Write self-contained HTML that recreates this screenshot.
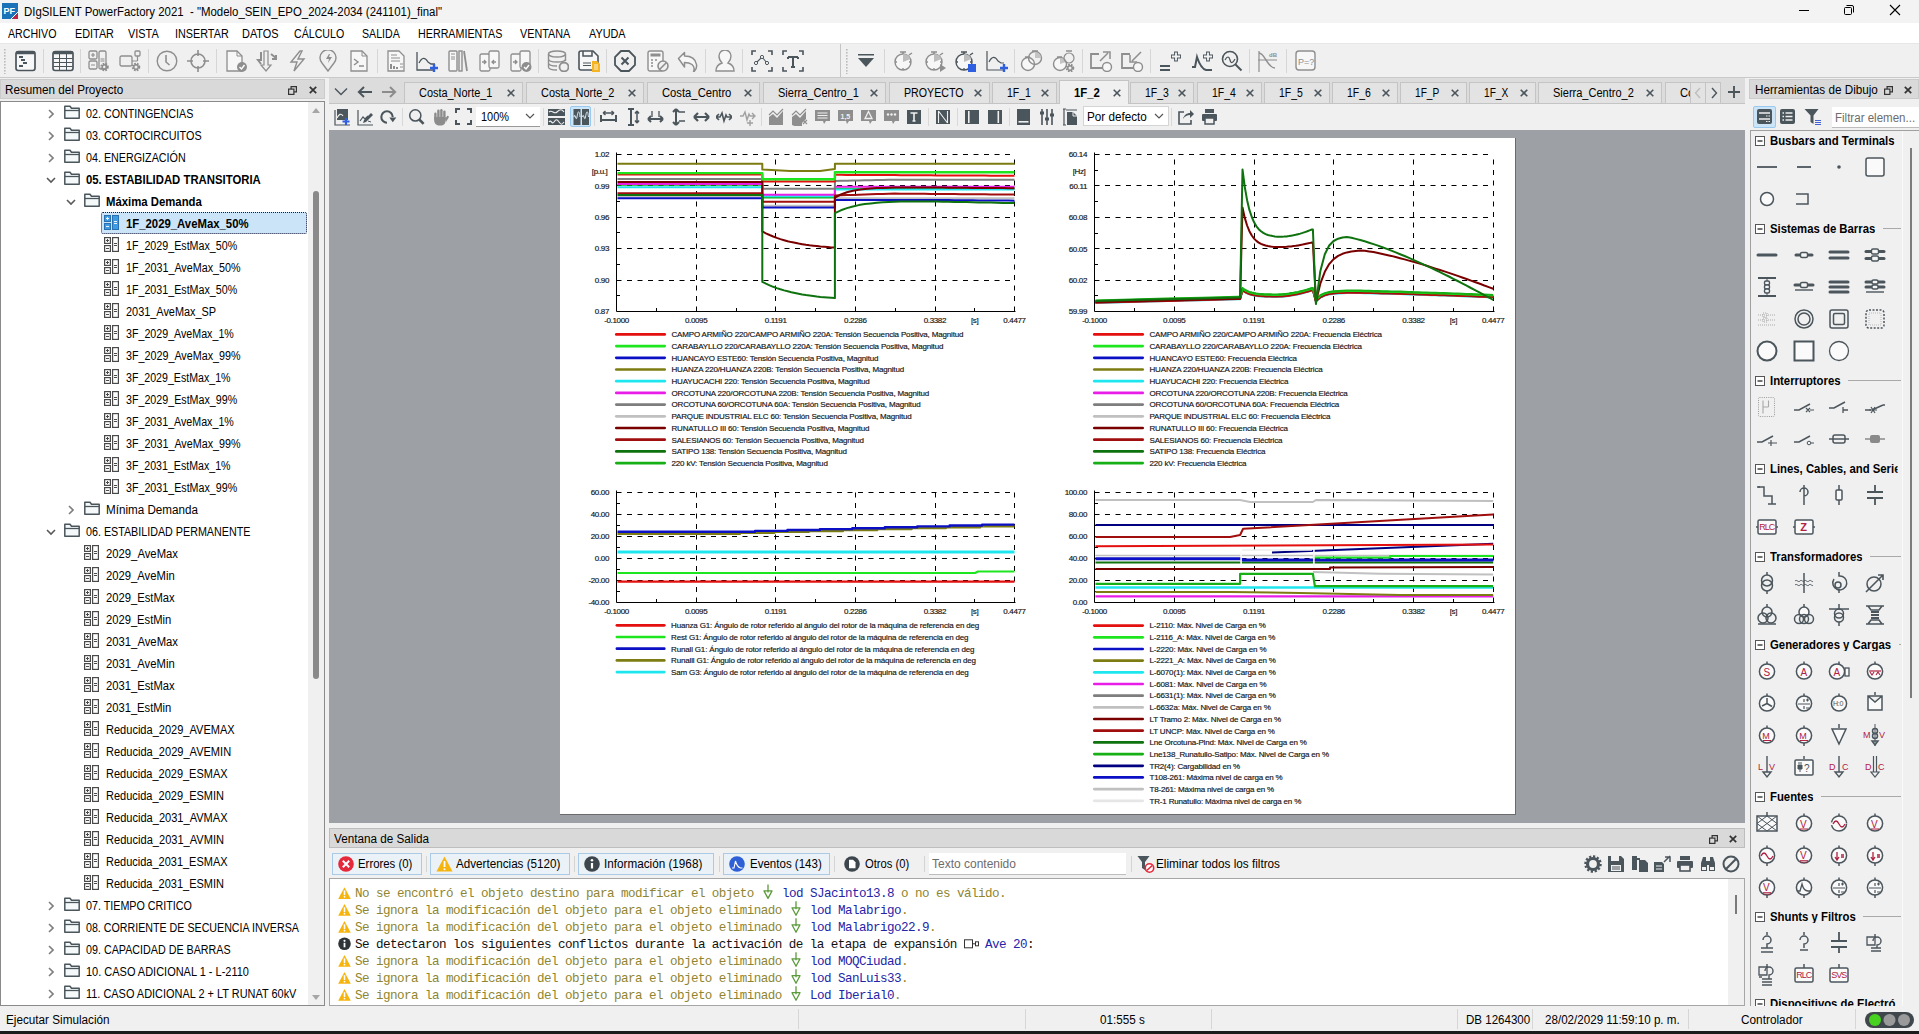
<!DOCTYPE html><html><head><meta charset="utf-8"><style>
*{margin:0;padding:0;box-sizing:border-box}
html,body{width:1919px;height:1034px;overflow:hidden;background:#f0f0f0;font-family:"Liberation Sans",sans-serif;font-size:12px;color:#000}
.a{position:absolute;display:block}
.t{position:absolute;white-space:nowrap;line-height:1}
</style></head><body>
<div class="a" style="left:0px;top:0px;width:1919px;height:23px;background:#f3f3f3;"></div>
<div class="a" style="left:0px;top:23px;width:1919px;height:20px;background:#ffffff;"></div>
<div class="a" style="left:0px;top:43px;width:1919px;height:1px;background:#e6e6e6;"></div>
<div class="a" style="left:0px;top:44px;width:1919px;height:33px;background:#f0f0f0;"></div>
<div class="a" style="left:0px;top:77px;width:1919px;height:1px;background:#c9c9c9;"></div>
<svg class="a" style="left:2px;top:3px" width="16" height="16" viewBox="0 0 16 16"><rect x="0" y="0" width="16" height="16" fill="#1a73b8"/><path d="M10 16 L16 10 L16 16 Z" fill="#c8203c"/><path d="M9 16 L16 9" stroke="#fff" stroke-width="1"/><text x="1.5" y="11" font-family="Liberation Sans" font-weight="bold" font-size="9" fill="#fff">PF</text></svg>
<div class="t" style="left:24px;top:5.54px;font-size:12px;transform:scaleX(0.9508);transform-origin:0 0;white-space:pre">DIgSILENT PowerFactory 2021  - "Modelo_SEIN_EPO_2024-2034 (241101)_final"</div>
<svg class="a" style="left:1799px;top:10px" width="10" height="1" viewBox="0 0 10 1"><rect width="10" height="1" fill="#000"/></svg>
<svg class="a" style="left:1843px;top:4px" width="12" height="12" viewBox="0 0 12 12"><rect x="1.5" y="3.5" width="7" height="7" rx="1" fill="none" stroke="#000"/><path d="M3.5 1.5 H9 a1.5 1.5 0 0 1 1.5 1.5 V8.5" fill="none" stroke="#000"/></svg>
<svg class="a" style="left:1889px;top:4px" width="12" height="12" viewBox="0 0 12 12"><path d="M1 1 L11 11 M11 1 L1 11" stroke="#000" stroke-width="1.1"/></svg>
<div class="t" style="left:8px;top:27.54px;font-size:12px;transform:scaleX(0.8850);transform-origin:0 0;">ARCHIVO</div>
<div class="t" style="left:75px;top:27.54px;font-size:12px;transform:scaleX(0.9033);transform-origin:0 0;">EDITAR</div>
<div class="t" style="left:128px;top:27.54px;font-size:12px;transform:scaleX(0.9083);transform-origin:0 0;">VISTA</div>
<div class="t" style="left:175px;top:27.54px;font-size:12px;transform:scaleX(0.9015);transform-origin:0 0;">INSERTAR</div>
<div class="t" style="left:242px;top:27.54px;font-size:12px;transform:scaleX(0.9094);transform-origin:0 0;">DATOS</div>
<div class="t" style="left:294px;top:27.54px;font-size:12px;transform:scaleX(0.8850);transform-origin:0 0;">CÁLCULO</div>
<div class="t" style="left:362px;top:27.54px;font-size:12px;transform:scaleX(0.8850);transform-origin:0 0;">SALIDA</div>
<div class="t" style="left:418px;top:27.54px;font-size:12px;transform:scaleX(0.8933);transform-origin:0 0;">HERRAMIENTAS</div>
<div class="t" style="left:520px;top:27.54px;font-size:12px;transform:scaleX(0.8991);transform-origin:0 0;">VENTANA</div>
<div class="t" style="left:589px;top:27.54px;font-size:12px;transform:scaleX(0.9045);transform-origin:0 0;">AYUDA</div>
<svg class="a" style="left:4px;top:49px" width="2" height="25" viewBox="0 0 2 25"><rect x="0" y="0" width="1.6" height="1.6" fill="#bcbcbc"/><rect x="0" y="3" width="1.6" height="1.6" fill="#bcbcbc"/><rect x="0" y="6" width="1.6" height="1.6" fill="#bcbcbc"/><rect x="0" y="9" width="1.6" height="1.6" fill="#bcbcbc"/><rect x="0" y="12" width="1.6" height="1.6" fill="#bcbcbc"/><rect x="0" y="15" width="1.6" height="1.6" fill="#bcbcbc"/><rect x="0" y="18" width="1.6" height="1.6" fill="#bcbcbc"/><rect x="0" y="21" width="1.6" height="1.6" fill="#bcbcbc"/><rect x="0" y="24" width="1.6" height="1.6" fill="#bcbcbc"/></svg>
<div class="a" style="left:43px;top:49px;width:1px;height:24px;background:#d6d6d6;"></div>
<div class="a" style="left:80px;top:49px;width:1px;height:24px;background:#d6d6d6;"></div>
<div class="a" style="left:148px;top:49px;width:1px;height:24px;background:#d6d6d6;"></div>
<div class="a" style="left:216px;top:49px;width:1px;height:24px;background:#d6d6d6;"></div>
<div class="a" style="left:377px;top:49px;width:1px;height:24px;background:#d6d6d6;"></div>
<div class="a" style="left:538px;top:49px;width:1px;height:24px;background:#d6d6d6;"></div>
<div class="a" style="left:606px;top:49px;width:1px;height:24px;background:#d6d6d6;"></div>
<div class="a" style="left:705px;top:49px;width:1px;height:24px;background:#d6d6d6;"></div>
<div class="a" style="left:742px;top:49px;width:1px;height:24px;background:#d6d6d6;"></div>
<div class="a" style="left:884px;top:49px;width:1px;height:24px;background:#d6d6d6;"></div>
<div class="a" style="left:1014px;top:49px;width:1px;height:24px;background:#d6d6d6;"></div>
<div class="a" style="left:1082px;top:49px;width:1px;height:24px;background:#d6d6d6;"></div>
<div class="a" style="left:1150px;top:49px;width:1px;height:24px;background:#d6d6d6;"></div>
<div class="a" style="left:1249px;top:49px;width:1px;height:24px;background:#d6d6d6;"></div>
<div class="a" style="left:1286px;top:49px;width:1px;height:24px;background:#d6d6d6;"></div>
<div class="a" style="left:840px;top:44px;width:1px;height:33px;background:#c4c4c4;"></div>
<svg class="a" style="left:846px;top:49px" width="2" height="25" viewBox="0 0 2 25"><rect x="0" y="0" width="1.6" height="1.6" fill="#bcbcbc"/><rect x="0" y="3" width="1.6" height="1.6" fill="#bcbcbc"/><rect x="0" y="6" width="1.6" height="1.6" fill="#bcbcbc"/><rect x="0" y="9" width="1.6" height="1.6" fill="#bcbcbc"/><rect x="0" y="12" width="1.6" height="1.6" fill="#bcbcbc"/><rect x="0" y="15" width="1.6" height="1.6" fill="#bcbcbc"/><rect x="0" y="18" width="1.6" height="1.6" fill="#bcbcbc"/><rect x="0" y="21" width="1.6" height="1.6" fill="#bcbcbc"/><rect x="0" y="24" width="1.6" height="1.6" fill="#bcbcbc"/></svg>
<svg class="a" style="left:15px;top:50px" width="22" height="22" viewBox="0 0 22 22"><rect x="1" y="1.5" width="19" height="19" rx="2.2" fill="#f7f7f7" stroke="#4b555c" stroke-width="1.7"/><rect x="1" y="1" width="19" height="3.2" rx="1.5" fill="#4b555c"/><path d="M4 7h4M6 10h4M8 13h4M4 16h4" stroke="#4b555c" stroke-width="2"/></svg>
<svg class="a" style="left:52px;top:50px" width="22" height="22" viewBox="0 0 22 22"><rect x="1" y="1.5" width="20" height="19" rx="2.2" fill="#f7f7f7" stroke="#4b555c" stroke-width="1.7"/><rect x="1" y="1" width="20" height="3.2" rx="1.5" fill="#4b555c"/><path d="M1.5 8.5h19M1.5 12.5h19M1.5 16.5h19M7.5 4v16M14.5 4v16" stroke="#4b555c" stroke-width="1"/></svg>
<svg class="a" style="left:88px;top:50px" width="22" height="22" viewBox="0 0 22 22"><rect x="1" y="1" width="8" height="8" rx="1.5" fill="none" stroke="#8e8e8e" stroke-width="1.3"/><rect x="1" y="11" width="8" height="8" rx="1.5" fill="none" stroke="#8e8e8e" stroke-width="1.3"/><path d="M3 5h4M5 3v4M3 15h4" stroke="#8e8e8e" stroke-width="1.2"/><rect x="11" y="1" width="7" height="18" rx="1.5" fill="none" stroke="#8e8e8e" stroke-width="1.3"/><path d="M12.5 9h4M12.5 11h4" stroke="#8e8e8e"/><circle cx="16.5" cy="17" r="3.2" fill="none" stroke="#8e8e8e" stroke-width="2.2" stroke-dasharray="1.6 1"/><circle cx="16.5" cy="17" r="2.2" fill="none" stroke="#8e8e8e" stroke-width="1.4"/></svg>
<svg class="a" style="left:119px;top:50px" width="22" height="22" viewBox="0 0 22 22"><rect x="1" y="6" width="12" height="10" rx="1.5" fill="none" stroke="#8e8e8e" stroke-width="1.3"/><rect x="16" y="1" width="5" height="5" rx="1" fill="none" stroke="#8e8e8e" stroke-width="1.3"/><path d="M13 11h5.5M18.5 6v5" stroke="#8e8e8e" stroke-width="1.2"/><circle cx="17" cy="17" r="3.2" fill="none" stroke="#8e8e8e" stroke-width="2.2" stroke-dasharray="1.6 1"/><circle cx="17" cy="17" r="2.2" fill="none" stroke="#8e8e8e" stroke-width="1.4"/></svg>
<svg class="a" style="left:156px;top:50px" width="22" height="22" viewBox="0 0 22 22"><circle cx="11" cy="11" r="9.8" fill="none" stroke="#8e8e8e" stroke-width="1.4"/><path d="M10 5v7l3.5 3" fill="none" stroke="#8e8e8e" stroke-width="1.6"/></svg>
<svg class="a" style="left:187px;top:50px" width="22" height="22" viewBox="0 0 22 22"><circle cx="11" cy="11" r="7" fill="none" stroke="#8e8e8e" stroke-width="1.6"/><path d="M11 0v6M11 16v6M0 11h6M16 11h6" stroke="#8e8e8e" stroke-width="1.6"/></svg>
<svg class="a" style="left:225px;top:50px" width="22" height="22" viewBox="0 0 22 22"><path d="M2 1h10l5 5v15H2z" fill="#f7f7f7" stroke="#8e8e8e" stroke-width="1.3"/><path d="M12 1v5h5" fill="none" stroke="#8e8e8e"/><circle cx="17" cy="17" r="5" fill="#8e8e8e"/><path d="M14.5 17l2 2 3-4" fill="none" stroke="#fff" stroke-width="1.4"/></svg>
<svg class="a" style="left:255px;top:50px" width="22" height="22" viewBox="0 0 22 22"><path d="M9 1h4v14h3l-5 6-5-6h3z" fill="none" stroke="#8e8e8e" stroke-width="1.2"/><path d="M6 2v8H3l3 4" fill="none" stroke="#8e8e8e" stroke-width="2"/><path d="M16 4l5 4M21 5v4h-4" fill="none" stroke="#8e8e8e" stroke-width="2"/></svg>
<svg class="a" style="left:287px;top:50px" width="22" height="22" viewBox="0 0 22 22"><path d="M13 1L4 12h6l-3 9 10-12h-6l4-8z" fill="none" stroke="#8e8e8e" stroke-width="1.4"/></svg>
<svg class="a" style="left:319px;top:50px" width="22" height="22" viewBox="0 0 22 22"><path d="M9 21L3 13A8 8 0 1 1 15 13z" fill="none" stroke="#8e8e8e" stroke-width="1.4"/><path d="M10 4l-3 5h3l-1 4 4-6h-3l1-3z" fill="#8e8e8e"/></svg>
<svg class="a" style="left:350px;top:50px" width="22" height="22" viewBox="0 0 22 22"><path d="M1 1h11l5 5v15H1z" fill="#f7f7f7" stroke="#8e8e8e" stroke-width="1.3"/><path d="M12 1v5h5" fill="none" stroke="#8e8e8e"/><path d="M4 9l4 3-4 3M9 16h5" fill="none" stroke="#8e8e8e" stroke-width="1.4"/></svg>
<svg class="a" style="left:387px;top:50px" width="22" height="22" viewBox="0 0 22 22"><path d="M1 1h11l5 5v15H1z" fill="#f7f7f7" stroke="#8e8e8e" stroke-width="1.3"/><path d="M4 5h6M4 8h9M4 11h9" stroke="#8e8e8e"/><path d="M4 19v-5M7 19v-3M10 19v-2" stroke="#8e8e8e" stroke-width="2"/><path d="M13 14h3M13 17h3" stroke="#8e8e8e"/></svg>
<svg class="a" style="left:415px;top:50px" width="24" height="22" viewBox="0 0 24 22"><path d="M2 2v18h16" fill="none" stroke="#4b555c" stroke-width="1.3"/><path d="M4 13c3-6 6-6 9-1l3 2h4" fill="none" stroke="#4b555c" stroke-width="1.3"/><path d="M19 14v8M15 18h8" stroke="#2f5fe0" stroke-width="2.4"/></svg>
<svg class="a" style="left:448px;top:50px" width="22" height="22" viewBox="0 0 22 22"><rect x="1" y="1" width="8" height="20" rx="1" fill="#f7f7f7" stroke="#8e8e8e" stroke-width="1.4"/><rect x="11" y="1" width="3" height="20" fill="none" stroke="#8e8e8e" stroke-width="1.4"/><path d="M16 1l3 20" stroke="#8e8e8e" stroke-width="1.8"/><path d="M3 4h4M3 7h4M3 9h4" stroke="#8e8e8e"/></svg>
<svg class="a" style="left:479px;top:50px" width="22" height="22" viewBox="0 0 22 22"><rect x="1" y="4" width="10" height="17" rx="1.5" fill="#f7f7f7" stroke="#8e8e8e" stroke-width="1.3"/><rect x="10" y="1" width="10" height="17" rx="1.5" fill="#f7f7f7" stroke="#8e8e8e" stroke-width="1.3"/><path d="M3 12h4M5 10l2 2-2 2M17 12h-4M15 10l-2 2 2 2" fill="none" stroke="#8e8e8e" stroke-width="1.3"/></svg>
<svg class="a" style="left:510px;top:50px" width="22" height="22" viewBox="0 0 22 22"><rect x="1" y="4" width="10" height="17" rx="1.5" fill="#f7f7f7" stroke="#8e8e8e" stroke-width="1.3"/><rect x="10" y="1" width="10" height="17" rx="1.5" fill="#f7f7f7" stroke="#8e8e8e" stroke-width="1.3"/><path d="M3 12h4M5 10l2 2-2 2" fill="none" stroke="#8e8e8e" stroke-width="1.3"/><circle cx="16.5" cy="17" r="5" fill="#8e8e8e"/><path d="M14 17l2 2 3-4" fill="none" stroke="#fff" stroke-width="1.4"/></svg>
<svg class="a" style="left:547px;top:50px" width="22" height="22" viewBox="0 0 22 22"><ellipse cx="10" cy="4" rx="8.5" ry="3" fill="none" stroke="#8e8e8e" stroke-width="1.4"/><path d="M1.5 4v13c0 2 4 3 8.5 3M18.5 4v7M1.5 9c0 2 4 3 8.5 3s8.5-1 8.5-3M1.5 13c0 2 4 3 8.5 3" fill="none" stroke="#8e8e8e" stroke-width="1.4"/><circle cx="17" cy="17" r="4.5" fill="#f0f0f0" stroke="#8e8e8e" stroke-width="1.8"/></svg>
<svg class="a" style="left:578px;top:50px" width="22" height="22" viewBox="0 0 22 22"><path d="M1 3a2 2 0 0 1 2-2h12l5 5v12a2 2 0 0 1-2 2H3a2 2 0 0 1-2-2z" fill="#f7f7f7" stroke="#4b555c" stroke-width="1.6"/><path d="M5 1v5h9V1" fill="none" stroke="#4b555c" stroke-width="1.5"/><path d="M5 13h8M5 15.5h8" stroke="#4b555c" stroke-width="1.2"/><path d="M14 11h5l3 3v8h-8z" fill="#f5b422"/><path d="M16 15h4M16 17h4M16 19h4" stroke="#fff" stroke-width=".8"/></svg>
<svg class="a" style="left:614px;top:50px" width="22" height="22" viewBox="0 0 22 22"><path d="M7 1h8l6 6v8l-6 6H7l-6-6V7z" fill="none" stroke="#4b555c" stroke-width="1.8"/><path d="M7.5 7.5l7 7M14.5 7.5l-7 7" stroke="#4b555c" stroke-width="2"/></svg>
<svg class="a" style="left:647px;top:50px" width="22" height="22" viewBox="0 0 22 22"><rect x="1" y="1" width="15" height="20" rx="2" fill="#f7f7f7" stroke="#8e8e8e" stroke-width="1.4"/><rect x="3.5" y="3.5" width="10" height="3" fill="#8e8e8e"/><path d="M4 10h2M8 10h2M4 13h2M4 16h2" stroke="#8e8e8e" stroke-width="1.6"/><circle cx="16" cy="16" r="5" fill="#f0f0f0" stroke="#8e8e8e" stroke-width="1.6"/><path d="M12.5 19.5l7-7" stroke="#8e8e8e" stroke-width="1.6"/></svg>
<svg class="a" style="left:677px;top:50px" width="22" height="22" viewBox="0 0 22 22"><path d="M1.5 8.5L7.5 2.5V6c6 0 11 2.5 12 8.5 .5 3-1 6-3 7.5 1-2.5 1-5.5-1.5-7.5-2-1.5-4.5-2-7.5-2v4.5z" fill="#f7f7f7" stroke="#8e8e8e" stroke-width="1.5" stroke-linejoin="round"/></svg>
<svg class="a" style="left:714px;top:50px" width="22" height="22" viewBox="0 0 22 22"><path d="M2 21c0-4 3-7 6-8-2-2-3-4-3-7a6 6 0 0 1 12 0c0 3-1 5-3 7 3 1 6 4 6 8z" fill="#f7f7f7" stroke="#8e8e8e" stroke-width="1.4"/></svg>
<svg class="a" style="left:751px;top:50px" width="22" height="22" viewBox="0 0 22 22"><path d="M1 5V1h4M17 1h4v4M21 17v4h-4M5 21H1v-4" fill="none" stroke="#4b555c" stroke-width="1.6"/><path d="M5 13l6-6 5 6" fill="none" stroke="#4b555c" stroke-width="1.1"/><circle cx="5" cy="13" r="1.6" fill="#fff" stroke="#4b555c"/><circle cx="11" cy="7" r="1.6" fill="#fff" stroke="#4b555c"/><circle cx="16" cy="13" r="1.6" fill="#fff" stroke="#4b555c"/></svg>
<svg class="a" style="left:782px;top:50px" width="22" height="22" viewBox="0 0 22 22"><path d="M1 5V1h4M17 1h4v4M21 17v4h-4M5 21H1v-4" fill="none" stroke="#4b555c" stroke-width="1.6"/><path d="M6 7h10M11 7v10M9 17h4M6 7v2M16 7v2" fill="none" stroke="#4b555c" stroke-width="2"/></svg>
<svg class="a" style="left:857px;top:51px" width="18" height="22" viewBox="0 0 18 22"><rect x="1" y="3" width="16" height="1.5" fill="#4b555c"/><path d="M1 7h16l-8 9z" fill="#4b555c"/></svg>
<svg class="a" style="left:894px;top:50px" width="22" height="22" viewBox="0 0 22 22"><circle cx="9" cy="12" r="8" fill="#f7f7f7" stroke="#8e8e8e" stroke-width="1.4"/><path d="M9 12V4A8 8 0 0 1 16.5 9z" fill="#bdbdbd"/><path d="M6 2h6M9 2v2M15 5l3-2" stroke="#8e8e8e" stroke-width="1.5"/><path d="M9 18v2M1 12h2M15 12h2" stroke="#8e8e8e" stroke-width="1.4"/></svg>
<svg class="a" style="left:925px;top:50px" width="22" height="22" viewBox="0 0 22 22"><circle cx="9" cy="12" r="8" fill="#f7f7f7" stroke="#8e8e8e" stroke-width="1.4"/><path d="M9 12V4A8 8 0 0 1 16.5 9z" fill="#bdbdbd"/><path d="M6 2h6M9 2v2M15 5l3-2" stroke="#8e8e8e" stroke-width="1.5"/><path d="M9 18v2M1 12h2M15 12h2" stroke="#8e8e8e" stroke-width="1.4"/><path d="M15 14v8l6-4z" fill="#8e8e8e"/></svg>
<svg class="a" style="left:955px;top:50px" width="22" height="22" viewBox="0 0 22 22"><circle cx="9" cy="12" r="8" fill="#f7f7f7" stroke="#4b555c" stroke-width="1.4"/><path d="M9 12V4A8 8 0 0 1 16.5 9z" fill="#bdbdbd"/><path d="M6 2h6M9 2v2M15 5l3-2" stroke="#4b555c" stroke-width="1.5"/><path d="M9 18v2M1 12h2M15 12h2" stroke="#4b555c" stroke-width="1.4"/><rect x="13" y="14" width="8" height="8" fill="#2f5fe0"/></svg>
<svg class="a" style="left:985px;top:50px" width="24" height="22" viewBox="0 0 24 22"><path d="M2 1v19h16" fill="none" stroke="#4b555c" stroke-width="1.2"/><path d="M4 12c3-6 6-6 9-1l3 2h3" fill="none" stroke="#4b555c" stroke-width="1.2"/><path d="M19 14v8M15 18h8" stroke="#2f5fe0" stroke-width="2.4"/></svg>
<svg class="a" style="left:1020px;top:50px" width="24" height="22" viewBox="0 0 24 22"><circle cx="8" cy="14" r="6.5" fill="#f7f7f7" stroke="#8e8e8e" stroke-width="1.4"/><circle cx="15" cy="8" r="6.5" fill="none" stroke="#8e8e8e" stroke-width="1.4"/><path d="M15 8V2A6 6 0 0 1 21 8z" fill="#c4c4c4"/><path d="M12 1h6M5 7h5" stroke="#8e8e8e" stroke-width="1.4"/></svg>
<svg class="a" style="left:1052px;top:50px" width="24" height="22" viewBox="0 0 24 22"><circle cx="8" cy="14" r="6.5" fill="#f7f7f7" stroke="#8e8e8e" stroke-width="1.4"/><path d="M8 14V8A6 6 0 0 1 14 12z" fill="#c4c4c4"/><path d="M5 7h5M14 1h6" stroke="#8e8e8e" stroke-width="1.4"/><circle cx="17" cy="8" r="5" fill="none" stroke="#8e8e8e" stroke-width="1.2"/><circle cx="18" cy="18" r="3.2" fill="none" stroke="#8e8e8e" stroke-width="2.2" stroke-dasharray="1.6 1"/><circle cx="18" cy="18" r="2.2" fill="none" stroke="#8e8e8e" stroke-width="1.4"/></svg>
<svg class="a" style="left:1090px;top:50px" width="23" height="22" viewBox="0 0 23 22"><path d="M9 4H1v14h12" fill="none" stroke="#8e8e8e" stroke-width="1.8"/><path d="M10 11l8-8M13 2h7v7" fill="none" stroke="#8e8e8e" stroke-width="1.5"/><circle cx="17" cy="17" r="4.5" fill="#f7f7f7" stroke="#8e8e8e" stroke-width="1.4"/></svg>
<svg class="a" style="left:1121px;top:50px" width="23" height="22" viewBox="0 0 23 22"><path d="M9 4H1v14h12" fill="none" stroke="#8e8e8e" stroke-width="1.8"/><path d="M20 2l-9 9M9 5v7h7" fill="none" stroke="#8e8e8e" stroke-width="1.5"/><circle cx="17" cy="17" r="4.5" fill="#f7f7f7" stroke="#8e8e8e" stroke-width="1.4"/></svg>
<svg class="a" style="left:1159px;top:50px" width="22" height="22" viewBox="0 0 22 22"><path d="M1 16h10M1 20h10" stroke="#4b555c" stroke-width="2"/><path d="M12 6.5h10M17 1.5v10" stroke="#4b555c" stroke-width="3.8"/><path d="M12.9 6.5h8.2M17 2.4v8.2" stroke="#f4f4f4" stroke-width="1.8"/></svg>
<svg class="a" style="left:1191px;top:50px" width="22" height="22" viewBox="0 0 22 22"><path d="M1 17h3l2-10c2 6 5 12 9 13h6" fill="none" stroke="#4b555c" stroke-width="2"/><path d="M12 6.5h10M17 1.5v10" stroke="#4b555c" stroke-width="3.8"/><path d="M12.9 6.5h8.2M17 2.4v8.2" stroke="#f4f4f4" stroke-width="1.8"/></svg>
<svg class="a" style="left:1221px;top:50px" width="22" height="22" viewBox="0 0 22 22"><circle cx="9" cy="9" r="7.5" fill="none" stroke="#4b555c" stroke-width="1.6"/><path d="M14.5 14.5l6 6" stroke="#4b555c" stroke-width="2"/><path d="M4 10c2-4 4-4 5 0s3 3 5-1" fill="none" stroke="#4b555c" stroke-width="1.2"/></svg>
<svg class="a" style="left:1257px;top:50px" width="22" height="22" viewBox="0 0 22 22"><path d="M2 1v21M1 10h19" stroke="#8e8e8e" stroke-width="1.2"/><path d="M2 3c6 0 8 15 16 15" fill="none" stroke="#8e8e8e" stroke-width="1.4"/><text x="12" y="7" font-size="6" font-family="Liberation Sans" font-weight="bold" fill="#8e8e8e">dB</text></svg>
<svg class="a" style="left:1295px;top:50px" width="21" height="22" viewBox="0 0 21 22"><rect x="1" y="1" width="19" height="19" rx="3" fill="#f7f7f7" stroke="#8e8e8e" stroke-width="1.4"/><text x="3" y="14.5" font-size="9" font-family="Liberation Sans" fill="#8e8e8e">P=?</text></svg>
<div class="a" style="left:0px;top:79px;width:325px;height:20px;background:#d9d9d9;border:1px solid #cbcbcb"></div>
<div class="t" style="left:5px;top:84.14px;font-size:12px;transform:scaleX(0.9743);transform-origin:0 0;">Resumen del Proyecto</div>
<svg class="a" style="left:288px;top:86px" width="9" height="9" viewBox="0 0 9 9"><rect x="0.6" y="3.1" width="5.3" height="5.3" fill="none" stroke="#333" stroke-width="1.2"/><path d="M3.1 3.1V0.6h5.3v5.3H5.9" fill="none" stroke="#333" stroke-width="1.2"/></svg>
<svg class="a" style="left:309px;top:86px" width="8" height="8" viewBox="0 0 8 8"><path d="M0.8 0.8L7.2 7.2M7.2 0.8L0.8 7.2" stroke="#333" stroke-width="1.7"/></svg>
<div class="a" style="left:0px;top:101px;width:325px;height:905px;background:#fff;border:1px solid #8a8a8a"></div>
<div class="a" style="left:308px;top:102px;width:16px;height:903px;background:#f0f0f0;"></div>
<svg class="a" style="left:311px;top:106px" width="10" height="8" viewBox="0 0 10 8"><path d="M1 7L5 2L9 7z" fill="#a6a6a6"/></svg>
<svg class="a" style="left:311px;top:994px" width="10" height="8" viewBox="0 0 10 8"><path d="M1 1L5 6L9 1z" fill="#a6a6a6"/></svg>
<div class="a" style="left:313px;top:191px;width:6px;height:488px;background:#8a8a8a;border-radius:3px"></div>
<svg class="a" style="left:48px;top:108.5px" width="6" height="10" viewBox="0 0 6 10"><path d="M1 1L5 5L1 9" fill="none" stroke="#7e7e7e" stroke-width="1.6"/></svg>
<svg class="a" style="left:64px;top:105.0px" width="16" height="14" viewBox="0 0 16 14"><path d="M0.8 1.3h5.2l1.5 2h7.7v9.9H0.8z" fill="#f5f9f9" stroke="#4b555c" stroke-width="1.5" stroke-linejoin="round"/><path d="M0.8 5.5h14.4" stroke="#4b555c" stroke-width="1.3"/></svg>
<div class="t" style="left:86px;top:107.74px;font-size:12px;transform:scaleX(0.8942);transform-origin:0 0;">02. CONTINGENCIAS</div>
<svg class="a" style="left:48px;top:130.5px" width="6" height="10" viewBox="0 0 6 10"><path d="M1 1L5 5L1 9" fill="none" stroke="#7e7e7e" stroke-width="1.6"/></svg>
<svg class="a" style="left:64px;top:127.0px" width="16" height="14" viewBox="0 0 16 14"><path d="M0.8 1.3h5.2l1.5 2h7.7v9.9H0.8z" fill="#f5f9f9" stroke="#4b555c" stroke-width="1.5" stroke-linejoin="round"/><path d="M0.8 5.5h14.4" stroke="#4b555c" stroke-width="1.3"/></svg>
<div class="t" style="left:86px;top:129.74px;font-size:12px;transform:scaleX(0.8980);transform-origin:0 0;">03. CORTOCIRCUITOS</div>
<svg class="a" style="left:48px;top:152.5px" width="6" height="10" viewBox="0 0 6 10"><path d="M1 1L5 5L1 9" fill="none" stroke="#7e7e7e" stroke-width="1.6"/></svg>
<svg class="a" style="left:64px;top:149.0px" width="16" height="14" viewBox="0 0 16 14"><path d="M0.8 1.3h5.2l1.5 2h7.7v9.9H0.8z" fill="#f5f9f9" stroke="#4b555c" stroke-width="1.5" stroke-linejoin="round"/><path d="M0.8 5.5h14.4" stroke="#4b555c" stroke-width="1.3"/></svg>
<div class="t" style="left:86px;top:151.74px;font-size:12px;transform:scaleX(0.8949);transform-origin:0 0;">04. ENERGIZACIÓN</div>
<svg class="a" style="left:46px;top:175.5px" width="10" height="8" viewBox="0 0 10 8"><path d="M1 2L5 6L9 2" fill="none" stroke="#5a5a5a" stroke-width="1.6"/></svg>
<svg class="a" style="left:64px;top:171.0px" width="16" height="14" viewBox="0 0 16 14"><path d="M0.8 1.3h5.2l1.5 2h7.7v9.9H0.8z" fill="#f5f9f9" stroke="#4b555c" stroke-width="1.5" stroke-linejoin="round"/><path d="M0.8 5.5h14.4" stroke="#4b555c" stroke-width="1.3"/></svg>
<div class="t" style="left:86px;top:173.74px;font-size:12px;font-weight:bold;transform:scaleX(0.9450);transform-origin:0 0;">05. ESTABILIDAD TRANSITORIA</div>
<svg class="a" style="left:66px;top:197.5px" width="10" height="8" viewBox="0 0 10 8"><path d="M1 2L5 6L9 2" fill="none" stroke="#5a5a5a" stroke-width="1.6"/></svg>
<svg class="a" style="left:84px;top:193.0px" width="16" height="14" viewBox="0 0 16 14"><path d="M0.8 1.3h5.2l1.5 2h7.7v9.9H0.8z" fill="#f5f9f9" stroke="#4b555c" stroke-width="1.5" stroke-linejoin="round"/><path d="M0.8 5.5h14.4" stroke="#4b555c" stroke-width="1.3"/></svg>
<div class="t" style="left:106px;top:195.74px;font-size:12px;font-weight:bold;transform:scaleX(0.9450);transform-origin:0 0;">Máxima Demanda</div>
<div class="a" style="left:101px;top:212px;width:206px;height:22px;background:#cce4f7;border:1px dotted #1a1a40;border-radius:2px"></div>
<svg class="a" style="left:104px;top:215.0px" width="15" height="15" viewBox="0 0 15 15"><rect x="0.5" y="0.5" width="6" height="6" fill="#3d9be3" stroke="#2a6fb0"/><rect x="0.5" y="8.5" width="6" height="6" fill="#3d9be3" stroke="#2a6fb0"/><rect x="8.5" y="0.5" width="6" height="14" fill="#3d9be3" stroke="#2a6fb0"/><path d="M2 3.5h3M3.5 2v3M2 11.5h3M10 6.5h3M10 8.5h3" stroke="#e8f4ff" stroke-width="1"/></svg>
<div class="t" style="left:126px;top:217.74px;font-size:12px;font-weight:bold;transform:scaleX(0.9450);transform-origin:0 0;">1F_2029_AveMax_50%</div>
<svg class="a" style="left:104px;top:237.0px" width="15" height="15" viewBox="0 0 15 15"><rect x="0.6" y="0.6" width="5.8" height="5.8" fill="none" stroke="#4a4a4a" stroke-width="1.2"/><rect x="0.6" y="8.6" width="5.8" height="5.8" fill="none" stroke="#4a4a4a" stroke-width="1.2"/><rect x="8.6" y="0.6" width="5.8" height="13.8" fill="none" stroke="#4a4a4a" stroke-width="1.2"/><path d="M2 3.5h3M3.5 2v3M2 11.5h3M10 6.5h3M10 8.5h3" stroke="#4a4a4a" stroke-width="1"/></svg>
<div class="t" style="left:126px;top:239.74px;font-size:12px;transform:scaleX(0.8911);transform-origin:0 0;">1F_2029_EstMax_50%</div>
<svg class="a" style="left:104px;top:259.0px" width="15" height="15" viewBox="0 0 15 15"><rect x="0.6" y="0.6" width="5.8" height="5.8" fill="none" stroke="#4a4a4a" stroke-width="1.2"/><rect x="0.6" y="8.6" width="5.8" height="5.8" fill="none" stroke="#4a4a4a" stroke-width="1.2"/><rect x="8.6" y="0.6" width="5.8" height="13.8" fill="none" stroke="#4a4a4a" stroke-width="1.2"/><path d="M2 3.5h3M3.5 2v3M2 11.5h3M10 6.5h3M10 8.5h3" stroke="#4a4a4a" stroke-width="1"/></svg>
<div class="t" style="left:126px;top:261.74px;font-size:12px;transform:scaleX(0.8954);transform-origin:0 0;">1F_2031_AveMax_50%</div>
<svg class="a" style="left:104px;top:281.0px" width="15" height="15" viewBox="0 0 15 15"><rect x="0.6" y="0.6" width="5.8" height="5.8" fill="none" stroke="#4a4a4a" stroke-width="1.2"/><rect x="0.6" y="8.6" width="5.8" height="5.8" fill="none" stroke="#4a4a4a" stroke-width="1.2"/><rect x="8.6" y="0.6" width="5.8" height="13.8" fill="none" stroke="#4a4a4a" stroke-width="1.2"/><path d="M2 3.5h3M3.5 2v3M2 11.5h3M10 6.5h3M10 8.5h3" stroke="#4a4a4a" stroke-width="1"/></svg>
<div class="t" style="left:126px;top:283.74px;font-size:12px;transform:scaleX(0.8911);transform-origin:0 0;">1F_2031_EstMax_50%</div>
<svg class="a" style="left:104px;top:303.0px" width="15" height="15" viewBox="0 0 15 15"><rect x="0.6" y="0.6" width="5.8" height="5.8" fill="none" stroke="#4a4a4a" stroke-width="1.2"/><rect x="0.6" y="8.6" width="5.8" height="5.8" fill="none" stroke="#4a4a4a" stroke-width="1.2"/><rect x="8.6" y="0.6" width="5.8" height="13.8" fill="none" stroke="#4a4a4a" stroke-width="1.2"/><path d="M2 3.5h3M3.5 2v3M2 11.5h3M10 6.5h3M10 8.5h3" stroke="#4a4a4a" stroke-width="1"/></svg>
<div class="t" style="left:126px;top:305.74px;font-size:12px;transform:scaleX(0.9089);transform-origin:0 0;">2031_AveMax_SP</div>
<svg class="a" style="left:104px;top:325.0px" width="15" height="15" viewBox="0 0 15 15"><rect x="0.6" y="0.6" width="5.8" height="5.8" fill="none" stroke="#4a4a4a" stroke-width="1.2"/><rect x="0.6" y="8.6" width="5.8" height="5.8" fill="none" stroke="#4a4a4a" stroke-width="1.2"/><rect x="8.6" y="0.6" width="5.8" height="13.8" fill="none" stroke="#4a4a4a" stroke-width="1.2"/><path d="M2 3.5h3M3.5 2v3M2 11.5h3M10 6.5h3M10 8.5h3" stroke="#4a4a4a" stroke-width="1"/></svg>
<div class="t" style="left:126px;top:327.74px;font-size:12px;transform:scaleX(0.8897);transform-origin:0 0;">3F_2029_AveMax_1%</div>
<svg class="a" style="left:104px;top:347.0px" width="15" height="15" viewBox="0 0 15 15"><rect x="0.6" y="0.6" width="5.8" height="5.8" fill="none" stroke="#4a4a4a" stroke-width="1.2"/><rect x="0.6" y="8.6" width="5.8" height="5.8" fill="none" stroke="#4a4a4a" stroke-width="1.2"/><rect x="8.6" y="0.6" width="5.8" height="13.8" fill="none" stroke="#4a4a4a" stroke-width="1.2"/><path d="M2 3.5h3M3.5 2v3M2 11.5h3M10 6.5h3M10 8.5h3" stroke="#4a4a4a" stroke-width="1"/></svg>
<div class="t" style="left:126px;top:349.74px;font-size:12px;transform:scaleX(0.8954);transform-origin:0 0;">3F_2029_AveMax_99%</div>
<svg class="a" style="left:104px;top:369.0px" width="15" height="15" viewBox="0 0 15 15"><rect x="0.6" y="0.6" width="5.8" height="5.8" fill="none" stroke="#4a4a4a" stroke-width="1.2"/><rect x="0.6" y="8.6" width="5.8" height="5.8" fill="none" stroke="#4a4a4a" stroke-width="1.2"/><rect x="8.6" y="0.6" width="5.8" height="13.8" fill="none" stroke="#4a4a4a" stroke-width="1.2"/><path d="M2 3.5h3M3.5 2v3M2 11.5h3M10 6.5h3M10 8.5h3" stroke="#4a4a4a" stroke-width="1"/></svg>
<div class="t" style="left:126px;top:371.74px;font-size:12px;transform:scaleX(0.8849);transform-origin:0 0;">3F_2029_EstMax_1%</div>
<svg class="a" style="left:104px;top:391.0px" width="15" height="15" viewBox="0 0 15 15"><rect x="0.6" y="0.6" width="5.8" height="5.8" fill="none" stroke="#4a4a4a" stroke-width="1.2"/><rect x="0.6" y="8.6" width="5.8" height="5.8" fill="none" stroke="#4a4a4a" stroke-width="1.2"/><rect x="8.6" y="0.6" width="5.8" height="13.8" fill="none" stroke="#4a4a4a" stroke-width="1.2"/><path d="M2 3.5h3M3.5 2v3M2 11.5h3M10 6.5h3M10 8.5h3" stroke="#4a4a4a" stroke-width="1"/></svg>
<div class="t" style="left:126px;top:393.74px;font-size:12px;transform:scaleX(0.8911);transform-origin:0 0;">3F_2029_EstMax_99%</div>
<svg class="a" style="left:104px;top:413.0px" width="15" height="15" viewBox="0 0 15 15"><rect x="0.6" y="0.6" width="5.8" height="5.8" fill="none" stroke="#4a4a4a" stroke-width="1.2"/><rect x="0.6" y="8.6" width="5.8" height="5.8" fill="none" stroke="#4a4a4a" stroke-width="1.2"/><rect x="8.6" y="0.6" width="5.8" height="13.8" fill="none" stroke="#4a4a4a" stroke-width="1.2"/><path d="M2 3.5h3M3.5 2v3M2 11.5h3M10 6.5h3M10 8.5h3" stroke="#4a4a4a" stroke-width="1"/></svg>
<div class="t" style="left:126px;top:415.74px;font-size:12px;transform:scaleX(0.8897);transform-origin:0 0;">3F_2031_AveMax_1%</div>
<svg class="a" style="left:104px;top:435.0px" width="15" height="15" viewBox="0 0 15 15"><rect x="0.6" y="0.6" width="5.8" height="5.8" fill="none" stroke="#4a4a4a" stroke-width="1.2"/><rect x="0.6" y="8.6" width="5.8" height="5.8" fill="none" stroke="#4a4a4a" stroke-width="1.2"/><rect x="8.6" y="0.6" width="5.8" height="13.8" fill="none" stroke="#4a4a4a" stroke-width="1.2"/><path d="M2 3.5h3M3.5 2v3M2 11.5h3M10 6.5h3M10 8.5h3" stroke="#4a4a4a" stroke-width="1"/></svg>
<div class="t" style="left:126px;top:437.74px;font-size:12px;transform:scaleX(0.8954);transform-origin:0 0;">3F_2031_AveMax_99%</div>
<svg class="a" style="left:104px;top:457.0px" width="15" height="15" viewBox="0 0 15 15"><rect x="0.6" y="0.6" width="5.8" height="5.8" fill="none" stroke="#4a4a4a" stroke-width="1.2"/><rect x="0.6" y="8.6" width="5.8" height="5.8" fill="none" stroke="#4a4a4a" stroke-width="1.2"/><rect x="8.6" y="0.6" width="5.8" height="13.8" fill="none" stroke="#4a4a4a" stroke-width="1.2"/><path d="M2 3.5h3M3.5 2v3M2 11.5h3M10 6.5h3M10 8.5h3" stroke="#4a4a4a" stroke-width="1"/></svg>
<div class="t" style="left:126px;top:459.74px;font-size:12px;transform:scaleX(0.8849);transform-origin:0 0;">3F_2031_EstMax_1%</div>
<svg class="a" style="left:104px;top:479.0px" width="15" height="15" viewBox="0 0 15 15"><rect x="0.6" y="0.6" width="5.8" height="5.8" fill="none" stroke="#4a4a4a" stroke-width="1.2"/><rect x="0.6" y="8.6" width="5.8" height="5.8" fill="none" stroke="#4a4a4a" stroke-width="1.2"/><rect x="8.6" y="0.6" width="5.8" height="13.8" fill="none" stroke="#4a4a4a" stroke-width="1.2"/><path d="M2 3.5h3M3.5 2v3M2 11.5h3M10 6.5h3M10 8.5h3" stroke="#4a4a4a" stroke-width="1"/></svg>
<div class="t" style="left:126px;top:481.74px;font-size:12px;transform:scaleX(0.8911);transform-origin:0 0;">3F_2031_EstMax_99%</div>
<svg class="a" style="left:68px;top:504.5px" width="6" height="10" viewBox="0 0 6 10"><path d="M1 1L5 5L1 9" fill="none" stroke="#7e7e7e" stroke-width="1.6"/></svg>
<svg class="a" style="left:84px;top:501.0px" width="16" height="14" viewBox="0 0 16 14"><path d="M0.8 1.3h5.2l1.5 2h7.7v9.9H0.8z" fill="#f5f9f9" stroke="#4b555c" stroke-width="1.5" stroke-linejoin="round"/><path d="M0.8 5.5h14.4" stroke="#4b555c" stroke-width="1.3"/></svg>
<div class="t" style="left:106px;top:503.74px;font-size:12px;transform:scaleX(0.9710);transform-origin:0 0;">Mínima Demanda</div>
<svg class="a" style="left:46px;top:527.5px" width="10" height="8" viewBox="0 0 10 8"><path d="M1 2L5 6L9 2" fill="none" stroke="#5a5a5a" stroke-width="1.6"/></svg>
<svg class="a" style="left:64px;top:523.0px" width="16" height="14" viewBox="0 0 16 14"><path d="M0.8 1.3h5.2l1.5 2h7.7v9.9H0.8z" fill="#f5f9f9" stroke="#4b555c" stroke-width="1.5" stroke-linejoin="round"/><path d="M0.8 5.5h14.4" stroke="#4b555c" stroke-width="1.3"/></svg>
<div class="t" style="left:86px;top:525.74px;font-size:12px;transform:scaleX(0.8941);transform-origin:0 0;">06. ESTABILIDAD PERMANENTE</div>
<svg class="a" style="left:84px;top:545.0px" width="15" height="15" viewBox="0 0 15 15"><rect x="0.6" y="0.6" width="5.8" height="5.8" fill="none" stroke="#4a4a4a" stroke-width="1.2"/><rect x="0.6" y="8.6" width="5.8" height="5.8" fill="none" stroke="#4a4a4a" stroke-width="1.2"/><rect x="8.6" y="0.6" width="5.8" height="13.8" fill="none" stroke="#4a4a4a" stroke-width="1.2"/><path d="M2 3.5h3M3.5 2v3M2 11.5h3M10 6.5h3M10 8.5h3" stroke="#4a4a4a" stroke-width="1"/></svg>
<div class="t" style="left:106px;top:547.74px;font-size:12px;transform:scaleX(0.9409);transform-origin:0 0;">2029_AveMax</div>
<svg class="a" style="left:84px;top:567.0px" width="15" height="15" viewBox="0 0 15 15"><rect x="0.6" y="0.6" width="5.8" height="5.8" fill="none" stroke="#4a4a4a" stroke-width="1.2"/><rect x="0.6" y="8.6" width="5.8" height="5.8" fill="none" stroke="#4a4a4a" stroke-width="1.2"/><rect x="8.6" y="0.6" width="5.8" height="13.8" fill="none" stroke="#4a4a4a" stroke-width="1.2"/><path d="M2 3.5h3M3.5 2v3M2 11.5h3M10 6.5h3M10 8.5h3" stroke="#4a4a4a" stroke-width="1"/></svg>
<div class="t" style="left:106px;top:569.74px;font-size:12px;transform:scaleX(0.9382);transform-origin:0 0;">2029_AveMin</div>
<svg class="a" style="left:84px;top:589.0px" width="15" height="15" viewBox="0 0 15 15"><rect x="0.6" y="0.6" width="5.8" height="5.8" fill="none" stroke="#4a4a4a" stroke-width="1.2"/><rect x="0.6" y="8.6" width="5.8" height="5.8" fill="none" stroke="#4a4a4a" stroke-width="1.2"/><rect x="8.6" y="0.6" width="5.8" height="13.8" fill="none" stroke="#4a4a4a" stroke-width="1.2"/><path d="M2 3.5h3M3.5 2v3M2 11.5h3M10 6.5h3M10 8.5h3" stroke="#4a4a4a" stroke-width="1"/></svg>
<div class="t" style="left:106px;top:591.74px;font-size:12px;transform:scaleX(0.9354);transform-origin:0 0;">2029_EstMax</div>
<svg class="a" style="left:84px;top:611.0px" width="15" height="15" viewBox="0 0 15 15"><rect x="0.6" y="0.6" width="5.8" height="5.8" fill="none" stroke="#4a4a4a" stroke-width="1.2"/><rect x="0.6" y="8.6" width="5.8" height="5.8" fill="none" stroke="#4a4a4a" stroke-width="1.2"/><rect x="8.6" y="0.6" width="5.8" height="13.8" fill="none" stroke="#4a4a4a" stroke-width="1.2"/><path d="M2 3.5h3M3.5 2v3M2 11.5h3M10 6.5h3M10 8.5h3" stroke="#4a4a4a" stroke-width="1"/></svg>
<div class="t" style="left:106px;top:613.74px;font-size:12px;transform:scaleX(0.9323);transform-origin:0 0;">2029_EstMin</div>
<svg class="a" style="left:84px;top:633.0px" width="15" height="15" viewBox="0 0 15 15"><rect x="0.6" y="0.6" width="5.8" height="5.8" fill="none" stroke="#4a4a4a" stroke-width="1.2"/><rect x="0.6" y="8.6" width="5.8" height="5.8" fill="none" stroke="#4a4a4a" stroke-width="1.2"/><rect x="8.6" y="0.6" width="5.8" height="13.8" fill="none" stroke="#4a4a4a" stroke-width="1.2"/><path d="M2 3.5h3M3.5 2v3M2 11.5h3M10 6.5h3M10 8.5h3" stroke="#4a4a4a" stroke-width="1"/></svg>
<div class="t" style="left:106px;top:635.74px;font-size:12px;transform:scaleX(0.9409);transform-origin:0 0;">2031_AveMax</div>
<svg class="a" style="left:84px;top:655.0px" width="15" height="15" viewBox="0 0 15 15"><rect x="0.6" y="0.6" width="5.8" height="5.8" fill="none" stroke="#4a4a4a" stroke-width="1.2"/><rect x="0.6" y="8.6" width="5.8" height="5.8" fill="none" stroke="#4a4a4a" stroke-width="1.2"/><rect x="8.6" y="0.6" width="5.8" height="13.8" fill="none" stroke="#4a4a4a" stroke-width="1.2"/><path d="M2 3.5h3M3.5 2v3M2 11.5h3M10 6.5h3M10 8.5h3" stroke="#4a4a4a" stroke-width="1"/></svg>
<div class="t" style="left:106px;top:657.74px;font-size:12px;transform:scaleX(0.9382);transform-origin:0 0;">2031_AveMin</div>
<svg class="a" style="left:84px;top:677.0px" width="15" height="15" viewBox="0 0 15 15"><rect x="0.6" y="0.6" width="5.8" height="5.8" fill="none" stroke="#4a4a4a" stroke-width="1.2"/><rect x="0.6" y="8.6" width="5.8" height="5.8" fill="none" stroke="#4a4a4a" stroke-width="1.2"/><rect x="8.6" y="0.6" width="5.8" height="13.8" fill="none" stroke="#4a4a4a" stroke-width="1.2"/><path d="M2 3.5h3M3.5 2v3M2 11.5h3M10 6.5h3M10 8.5h3" stroke="#4a4a4a" stroke-width="1"/></svg>
<div class="t" style="left:106px;top:679.74px;font-size:12px;transform:scaleX(0.9354);transform-origin:0 0;">2031_EstMax</div>
<svg class="a" style="left:84px;top:699.0px" width="15" height="15" viewBox="0 0 15 15"><rect x="0.6" y="0.6" width="5.8" height="5.8" fill="none" stroke="#4a4a4a" stroke-width="1.2"/><rect x="0.6" y="8.6" width="5.8" height="5.8" fill="none" stroke="#4a4a4a" stroke-width="1.2"/><rect x="8.6" y="0.6" width="5.8" height="13.8" fill="none" stroke="#4a4a4a" stroke-width="1.2"/><path d="M2 3.5h3M3.5 2v3M2 11.5h3M10 6.5h3M10 8.5h3" stroke="#4a4a4a" stroke-width="1"/></svg>
<div class="t" style="left:106px;top:701.74px;font-size:12px;transform:scaleX(0.9323);transform-origin:0 0;">2031_EstMin</div>
<svg class="a" style="left:84px;top:721.0px" width="15" height="15" viewBox="0 0 15 15"><rect x="0.6" y="0.6" width="5.8" height="5.8" fill="none" stroke="#4a4a4a" stroke-width="1.2"/><rect x="0.6" y="8.6" width="5.8" height="5.8" fill="none" stroke="#4a4a4a" stroke-width="1.2"/><rect x="8.6" y="0.6" width="5.8" height="13.8" fill="none" stroke="#4a4a4a" stroke-width="1.2"/><path d="M2 3.5h3M3.5 2v3M2 11.5h3M10 6.5h3M10 8.5h3" stroke="#4a4a4a" stroke-width="1"/></svg>
<div class="t" style="left:106px;top:723.74px;font-size:12px;transform:scaleX(0.9199);transform-origin:0 0;">Reducida_2029_AVEMAX</div>
<svg class="a" style="left:84px;top:743.0px" width="15" height="15" viewBox="0 0 15 15"><rect x="0.6" y="0.6" width="5.8" height="5.8" fill="none" stroke="#4a4a4a" stroke-width="1.2"/><rect x="0.6" y="8.6" width="5.8" height="5.8" fill="none" stroke="#4a4a4a" stroke-width="1.2"/><rect x="8.6" y="0.6" width="5.8" height="13.8" fill="none" stroke="#4a4a4a" stroke-width="1.2"/><path d="M2 3.5h3M3.5 2v3M2 11.5h3M10 6.5h3M10 8.5h3" stroke="#4a4a4a" stroke-width="1"/></svg>
<div class="t" style="left:106px;top:745.74px;font-size:12px;transform:scaleX(0.9210);transform-origin:0 0;">Reducida_2029_AVEMIN</div>
<svg class="a" style="left:84px;top:765.0px" width="15" height="15" viewBox="0 0 15 15"><rect x="0.6" y="0.6" width="5.8" height="5.8" fill="none" stroke="#4a4a4a" stroke-width="1.2"/><rect x="0.6" y="8.6" width="5.8" height="5.8" fill="none" stroke="#4a4a4a" stroke-width="1.2"/><rect x="8.6" y="0.6" width="5.8" height="13.8" fill="none" stroke="#4a4a4a" stroke-width="1.2"/><path d="M2 3.5h3M3.5 2v3M2 11.5h3M10 6.5h3M10 8.5h3" stroke="#4a4a4a" stroke-width="1"/></svg>
<div class="t" style="left:106px;top:767.74px;font-size:12px;transform:scaleX(0.9159);transform-origin:0 0;">Reducida_2029_ESMAX</div>
<svg class="a" style="left:84px;top:787.0px" width="15" height="15" viewBox="0 0 15 15"><rect x="0.6" y="0.6" width="5.8" height="5.8" fill="none" stroke="#4a4a4a" stroke-width="1.2"/><rect x="0.6" y="8.6" width="5.8" height="5.8" fill="none" stroke="#4a4a4a" stroke-width="1.2"/><rect x="8.6" y="0.6" width="5.8" height="13.8" fill="none" stroke="#4a4a4a" stroke-width="1.2"/><path d="M2 3.5h3M3.5 2v3M2 11.5h3M10 6.5h3M10 8.5h3" stroke="#4a4a4a" stroke-width="1"/></svg>
<div class="t" style="left:106px;top:789.74px;font-size:12px;transform:scaleX(0.9168);transform-origin:0 0;">Reducida_2029_ESMIN</div>
<svg class="a" style="left:84px;top:809.0px" width="15" height="15" viewBox="0 0 15 15"><rect x="0.6" y="0.6" width="5.8" height="5.8" fill="none" stroke="#4a4a4a" stroke-width="1.2"/><rect x="0.6" y="8.6" width="5.8" height="5.8" fill="none" stroke="#4a4a4a" stroke-width="1.2"/><rect x="8.6" y="0.6" width="5.8" height="13.8" fill="none" stroke="#4a4a4a" stroke-width="1.2"/><path d="M2 3.5h3M3.5 2v3M2 11.5h3M10 6.5h3M10 8.5h3" stroke="#4a4a4a" stroke-width="1"/></svg>
<div class="t" style="left:106px;top:811.74px;font-size:12px;transform:scaleX(0.9221);transform-origin:0 0;">Reducida_2031_AVMAX</div>
<svg class="a" style="left:84px;top:831.0px" width="15" height="15" viewBox="0 0 15 15"><rect x="0.6" y="0.6" width="5.8" height="5.8" fill="none" stroke="#4a4a4a" stroke-width="1.2"/><rect x="0.6" y="8.6" width="5.8" height="5.8" fill="none" stroke="#4a4a4a" stroke-width="1.2"/><rect x="8.6" y="0.6" width="5.8" height="13.8" fill="none" stroke="#4a4a4a" stroke-width="1.2"/><path d="M2 3.5h3M3.5 2v3M2 11.5h3M10 6.5h3M10 8.5h3" stroke="#4a4a4a" stroke-width="1"/></svg>
<div class="t" style="left:106px;top:833.74px;font-size:12px;transform:scaleX(0.9232);transform-origin:0 0;">Reducida_2031_AVMIN</div>
<svg class="a" style="left:84px;top:853.0px" width="15" height="15" viewBox="0 0 15 15"><rect x="0.6" y="0.6" width="5.8" height="5.8" fill="none" stroke="#4a4a4a" stroke-width="1.2"/><rect x="0.6" y="8.6" width="5.8" height="5.8" fill="none" stroke="#4a4a4a" stroke-width="1.2"/><rect x="8.6" y="0.6" width="5.8" height="13.8" fill="none" stroke="#4a4a4a" stroke-width="1.2"/><path d="M2 3.5h3M3.5 2v3M2 11.5h3M10 6.5h3M10 8.5h3" stroke="#4a4a4a" stroke-width="1"/></svg>
<div class="t" style="left:106px;top:855.74px;font-size:12px;transform:scaleX(0.9159);transform-origin:0 0;">Reducida_2031_ESMAX</div>
<svg class="a" style="left:84px;top:875.0px" width="15" height="15" viewBox="0 0 15 15"><rect x="0.6" y="0.6" width="5.8" height="5.8" fill="none" stroke="#4a4a4a" stroke-width="1.2"/><rect x="0.6" y="8.6" width="5.8" height="5.8" fill="none" stroke="#4a4a4a" stroke-width="1.2"/><rect x="8.6" y="0.6" width="5.8" height="13.8" fill="none" stroke="#4a4a4a" stroke-width="1.2"/><path d="M2 3.5h3M3.5 2v3M2 11.5h3M10 6.5h3M10 8.5h3" stroke="#4a4a4a" stroke-width="1"/></svg>
<div class="t" style="left:106px;top:877.74px;font-size:12px;transform:scaleX(0.9168);transform-origin:0 0;">Reducida_2031_ESMIN</div>
<svg class="a" style="left:48px;top:900.5px" width="6" height="10" viewBox="0 0 6 10"><path d="M1 1L5 5L1 9" fill="none" stroke="#7e7e7e" stroke-width="1.6"/></svg>
<svg class="a" style="left:64px;top:897.0px" width="16" height="14" viewBox="0 0 16 14"><path d="M0.8 1.3h5.2l1.5 2h7.7v9.9H0.8z" fill="#f5f9f9" stroke="#4b555c" stroke-width="1.5" stroke-linejoin="round"/><path d="M0.8 5.5h14.4" stroke="#4b555c" stroke-width="1.3"/></svg>
<div class="t" style="left:86px;top:899.74px;font-size:12px;transform:scaleX(0.8941);transform-origin:0 0;">07. TIEMPO CRITICO</div>
<svg class="a" style="left:48px;top:922.5px" width="6" height="10" viewBox="0 0 6 10"><path d="M1 1L5 5L1 9" fill="none" stroke="#7e7e7e" stroke-width="1.6"/></svg>
<svg class="a" style="left:64px;top:919.0px" width="16" height="14" viewBox="0 0 16 14"><path d="M0.8 1.3h5.2l1.5 2h7.7v9.9H0.8z" fill="#f5f9f9" stroke="#4b555c" stroke-width="1.5" stroke-linejoin="round"/><path d="M0.8 5.5h14.4" stroke="#4b555c" stroke-width="1.3"/></svg>
<div class="t" style="left:86px;top:921.74px;font-size:12px;transform:scaleX(0.8893);transform-origin:0 0;">08. CORRIENTE DE SECUENCIA INVERSA</div>
<svg class="a" style="left:48px;top:944.5px" width="6" height="10" viewBox="0 0 6 10"><path d="M1 1L5 5L1 9" fill="none" stroke="#7e7e7e" stroke-width="1.6"/></svg>
<svg class="a" style="left:64px;top:941.0px" width="16" height="14" viewBox="0 0 16 14"><path d="M0.8 1.3h5.2l1.5 2h7.7v9.9H0.8z" fill="#f5f9f9" stroke="#4b555c" stroke-width="1.5" stroke-linejoin="round"/><path d="M0.8 5.5h14.4" stroke="#4b555c" stroke-width="1.3"/></svg>
<div class="t" style="left:86px;top:943.74px;font-size:12px;transform:scaleX(0.8940);transform-origin:0 0;">09. CAPACIDAD DE BARRAS</div>
<svg class="a" style="left:48px;top:966.5px" width="6" height="10" viewBox="0 0 6 10"><path d="M1 1L5 5L1 9" fill="none" stroke="#7e7e7e" stroke-width="1.6"/></svg>
<svg class="a" style="left:64px;top:963.0px" width="16" height="14" viewBox="0 0 16 14"><path d="M0.8 1.3h5.2l1.5 2h7.7v9.9H0.8z" fill="#f5f9f9" stroke="#4b555c" stroke-width="1.5" stroke-linejoin="round"/><path d="M0.8 5.5h14.4" stroke="#4b555c" stroke-width="1.3"/></svg>
<div class="t" style="left:86px;top:965.74px;font-size:12px;transform:scaleX(0.9149);transform-origin:0 0;">10. CASO ADICIONAL 1 - L-2110</div>
<svg class="a" style="left:48px;top:988.5px" width="6" height="10" viewBox="0 0 6 10"><path d="M1 1L5 5L1 9" fill="none" stroke="#7e7e7e" stroke-width="1.6"/></svg>
<svg class="a" style="left:64px;top:985.0px" width="16" height="14" viewBox="0 0 16 14"><path d="M0.8 1.3h5.2l1.5 2h7.7v9.9H0.8z" fill="#f5f9f9" stroke="#4b555c" stroke-width="1.5" stroke-linejoin="round"/><path d="M0.8 5.5h14.4" stroke="#4b555c" stroke-width="1.3"/></svg>
<div class="t" style="left:86px;top:987.74px;font-size:12px;transform:scaleX(0.9113);transform-origin:0 0;">11. CASO ADICIONAL 2 + LT RUNAT 60kV</div>
<div class="a" style="left:325px;top:78px;width:4px;height:928px;background:#f0f0f0;"></div>
<div class="a" style="left:329px;top:78px;width:1416px;height:26px;background:#dcdcdc;"></div>
<div class="a" style="left:329px;top:103px;width:1416px;height:1px;background:#c4c4c4;"></div>
<svg class="a" style="left:334px;top:87px" width="14" height="9" viewBox="0 0 14 9"><path d="M1 1.5L7 7.5L13 1.5" fill="none" stroke="#4b555c" stroke-width="1.4"/></svg>
<svg class="a" style="left:357px;top:86px" width="16" height="12" viewBox="0 0 16 12"><path d="M15 6H2M7 1L1.8 6L7 11" fill="none" stroke="#4b555c" stroke-width="1.9"/></svg>
<svg class="a" style="left:381px;top:86px" width="16" height="12" viewBox="0 0 16 12"><path d="M1 6H14M9 1L14.2 6L9 11" fill="none" stroke="#8c8c8c" stroke-width="1.9"/></svg>
<div class="a" style="left:404px;top:82px;width:119px;height:22px;background:#e3e3e3;border:1px solid #c4c4c4"></div>
<div class="t" style="left:418.5px;top:86.84px;font-size:12px;transform:scaleX(0.9092);transform-origin:0 0;">Costa_Norte_1</div>
<svg class="a" style="left:507px;top:89px" width="8" height="8" viewBox="0 0 8 8"><path d="M0.7 0.7L7.3 7.3M7.3 0.7L0.7 7.3" stroke="#4b555c" stroke-width="1.6"/></svg>
<div class="a" style="left:526px;top:82px;width:118px;height:22px;background:#e3e3e3;border:1px solid #c4c4c4"></div>
<div class="t" style="left:540.5px;top:86.84px;font-size:12px;transform:scaleX(0.9092);transform-origin:0 0;">Costa_Norte_2</div>
<svg class="a" style="left:628px;top:89px" width="8" height="8" viewBox="0 0 8 8"><path d="M0.7 0.7L7.3 7.3M7.3 0.7L0.7 7.3" stroke="#4b555c" stroke-width="1.6"/></svg>
<div class="a" style="left:647px;top:82px;width:113px;height:22px;background:#e3e3e3;border:1px solid #c4c4c4"></div>
<div class="t" style="left:661.5px;top:86.84px;font-size:12px;transform:scaleX(0.9370);transform-origin:0 0;">Costa_Centro</div>
<svg class="a" style="left:744px;top:89px" width="8" height="8" viewBox="0 0 8 8"><path d="M0.7 0.7L7.3 7.3M7.3 0.7L0.7 7.3" stroke="#4b555c" stroke-width="1.6"/></svg>
<div class="a" style="left:763px;top:82px;width:123px;height:22px;background:#e3e3e3;border:1px solid #c4c4c4"></div>
<div class="t" style="left:777.5px;top:86.84px;font-size:12px;transform:scaleX(0.9176);transform-origin:0 0;">Sierra_Centro_1</div>
<svg class="a" style="left:870px;top:89px" width="8" height="8" viewBox="0 0 8 8"><path d="M0.7 0.7L7.3 7.3M7.3 0.7L0.7 7.3" stroke="#4b555c" stroke-width="1.6"/></svg>
<div class="a" style="left:889px;top:82px;width:101px;height:22px;background:#e3e3e3;border:1px solid #c4c4c4"></div>
<div class="t" style="left:903.5px;top:86.84px;font-size:12px;transform:scaleX(0.8879);transform-origin:0 0;">PROYECTO</div>
<svg class="a" style="left:974px;top:89px" width="8" height="8" viewBox="0 0 8 8"><path d="M0.7 0.7L7.3 7.3M7.3 0.7L0.7 7.3" stroke="#4b555c" stroke-width="1.6"/></svg>
<div class="a" style="left:992px;top:82px;width:65px;height:22px;background:#e3e3e3;border:1px solid #c4c4c4"></div>
<div class="t" style="left:1006.5px;top:86.84px;font-size:12px;transform:scaleX(0.8716);transform-origin:0 0;">1F_1</div>
<svg class="a" style="left:1041px;top:89px" width="8" height="8" viewBox="0 0 8 8"><path d="M0.7 0.7L7.3 7.3M7.3 0.7L0.7 7.3" stroke="#4b555c" stroke-width="1.6"/></svg>
<div class="a" style="left:1059px;top:80px;width:70px;height:24px;background:#f0f0f0;border:1px solid #c4c4c4;border-bottom:none"></div>
<div class="t" style="left:1073.5px;top:86.84px;font-size:12px;font-weight:bold;transform:scaleX(0.9450);transform-origin:0 0;">1F_2</div>
<svg class="a" style="left:1113px;top:89px" width="8" height="8" viewBox="0 0 8 8"><path d="M0.7 0.7L7.3 7.3M7.3 0.7L0.7 7.3" stroke="#4b555c" stroke-width="1.6"/></svg>
<div class="a" style="left:1130px;top:82px;width:64px;height:22px;background:#e3e3e3;border:1px solid #c4c4c4"></div>
<div class="t" style="left:1144.5px;top:86.84px;font-size:12px;transform:scaleX(0.8716);transform-origin:0 0;">1F_3</div>
<svg class="a" style="left:1178px;top:89px" width="8" height="8" viewBox="0 0 8 8"><path d="M0.7 0.7L7.3 7.3M7.3 0.7L0.7 7.3" stroke="#4b555c" stroke-width="1.6"/></svg>
<div class="a" style="left:1197px;top:82px;width:65px;height:22px;background:#e3e3e3;border:1px solid #c4c4c4"></div>
<div class="t" style="left:1211.5px;top:86.84px;font-size:12px;transform:scaleX(0.8716);transform-origin:0 0;">1F_4</div>
<svg class="a" style="left:1246px;top:89px" width="8" height="8" viewBox="0 0 8 8"><path d="M0.7 0.7L7.3 7.3M7.3 0.7L0.7 7.3" stroke="#4b555c" stroke-width="1.6"/></svg>
<div class="a" style="left:1264px;top:82px;width:66px;height:22px;background:#e3e3e3;border:1px solid #c4c4c4"></div>
<div class="t" style="left:1278.5px;top:86.84px;font-size:12px;transform:scaleX(0.8716);transform-origin:0 0;">1F_5</div>
<svg class="a" style="left:1314px;top:89px" width="8" height="8" viewBox="0 0 8 8"><path d="M0.7 0.7L7.3 7.3M7.3 0.7L0.7 7.3" stroke="#4b555c" stroke-width="1.6"/></svg>
<div class="a" style="left:1332px;top:82px;width:66px;height:22px;background:#e3e3e3;border:1px solid #c4c4c4"></div>
<div class="t" style="left:1346.5px;top:86.84px;font-size:12px;transform:scaleX(0.8716);transform-origin:0 0;">1F_6</div>
<svg class="a" style="left:1382px;top:89px" width="8" height="8" viewBox="0 0 8 8"><path d="M0.7 0.7L7.3 7.3M7.3 0.7L0.7 7.3" stroke="#4b555c" stroke-width="1.6"/></svg>
<div class="a" style="left:1400px;top:82px;width:67px;height:22px;background:#e3e3e3;border:1px solid #c4c4c4"></div>
<div class="t" style="left:1414.5px;top:86.84px;font-size:12px;transform:scaleX(0.8454);transform-origin:0 0;">1F_P</div>
<svg class="a" style="left:1451px;top:89px" width="8" height="8" viewBox="0 0 8 8"><path d="M0.7 0.7L7.3 7.3M7.3 0.7L0.7 7.3" stroke="#4b555c" stroke-width="1.6"/></svg>
<div class="a" style="left:1469px;top:82px;width:67px;height:22px;background:#e3e3e3;border:1px solid #c4c4c4"></div>
<div class="t" style="left:1483.5px;top:86.84px;font-size:12px;transform:scaleX(0.8454);transform-origin:0 0;">1F_X</div>
<svg class="a" style="left:1520px;top:89px" width="8" height="8" viewBox="0 0 8 8"><path d="M0.7 0.7L7.3 7.3M7.3 0.7L0.7 7.3" stroke="#4b555c" stroke-width="1.6"/></svg>
<div class="a" style="left:1538px;top:82px;width:124px;height:22px;background:#e3e3e3;border:1px solid #c4c4c4"></div>
<div class="t" style="left:1552.5px;top:86.84px;font-size:12px;transform:scaleX(0.9176);transform-origin:0 0;">Sierra_Centro_2</div>
<svg class="a" style="left:1646px;top:89px" width="8" height="8" viewBox="0 0 8 8"><path d="M0.7 0.7L7.3 7.3M7.3 0.7L0.7 7.3" stroke="#4b555c" stroke-width="1.6"/></svg>
<div class="a" style="left:1665px;top:82px;width:55px;height:22px;background:#e3e3e3;border:1px solid #c4c4c4"></div>
<div class="t" style="left:1679.5px;top:86.84px;font-size:12px;transform:scaleX(0.9350);transform-origin:0 0;">Co</div>
<div class="a" style="left:1690px;top:82px;width:16px;height:22px;background:#e3e3e3;border:1px solid #c4c4c4"></div>
<div class="a" style="left:1705px;top:82px;width:16px;height:22px;background:#e3e3e3;border:1px solid #c4c4c4"></div>
<svg class="a" style="left:1694px;top:87px" width="8" height="12" viewBox="0 0 8 12"><path d="M6 1L1.5 6L6 11" fill="none" stroke="#bdbdbd" stroke-width="1.4"/></svg>
<svg class="a" style="left:1710px;top:87px" width="8" height="12" viewBox="0 0 8 12"><path d="M2 1L6.5 6L2 11" fill="none" stroke="#4b555c" stroke-width="1.4"/></svg>
<svg class="a" style="left:1727px;top:85px" width="14" height="14" viewBox="0 0 14 14"><path d="M7 1V13M1 7H13" stroke="#4b555c" stroke-width="1.9"/></svg>
<div class="a" style="left:329px;top:104px;width:1416px;height:26px;background:#f0f0f0;"></div>
<div class="a" style="left:402px;top:108px;width:1px;height:18px;background:#d8d8d8;"></div>
<div class="a" style="left:543px;top:108px;width:1px;height:18px;background:#d8d8d8;"></div>
<div class="a" style="left:594px;top:108px;width:1px;height:18px;background:#d8d8d8;"></div>
<div class="a" style="left:761px;top:108px;width:1px;height:18px;background:#d8d8d8;"></div>
<div class="a" style="left:928px;top:108px;width:1px;height:18px;background:#d8d8d8;"></div>
<div class="a" style="left:957px;top:108px;width:1px;height:18px;background:#d8d8d8;"></div>
<div class="a" style="left:1009px;top:108px;width:1px;height:18px;background:#d8d8d8;"></div>
<div class="a" style="left:1171px;top:108px;width:1px;height:18px;background:#d8d8d8;"></div>
<svg class="a" style="left:334px;top:108px" width="17" height="18" viewBox="0 0 17 18"><path d="M1 2v15h15" fill="none" stroke="#4b555c" stroke-width="1.2"/><rect x="3" y="1" width="11" height="11" fill="#4b555c"/><path d="M3 10c2-4 4-5 6-2" fill="none" stroke="#f0f0f0" stroke-width="1.2"/><path d="M12 10v7M8.5 13.5h7" stroke="#2f5fe0" stroke-width="2.2"/></svg>
<svg class="a" style="left:357px;top:108px" width="17" height="18" viewBox="0 0 17 18"><path d="M1 2v15h15" fill="none" stroke="#4b555c" stroke-width="1.2"/><path d="M3 13l3-4 2 2 3-3" fill="none" stroke="#4b555c" stroke-width="1.2"/><path d="M7 12l7-7 2 2-7 7-3 1z" fill="#4b555c"/><path d="M11 13l3 1" stroke="#4b555c"/></svg>
<svg class="a" style="left:380px;top:108px" width="17" height="18" viewBox="0 0 17 18"><path d="M7 14.7A5.7 5.7 0 1 1 12.7 9" fill="none" stroke="#4b555c" stroke-width="2.1"/><path d="M9.3 9.6h7l-3.5 4.6z" fill="#4b555c"/></svg>
<svg class="a" style="left:408px;top:108px" width="17" height="18" viewBox="0 0 17 18"><circle cx="7.3" cy="7.4" r="5.6" fill="none" stroke="#4b555c" stroke-width="1.5"/><path d="M11.3 11.5l4.3 4.3" stroke="#4b555c" stroke-width="2.6"/></svg>
<svg class="a" style="left:432px;top:108px" width="17" height="18" viewBox="0 0 17 18"><g fill="#8c8c8c"><rect x="2.2" y="4.5" width="2.4" height="8" rx="1.2"/><rect x="5.2" y="1.5" width="2.4" height="10" rx="1.2"/><rect x="8.2" y="1" width="2.4" height="10" rx="1.2"/><rect x="11.2" y="2.5" width="2.4" height="9" rx="1.2"/><path d="M2.2 9h11.4v3.5c0 3-2 5-5 5h-1.5c-3 0-4.9-2.5-4.9-5z"/><path d="M13 11l1.8-2.6a1.1 1.1 0 0 1 1.9 1.1L14 14z"/></g></svg>
<svg class="a" style="left:455px;top:108px" width="17" height="18" viewBox="0 0 17 18"><path d="M1 5V1h4M12 1h4v4M16 12v4h-4M5 16H1v-4" fill="none" stroke="#4b555c" stroke-width="2"/></svg>
<div class="a" style="left:476px;top:107px;width:64px;height:20px;background:#fff;border-bottom:1px solid #9a9a9a"></div>
<div class="t" style="left:481px;top:111.34px;font-size:12px;transform:scaleX(0.9131);transform-origin:0 0;">100%</div>
<svg class="a" style="left:525px;top:113px" width="10" height="7" viewBox="0 0 10 7"><path d="M1 1L5 5L9 1" fill="none" stroke="#555" stroke-width="1.2"/></svg>
<svg class="a" style="left:548px;top:108px" width="17" height="18" viewBox="0 0 17 18"><rect x="0" y="1" width="17" height="7" fill="#4b555c"/><rect x="0" y="10" width="17" height="7" fill="#4b555c"/><path d="M1 4c3-3 5 3 8 0s5-3 7 0" fill="none" stroke="#f0f0f0" stroke-width="1.1"/><path d="M1 14c2-3 3 3 5 0s3-3 5 0 3 3 5 0" fill="none" stroke="#f0f0f0" stroke-width="1.1"/></svg>
<div class="a" style="left:570px;top:106px;width:21px;height:21px;background:#cce4f7;border:1px solid #99c9ef;border-radius:2px"></div>
<svg class="a" style="left:573px;top:108px" width="17" height="18" viewBox="0 0 17 18"><rect x="0.5" y="1" width="7" height="16" fill="#4b555c"/><rect x="9" y="1" width="7" height="16" fill="#4b555c"/><path d="M1 9c1-6 2 6 3 0s2-8 3 0M9.5 9c1-6 2 6 3 0s2-8 3 0" fill="none" stroke="#d8e8f5" stroke-width="1"/></svg>
<svg class="a" style="left:600px;top:108px" width="17" height="18" viewBox="0 0 17 18"><path d="M1 7v7M16 7v7M1 12h15" fill="none" stroke="#4b555c" stroke-width="2"/><path d="M3 5h11M3 5l2.5-2M3 5l2.5 2M14 5l-2.5-2M14 5l-2.5 2" fill="none" stroke="#4b555c" stroke-width="1.5"/></svg>
<svg class="a" style="left:627px;top:108px" width="13" height="18" viewBox="0 0 13 18"><path d="M1 1h6M1 17h6M4 1v16" fill="none" stroke="#4b555c" stroke-width="2"/><path d="M10 3v12M10 3l-2 2.5M10 3l2 2.5M10 15l-2-2.5M10 15l2-2.5" fill="none" stroke="#4b555c" stroke-width="1.5"/></svg>
<svg class="a" style="left:647px;top:108px" width="17" height="18" viewBox="0 0 17 18"><path d="M1 11h15M1 11l3-3M1 11l3 3M16 11l-3-3M16 11l-3 3" fill="none" stroke="#4b555c" stroke-width="2"/><path d="M5 3v6M12 3v6" stroke="#4b555c" stroke-width="1.3"/></svg>
<svg class="a" style="left:672px;top:108px" width="14" height="18" viewBox="0 0 14 18"><path d="M4 1v16M4 1l-3 3M4 1l3 3M4 17l-3-3M4 17l3-3" fill="none" stroke="#4b555c" stroke-width="2"/><path d="M7 4h6M7 13h6" stroke="#4b555c" stroke-width="1.3"/></svg>
<svg class="a" style="left:693px;top:108px" width="17" height="18" viewBox="0 0 17 18"><path d="M1 9h15M1 9l4-4M1 9l4 4M16 9l-4-4M16 9l-4 4" fill="none" stroke="#4b555c" stroke-width="2.2"/></svg>
<svg class="a" style="left:716px;top:108px" width="16" height="18" viewBox="0 0 16 18"><path d="M1 9h3l2-4 2 8 2-6 1 2h4M13 6l3 3-3 3M3 6l-3 3 3 3" fill="none" stroke="#4b555c" stroke-width="1.6"/></svg>
<svg class="a" style="left:739px;top:108px" width="17" height="18" viewBox="0 0 17 18"><path d="M1 8h3l2-4 2 8 2-6 1 2h4M13 5l3 3-3 3" fill="none" stroke="#a0a0a0" stroke-width="1.4"/><path d="M11 12v6M8 15h6" stroke="#a0a0a0" stroke-width="1.4"/></svg>
<svg class="a" style="left:768px;top:108px" width="16" height="18" viewBox="0 0 16 18"><path d="M1 17V9l4-3 4 4 6-7v14z" fill="#8e8e8e"/><path d="M1 7l4-4 4 4 6-6" fill="none" stroke="#8e8e8e" stroke-width="1.2"/></svg>
<svg class="a" style="left:791px;top:108px" width="17" height="18" viewBox="0 0 17 18"><path d="M1 17V9l4-3 4 4 6-7v8l-4 4v6z" fill="#8e8e8e"/><path d="M1 7l4-4 4 4 6-6" fill="none" stroke="#8e8e8e" stroke-width="1.2"/><path d="M12 12l4 4M16 12l-4 4" stroke="#8e8e8e" stroke-width="1.1"/></svg>
<svg class="a" style="left:814px;top:108px" width="17" height="18" viewBox="0 0 17 18"><path d="M1 2h15v11h-4l-2 3-1-3H1z" fill="#8e8e8e"/><path d="M3.5 5h10M3.5 7.5h10M3.5 10h10" stroke="#f0f0f0" stroke-width="1.2"/></svg>
<svg class="a" style="left:837px;top:108px" width="17" height="18" viewBox="0 0 17 18"><path d="M1 2h15v11h-4l-2 3-1-3H1z" fill="#8e8e8e"/><text x="3.5" y="10.5" font-size="7" font-weight="bold" font-family="Liberation Sans" fill="#f0f0f0">1,5</text></svg>
<svg class="a" style="left:860px;top:108px" width="17" height="18" viewBox="0 0 17 18"><path d="M1 2h15v11h-4l-2 3-1-3H1z" fill="#8e8e8e"/><path d="M8.5 3.5l3.5 7h-7z" fill="none" stroke="#f0f0f0" stroke-width="1.3"/></svg>
<svg class="a" style="left:883px;top:108px" width="17" height="18" viewBox="0 0 17 18"><path d="M1 2h15v11h-4l-2 3-1-3H1z" fill="#8e8e8e"/><circle cx="5" cy="6.5" r="1.2" fill="#f0f0f0"/><circle cx="8.5" cy="6.5" r="1.2" fill="#f0f0f0"/><circle cx="12" cy="6.5" r="1.2" fill="#f0f0f0"/></svg>
<svg class="a" style="left:907px;top:108px" width="14" height="18" viewBox="0 0 14 18"><rect x="0" y="2" width="14" height="14" fill="#4b555c"/><path d="M3.5 5h7M7 5v8M5.5 13h3" stroke="#f0f0f0" stroke-width="1.6"/></svg>
<svg class="a" style="left:936px;top:108px" width="14" height="18" viewBox="0 0 14 18"><rect x="0" y="2" width="14" height="14" fill="#4b555c"/><path d="M2.5 3v12M11.5 3v12M2.5 3l9 12" stroke="#f0f0f0" stroke-width="1.1"/></svg>
<svg class="a" style="left:965px;top:108px" width="14" height="18" viewBox="0 0 14 18"><rect x="0" y="2" width="14" height="14" fill="#4b555c"/><rect x="3" y="3" width="1.6" height="12" fill="#f0f0f0"/></svg>
<svg class="a" style="left:988px;top:108px" width="14" height="18" viewBox="0 0 14 18"><rect x="0" y="2" width="14" height="14" fill="#4b555c"/><rect x="9.5" y="3" width="1.6" height="12" fill="#f0f0f0"/></svg>
<svg class="a" style="left:1017px;top:108px" width="13" height="18" viewBox="0 0 13 18"><rect x="0" y="1" width="13" height="16" fill="#4b555c"/><rect x="1.5" y="13" width="10" height="1.6" fill="#f0f0f0"/></svg>
<svg class="a" style="left:1040px;top:108px" width="14" height="18" viewBox="0 0 14 18"><path d="M2 1v16M7 1v16M12 1v16" stroke="#4b555c" stroke-width="1.6"/><path d="M0 5h4M5 11h4M10 7h4" stroke="#4b555c" stroke-width="3"/></svg>
<svg class="a" style="left:1063px;top:108px" width="15" height="18" viewBox="0 0 15 18"><path d="M1 1v16M0 1h3M0 17h3M3 2h11" stroke="#4b555c" stroke-width="1.2"/><path d="M4 4h6l4 4v9H4z" fill="#4b555c"/><path d="M10 4v4h4" fill="none" stroke="#f0f0f0"/></svg>
<div class="a" style="left:1083px;top:106px;width:86px;height:20px;background:#fff;border:1px solid #d4d4d4"></div>
<div class="t" style="left:1087px;top:111.34px;font-size:12px;transform:scaleX(0.9752);transform-origin:0 0;">Por defecto</div>
<svg class="a" style="left:1154px;top:113px" width="10" height="7" viewBox="0 0 10 7"><path d="M1 1L5 5L9 1" fill="none" stroke="#555" stroke-width="1.2"/></svg>
<svg class="a" style="left:1178px;top:108px" width="16" height="18" viewBox="0 0 16 18"><path d="M6 4H1v12h12v-4" fill="none" stroke="#4b555c" stroke-width="1.6"/><path d="M5 11c1-4 4-6 7-6V2l4 4-4 4V7c-3 0-5 1-7 4z" fill="#4b555c"/></svg>
<svg class="a" style="left:1201px;top:108px" width="17" height="18" viewBox="0 0 17 18"><rect x="4" y="1" width="9" height="4" fill="#4b555c"/><rect x="1" y="6" width="15" height="7" rx="1" fill="#4b555c"/><rect x="4" y="10" width="9" height="6" fill="#f0f0f0" stroke="#4b555c" stroke-width="1.5"/></svg>
<div class="a" style="left:329px;top:130px;width:1416px;height:693px;background:#9da1a5;"></div>
<div class="a" style="left:560px;top:138px;width:956px;height:677px;background:#fff;border-right:1px solid #6a6a6a;border-bottom:1px solid #6a6a6a"></div>
<svg class="a" style="left:0;top:0" width="1919" height="1034" font-family="Liberation Sans"><path d="M616.5 154.5H1014.5" stroke="#000" stroke-width="1" stroke-dasharray="5 5.5"/><path d="M616.5 185.5H1014.5" stroke="#000" stroke-width="1" stroke-dasharray="5 5.5"/><path d="M616.5 217.5H1014.5" stroke="#000" stroke-width="1" stroke-dasharray="5 5.5"/><path d="M616.5 248.5H1014.5" stroke="#000" stroke-width="1" stroke-dasharray="5 5.5"/><path d="M616.5 280.5H1014.5" stroke="#000" stroke-width="1" stroke-dasharray="5 5.5"/><path d="M696.5 311.5V154.5" stroke="#000" stroke-width="1" stroke-dasharray="5 5.5"/><path d="M775.5 311.5V154.5" stroke="#000" stroke-width="1" stroke-dasharray="5 5.5"/><path d="M855.5 311.5V154.5" stroke="#000" stroke-width="1" stroke-dasharray="5 5.5"/><path d="M935.5 311.5V154.5" stroke="#000" stroke-width="1" stroke-dasharray="5 5.5"/><path d="M1014.5 311.5V154.5" stroke="#000" stroke-width="1" stroke-dasharray="5 5.5"/><path d="M616.5 152.5V311.5H1015.5" fill="none" stroke="#000" stroke-width="1"/><path d="M616.5 170.5h3.5" stroke="#000" stroke-width="1"/><path d="M616.5 201.5h3.5" stroke="#000" stroke-width="1"/><path d="M616.5 232.5h3.5" stroke="#000" stroke-width="1"/><path d="M616.5 264.5h3.5" stroke="#000" stroke-width="1"/><path d="M616.5 295.5h3.5" stroke="#000" stroke-width="1"/><path d="M656.5 311.5v-3.5" stroke="#000" stroke-width="1"/><path d="M736.5 311.5v-3.5" stroke="#000" stroke-width="1"/><path d="M815.5 311.5v-3.5" stroke="#000" stroke-width="1"/><path d="M895.5 311.5v-3.5" stroke="#000" stroke-width="1"/><path d="M974.5 311.5v-3.5" stroke="#000" stroke-width="1"/><text x="609.0" y="157.3" font-size="8" letter-spacing="-0.35" text-anchor="end" fill="#0a0a0a" stroke="#333" stroke-width="0.18">1.02</text><text x="609.0" y="188.68" font-size="8" letter-spacing="-0.35" text-anchor="end" fill="#0a0a0a" stroke="#333" stroke-width="0.18">0.99</text><text x="609.0" y="220.06" font-size="8" letter-spacing="-0.35" text-anchor="end" fill="#0a0a0a" stroke="#333" stroke-width="0.18">0.96</text><text x="609.0" y="251.44" font-size="8" letter-spacing="-0.35" text-anchor="end" fill="#0a0a0a" stroke="#333" stroke-width="0.18">0.93</text><text x="609.0" y="282.82" font-size="8" letter-spacing="-0.35" text-anchor="end" fill="#0a0a0a" stroke="#333" stroke-width="0.18">0.90</text><text x="609.0" y="314.2" font-size="8" letter-spacing="-0.35" text-anchor="end" fill="#0a0a0a" stroke="#333" stroke-width="0.18">0.87</text><text x="607.5" y="173.8" font-size="8" letter-spacing="-0.35" text-anchor="end" fill="#0a0a0a" stroke="#333" stroke-width="0.18">[p.u.]</text><text x="616.5" y="322.7" font-size="8" letter-spacing="-0.35" text-anchor="middle" fill="#0a0a0a" stroke="#333" stroke-width="0.18">-0.1000</text><text x="696.1" y="322.7" font-size="8" letter-spacing="-0.35" text-anchor="middle" fill="#0a0a0a" stroke="#333" stroke-width="0.18">0.0095</text><text x="775.7" y="322.7" font-size="8" letter-spacing="-0.35" text-anchor="middle" fill="#0a0a0a" stroke="#333" stroke-width="0.18">0.1191</text><text x="855.3" y="322.7" font-size="8" letter-spacing="-0.35" text-anchor="middle" fill="#0a0a0a" stroke="#333" stroke-width="0.18">0.2286</text><text x="934.9" y="322.7" font-size="8" letter-spacing="-0.35" text-anchor="middle" fill="#0a0a0a" stroke="#333" stroke-width="0.18">0.3382</text><text x="1014.5" y="322.7" font-size="8" letter-spacing="-0.35" text-anchor="middle" fill="#0a0a0a" stroke="#333" stroke-width="0.18">0.4477</text><text x="974.7" y="322.7" font-size="8" letter-spacing="-0.35" text-anchor="middle" fill="#0a0a0a" stroke="#333" stroke-width="0.18">[s]</text><polyline points="617.5,196.5 762.3,196.5 762.3,205.8 834.9,205.8 834.9,198.3 1014.5,198.3" fill="none" stroke="#c0c0c0" stroke-width="2.0" stroke-linejoin="round"/><polyline points="617.5,184.8 762.3,184.8 762.3,197.5 834.9,197.5 834.9,188.8 1014.5,188.8" fill="none" stroke="#16b016" stroke-width="2.0" stroke-linejoin="round"/><polyline points="617.5,187.2 762.3,187.2 762.3,196.2 834.9,196.2 834.9,189.6 1014.5,189.6" fill="none" stroke="#1ee6ee" stroke-width="2.0" stroke-linejoin="round"/><polyline points="617.5,184.0 762.3,184.0 762.3,194.8 834.9,194.8 834.9,186.7 1014.5,186.7" fill="none" stroke="#e81ee8" stroke-width="2.0" stroke-linejoin="round"/><polyline points="617.5,178.9 762.3,178.9 762.3,188.8 834.9,188.8 834.9,180.9 840.9,180.8 846.9,180.7 852.9,180.5 858.8,180.4 864.8,180.3 870.8,180.2 876.8,180.1 882.8,179.9 888.8,179.8 894.8,179.7 900.8,179.7 906.7,179.7 912.7,179.7 918.7,179.7 924.7,179.7 930.7,179.7 936.7,179.7 942.7,179.7 948.6,179.7 954.6,179.7 960.6,179.7 966.6,179.7 972.6,179.7 978.6,179.7 984.6,179.7 990.6,179.7 996.5,179.7 1002.5,179.7 1008.5,179.7 1014.5,179.7" fill="none" stroke="#7e7e7e" stroke-width="2.0" stroke-linejoin="round"/><polyline points="617.5,174.6 762.3,174.6 762.3,181.4 834.9,181.4 834.9,174.8 840.9,174.8 846.9,174.9 852.9,174.9 858.8,174.9 864.8,175.0 870.8,175.0 876.8,175.0 882.8,175.1 888.8,175.1 894.8,175.1 900.8,175.2 906.7,175.2 912.7,175.2 918.7,175.3 924.7,175.3 930.7,175.3 936.7,175.4 942.7,175.4 948.6,175.4 954.6,175.5 960.6,175.5 966.6,175.5 972.6,175.6 978.6,175.6 984.6,175.6 990.6,175.7 996.5,175.7 1002.5,175.7 1008.5,175.8 1014.5,175.8" fill="none" stroke="#e3100f" stroke-width="2.0" stroke-linejoin="round"/><polyline points="617.5,198.3 762.3,198.3 762.3,207.6 834.9,207.6 834.9,200.0 840.9,200.0 846.9,200.0 852.9,200.0 858.8,200.0 864.8,200.0 870.8,200.0 876.8,200.0 882.8,200.0 888.8,200.0 894.8,200.0 900.8,200.0 906.7,200.0 912.7,200.0 918.7,200.0 924.7,199.9 930.7,200.0 936.7,200.0 942.7,200.1 948.6,200.1 954.6,200.2 960.6,200.2 966.6,200.3 972.6,200.3 978.6,200.4 984.6,200.4 990.6,200.5 996.5,200.5 1002.5,200.6 1008.5,200.6 1014.5,200.7" fill="none" stroke="#0c10c4" stroke-width="2.0" stroke-linejoin="round"/><polyline points="617.5,193.3 762.3,193.3 762.3,201.8 834.9,201.8 834.9,195.4 840.9,195.2 846.9,195.0 852.9,194.9 858.8,194.7 864.8,194.5 870.8,194.3 876.8,194.1 882.8,194.0 888.8,193.8 894.8,193.6 900.8,193.7 906.7,193.7 912.7,193.8 918.7,193.8 924.7,193.8 930.7,193.9 936.7,193.9 942.7,194.0 948.6,194.0 954.6,194.1 960.6,194.2 966.6,194.2 972.6,194.2 978.6,194.3 984.6,194.3 990.6,194.4 996.5,194.4 1002.5,194.5 1008.5,194.5 1014.5,194.6" fill="none" stroke="#a00e0e" stroke-width="2.0" stroke-linejoin="round"/><polyline points="617.5,181.9 762.3,181.9 762.3,231.4 765.9,233.3 769.6,235.0 773.2,236.5 776.8,237.9 780.4,239.1 784.1,240.2 787.7,241.2 791.3,242.1 795.0,242.8 798.6,243.6 802.2,244.2 805.9,244.8 809.5,245.3 813.1,245.7 816.8,246.1 820.4,246.5 824.0,246.8 827.6,247.1 831.3,247.4 834.9,247.6 834.9,197.5 840.9,194.5 846.9,192.3 852.9,190.8 858.8,189.7 864.8,189.0 870.8,188.5 876.8,188.1 882.8,187.9 888.8,187.7 894.8,187.6 900.8,187.5 906.7,187.5 912.7,187.5 918.7,187.5 924.7,187.5 930.7,187.6 936.7,187.6 942.7,187.6 948.6,187.7 954.6,187.7 960.6,187.8 966.6,187.8 972.6,187.9 978.6,187.9 984.6,188.0 990.6,188.0 996.5,188.1 1002.5,188.1 1008.5,188.2 1014.5,188.2" fill="none" stroke="#7a0000" stroke-width="2.0" stroke-linejoin="round"/><polyline points="617.5,173.1 762.3,173.1 762.3,179.2 834.9,179.2 834.9,172.2 1014.5,172.2" fill="none" stroke="#1ee61e" stroke-width="2.4" stroke-linejoin="round"/><polyline points="617.5,163.8 762.3,163.8 762.3,169.6 790.0,171.0 820.0,171.0 834.9,169.0 834.9,163.8 1014.5,163.8" fill="none" stroke="#7c7c12" stroke-width="2.0" stroke-linejoin="round"/><polyline points="617.5,195.0 762.3,195.0 762.3,281.9 765.9,283.7 769.6,285.3 773.2,286.8 776.8,288.1 780.4,289.3 784.1,290.4 787.7,291.3 791.3,292.2 795.0,293.0 798.6,293.7 802.2,294.4 805.9,295.0 809.5,295.5 813.1,296.0 816.8,296.5 820.4,296.9 824.0,297.2 827.6,297.5 831.3,297.8 834.9,298.1 834.9,213.1 840.9,210.3 846.9,208.1 852.9,206.5 858.8,205.1 864.8,204.1 870.8,203.4 876.8,202.8 882.8,202.3 888.8,202.0 894.8,201.8 900.8,201.6 906.7,201.6 912.7,201.5 918.7,201.5 924.7,201.5 930.7,201.6 936.7,201.6 942.7,201.7 948.6,201.8 954.6,201.9 960.6,202.0 966.6,202.1 972.6,202.2 978.6,202.4 984.6,202.5 990.6,202.6 996.5,202.7 1002.5,202.9 1008.5,203.0 1014.5,203.1" fill="none" stroke="#0e720e" stroke-width="2.0" stroke-linejoin="round"/><path d="M616.3 334.4h48.4" stroke="#e3100f" stroke-width="2.7" stroke-linecap="round"/><text x="671.5" y="337.2" font-size="8" letter-spacing="-0.17" text-anchor="start" fill="#0a0a0a" stroke="#333" stroke-width="0.18">CAMPO ARMIÑO 220/CAMPO ARMIÑO 220A: Tensión Secuencia Positiva, Magnitud</text><path d="M616.3 346.1h48.4" stroke="#1ee61e" stroke-width="2.7" stroke-linecap="round"/><text x="671.5" y="348.9" font-size="8" letter-spacing="-0.17" text-anchor="start" fill="#0a0a0a" stroke="#333" stroke-width="0.18">CARABAYLLO 220/CARABAYLLO 220A: Tensión Secuencia Positiva, Magnitud</text><path d="M616.3 357.8h48.4" stroke="#0c10c4" stroke-width="2.7" stroke-linecap="round"/><text x="671.5" y="360.59999999999997" font-size="8" letter-spacing="-0.17" text-anchor="start" fill="#0a0a0a" stroke="#333" stroke-width="0.18">HUANCAYO ESTE60: Tensión Secuencia Positiva, Magnitud</text><path d="M616.3 369.5h48.4" stroke="#7c7c12" stroke-width="2.7" stroke-linecap="round"/><text x="671.5" y="372.3" font-size="8" letter-spacing="-0.17" text-anchor="start" fill="#0a0a0a" stroke="#333" stroke-width="0.18">HUANZA 220/HUANZA 220B: Tensión Secuencia Positiva, Magnitud</text><path d="M616.3 381.2h48.4" stroke="#1ee6ee" stroke-width="2.7" stroke-linecap="round"/><text x="671.5" y="384.0" font-size="8" letter-spacing="-0.17" text-anchor="start" fill="#0a0a0a" stroke="#333" stroke-width="0.18">HUAYUCACHI 220: Tensión Secuencia Positiva, Magnitud</text><path d="M616.3 392.9h48.4" stroke="#e81ee8" stroke-width="2.7" stroke-linecap="round"/><text x="671.5" y="395.7" font-size="8" letter-spacing="-0.17" text-anchor="start" fill="#0a0a0a" stroke="#333" stroke-width="0.18">ORCOTUNA 220/ORCOTUNA 220B: Tensión Secuencia Positiva, Magnitud</text><path d="M616.3 404.6h48.4" stroke="#7e7e7e" stroke-width="2.7" stroke-linecap="round"/><text x="671.5" y="407.4" font-size="8" letter-spacing="-0.17" text-anchor="start" fill="#0a0a0a" stroke="#333" stroke-width="0.18">ORCOTUNA 60/ORCOTUNA 60A: Tensión Secuencia Positiva, Magnitud</text><path d="M616.3 416.3h48.4" stroke="#c0c0c0" stroke-width="2.7" stroke-linecap="round"/><text x="671.5" y="419.09999999999997" font-size="8" letter-spacing="-0.17" text-anchor="start" fill="#0a0a0a" stroke="#333" stroke-width="0.18">PARQUE INDUSTRIAL ELC 60: Tensión Secuencia Positiva, Magnitud</text><path d="M616.3 428.0h48.4" stroke="#7a0000" stroke-width="2.7" stroke-linecap="round"/><text x="671.5" y="430.8" font-size="8" letter-spacing="-0.17" text-anchor="start" fill="#0a0a0a" stroke="#333" stroke-width="0.18">RUNATULLO III 60: Tensión Secuencia Positiva, Magnitud</text><path d="M616.3 439.7h48.4" stroke="#a00e0e" stroke-width="2.7" stroke-linecap="round"/><text x="671.5" y="442.5" font-size="8" letter-spacing="-0.17" text-anchor="start" fill="#0a0a0a" stroke="#333" stroke-width="0.18">SALESIANOS 60: Tensión Secuencia Positiva, Magnitud</text><path d="M616.3 451.4h48.4" stroke="#0e720e" stroke-width="2.7" stroke-linecap="round"/><text x="671.5" y="454.2" font-size="8" letter-spacing="-0.17" text-anchor="start" fill="#0a0a0a" stroke="#333" stroke-width="0.18">SATIPO 138: Tensión Secuencia Positiva, Magnitud</text><path d="M616.3 463.1h48.4" stroke="#16b016" stroke-width="2.7" stroke-linecap="round"/><text x="671.5" y="465.9" font-size="8" letter-spacing="-0.17" text-anchor="start" fill="#0a0a0a" stroke="#333" stroke-width="0.18">220 kV: Tensión Secuencia Positiva, Magnitud</text><path d="M1094.5 154.5H1493.5" stroke="#000" stroke-width="1" stroke-dasharray="5 5.5"/><path d="M1094.5 185.5H1493.5" stroke="#000" stroke-width="1" stroke-dasharray="5 5.5"/><path d="M1094.5 217.5H1493.5" stroke="#000" stroke-width="1" stroke-dasharray="5 5.5"/><path d="M1094.5 248.5H1493.5" stroke="#000" stroke-width="1" stroke-dasharray="5 5.5"/><path d="M1094.5 280.5H1493.5" stroke="#000" stroke-width="1" stroke-dasharray="5 5.5"/><path d="M1174.5 311.5V154.5" stroke="#000" stroke-width="1" stroke-dasharray="5 5.5"/><path d="M1254.5 311.5V154.5" stroke="#000" stroke-width="1" stroke-dasharray="5 5.5"/><path d="M1333.5 311.5V154.5" stroke="#000" stroke-width="1" stroke-dasharray="5 5.5"/><path d="M1413.5 311.5V154.5" stroke="#000" stroke-width="1" stroke-dasharray="5 5.5"/><path d="M1493.5 311.5V154.5" stroke="#000" stroke-width="1" stroke-dasharray="5 5.5"/><path d="M1094.5 152.5V311.5H1494.5" fill="none" stroke="#000" stroke-width="1"/><path d="M1094.5 170.5h3.5" stroke="#000" stroke-width="1"/><path d="M1094.5 201.5h3.5" stroke="#000" stroke-width="1"/><path d="M1094.5 233.5h3.5" stroke="#000" stroke-width="1"/><path d="M1094.5 264.5h3.5" stroke="#000" stroke-width="1"/><path d="M1094.5 295.5h3.5" stroke="#000" stroke-width="1"/><path d="M1134.5 311.5v-3.5" stroke="#000" stroke-width="1"/><path d="M1214.5 311.5v-3.5" stroke="#000" stroke-width="1"/><path d="M1294.5 311.5v-3.5" stroke="#000" stroke-width="1"/><path d="M1373.5 311.5v-3.5" stroke="#000" stroke-width="1"/><path d="M1453.5 311.5v-3.5" stroke="#000" stroke-width="1"/><text x="1087.0" y="157.3" font-size="8" letter-spacing="-0.35" text-anchor="end" fill="#0a0a0a" stroke="#333" stroke-width="0.18">60.14</text><text x="1087.0" y="188.70000000000002" font-size="8" letter-spacing="-0.35" text-anchor="end" fill="#0a0a0a" stroke="#333" stroke-width="0.18">60.11</text><text x="1087.0" y="220.10000000000002" font-size="8" letter-spacing="-0.35" text-anchor="end" fill="#0a0a0a" stroke="#333" stroke-width="0.18">60.08</text><text x="1087.0" y="251.5" font-size="8" letter-spacing="-0.35" text-anchor="end" fill="#0a0a0a" stroke="#333" stroke-width="0.18">60.05</text><text x="1087.0" y="282.9" font-size="8" letter-spacing="-0.35" text-anchor="end" fill="#0a0a0a" stroke="#333" stroke-width="0.18">60.02</text><text x="1087.0" y="314.3" font-size="8" letter-spacing="-0.35" text-anchor="end" fill="#0a0a0a" stroke="#333" stroke-width="0.18">59.99</text><text x="1085.5" y="173.8" font-size="8" letter-spacing="-0.35" text-anchor="end" fill="#0a0a0a" stroke="#333" stroke-width="0.18">[Hz]</text><text x="1094.5" y="322.8" font-size="8" letter-spacing="-0.35" text-anchor="middle" fill="#0a0a0a" stroke="#333" stroke-width="0.18">-0.1000</text><text x="1174.24" y="322.8" font-size="8" letter-spacing="-0.35" text-anchor="middle" fill="#0a0a0a" stroke="#333" stroke-width="0.18">0.0095</text><text x="1253.98" y="322.8" font-size="8" letter-spacing="-0.35" text-anchor="middle" fill="#0a0a0a" stroke="#333" stroke-width="0.18">0.1191</text><text x="1333.72" y="322.8" font-size="8" letter-spacing="-0.35" text-anchor="middle" fill="#0a0a0a" stroke="#333" stroke-width="0.18">0.2286</text><text x="1413.46" y="322.8" font-size="8" letter-spacing="-0.35" text-anchor="middle" fill="#0a0a0a" stroke="#333" stroke-width="0.18">0.3382</text><text x="1493.2" y="322.8" font-size="8" letter-spacing="-0.35" text-anchor="middle" fill="#0a0a0a" stroke="#333" stroke-width="0.18">0.4477</text><text x="1453.33" y="322.8" font-size="8" letter-spacing="-0.35" text-anchor="middle" fill="#0a0a0a" stroke="#333" stroke-width="0.18">[s]</text><polyline points="1095.5,302.5 1131.2,301.6 1166.8,300.6 1202.4,299.7 1238.1,298.8 1240.1,298.8 1242.5,290.0 1242.5,290.0 1244.8,291.7 1247.1,292.9 1249.4,293.9 1251.8,294.5 1254.1,295.0 1256.4,295.4 1258.7,295.7 1261.0,295.9 1263.3,296.1 1265.6,296.2 1267.9,296.3 1270.3,296.3 1272.6,296.4 1274.9,296.4 1277.2,296.4 1279.5,296.3 1281.8,296.2 1284.1,296.0 1286.5,295.8 1288.8,295.5 1291.1,295.1 1293.4,294.8 1295.7,294.3 1298.0,293.9 1300.3,293.3 1302.6,292.8 1305.0,292.1 1307.3,291.5 1309.6,290.8 1311.9,290.0 1312.9,290.0 1315.9,301.0 1315.9,301.0 1320.3,297.2 1324.8,295.1 1329.2,293.9 1333.6,293.2 1338.1,292.9 1342.5,292.7 1346.9,292.5 1351.4,292.5 1355.8,292.6 1360.2,292.6 1364.7,292.7 1369.1,292.8 1373.5,292.9 1378.0,293.0 1382.4,293.2 1386.8,293.3 1391.3,293.4 1395.7,293.5 1400.1,293.6 1404.6,293.8 1409.0,293.9 1413.4,294.1 1417.8,294.2 1422.3,294.4 1426.7,294.5 1431.1,294.7 1435.6,294.8 1440.0,295.0 1444.4,295.1 1448.9,295.3 1453.3,295.4 1457.7,295.6 1462.2,295.8 1466.6,295.9 1471.0,296.1 1475.5,296.3 1479.9,296.5 1484.3,296.6 1488.8,296.8 1493.2,297.0" fill="none" stroke="#0c10c4" stroke-width="2.0" stroke-linejoin="round"/><polyline points="1095.5,302.0 1131.2,301.1 1166.8,300.1 1202.4,299.2 1238.1,298.3 1240.1,298.3 1242.5,289.5 1242.5,289.5 1244.8,291.2 1247.1,292.4 1249.4,293.4 1251.8,294.0 1254.1,294.5 1256.4,294.9 1258.7,295.2 1261.0,295.4 1263.3,295.6 1265.6,295.7 1267.9,295.8 1270.3,295.8 1272.6,295.9 1274.9,295.9 1277.2,295.9 1279.5,295.8 1281.8,295.7 1284.1,295.5 1286.5,295.3 1288.8,295.0 1291.1,294.6 1293.4,294.3 1295.7,293.8 1298.0,293.4 1300.3,292.8 1302.6,292.3 1305.0,291.6 1307.3,291.0 1309.6,290.3 1311.9,289.5 1312.9,289.5 1315.9,300.5 1315.9,300.5 1320.3,296.7 1324.8,294.6 1329.2,293.4 1333.6,292.7 1338.1,292.4 1342.5,292.2 1346.9,292.0 1351.4,292.0 1355.8,292.1 1360.2,292.1 1364.7,292.2 1369.1,292.3 1373.5,292.4 1378.0,292.5 1382.4,292.7 1386.8,292.8 1391.3,292.9 1395.7,293.0 1400.1,293.1 1404.6,293.3 1409.0,293.4 1413.4,293.6 1417.8,293.7 1422.3,293.9 1426.7,294.0 1431.1,294.2 1435.6,294.3 1440.0,294.5 1444.4,294.6 1448.9,294.8 1453.3,294.9 1457.7,295.1 1462.2,295.3 1466.6,295.4 1471.0,295.6 1475.5,295.8 1479.9,296.0 1484.3,296.1 1488.8,296.3 1493.2,296.5" fill="none" stroke="#e81ee8" stroke-width="2.0" stroke-linejoin="round"/><polyline points="1095.5,301.5 1131.2,300.6 1166.8,299.6 1202.4,298.7 1238.1,297.8 1240.1,297.8 1242.5,289.0 1242.5,289.0 1244.8,290.7 1247.1,291.9 1249.4,292.9 1251.8,293.5 1254.1,294.0 1256.4,294.4 1258.7,294.7 1261.0,294.9 1263.3,295.1 1265.6,295.2 1267.9,295.3 1270.3,295.3 1272.6,295.4 1274.9,295.4 1277.2,295.4 1279.5,295.3 1281.8,295.2 1284.1,295.0 1286.5,294.8 1288.8,294.5 1291.1,294.1 1293.4,293.8 1295.7,293.3 1298.0,292.9 1300.3,292.3 1302.6,291.8 1305.0,291.1 1307.3,290.5 1309.6,289.8 1311.9,289.0 1312.9,289.0 1315.9,300.0 1315.9,300.0 1320.3,296.2 1324.8,294.1 1329.2,292.9 1333.6,292.2 1338.1,291.9 1342.5,291.7 1346.9,291.5 1351.4,291.5 1355.8,291.6 1360.2,291.6 1364.7,291.7 1369.1,291.8 1373.5,291.9 1378.0,292.0 1382.4,292.2 1386.8,292.3 1391.3,292.4 1395.7,292.5 1400.1,292.6 1404.6,292.8 1409.0,292.9 1413.4,293.1 1417.8,293.2 1422.3,293.4 1426.7,293.5 1431.1,293.7 1435.6,293.8 1440.0,294.0 1444.4,294.1 1448.9,294.3 1453.3,294.4 1457.7,294.6 1462.2,294.8 1466.6,294.9 1471.0,295.1 1475.5,295.3 1479.9,295.5 1484.3,295.6 1488.8,295.8 1493.2,296.0" fill="none" stroke="#7e7e7e" stroke-width="2.0" stroke-linejoin="round"/><polyline points="1095.5,302.0 1131.2,301.1 1166.8,300.1 1202.4,299.2 1238.1,298.3 1240.1,298.3 1242.5,289.5 1242.5,289.5 1244.8,291.2 1247.1,292.4 1249.4,293.4 1251.8,294.0 1254.1,294.5 1256.4,294.9 1258.7,295.2 1261.0,295.4 1263.3,295.6 1265.6,295.7 1267.9,295.8 1270.3,295.8 1272.6,295.9 1274.9,295.9 1277.2,295.9 1279.5,295.8 1281.8,295.7 1284.1,295.5 1286.5,295.3 1288.8,295.0 1291.1,294.6 1293.4,294.3 1295.7,293.8 1298.0,293.4 1300.3,292.8 1302.6,292.3 1305.0,291.6 1307.3,291.0 1309.6,290.3 1311.9,289.5 1312.9,289.5 1315.9,300.5 1315.9,300.5 1320.3,296.7 1324.8,294.6 1329.2,293.4 1333.6,292.7 1338.1,292.4 1342.5,292.2 1346.9,292.0 1351.4,292.0 1355.8,292.1 1360.2,292.1 1364.7,292.2 1369.1,292.3 1373.5,292.4 1378.0,292.5 1382.4,292.7 1386.8,292.8 1391.3,292.9 1395.7,293.0 1400.1,293.1 1404.6,293.3 1409.0,293.4 1413.4,293.6 1417.8,293.7 1422.3,293.9 1426.7,294.0 1431.1,294.2 1435.6,294.3 1440.0,294.5 1444.4,294.6 1448.9,294.8 1453.3,294.9 1457.7,295.1 1462.2,295.3 1466.6,295.4 1471.0,295.6 1475.5,295.8 1479.9,296.0 1484.3,296.1 1488.8,296.3 1493.2,296.5" fill="none" stroke="#7c7c12" stroke-width="2.0" stroke-linejoin="round"/><polyline points="1095.5,303.0 1131.2,302.1 1166.8,301.1 1202.4,300.2 1238.1,299.3 1240.1,299.3 1242.5,290.5 1242.5,290.5 1244.8,292.2 1247.1,293.4 1249.4,294.4 1251.8,295.0 1254.1,295.5 1256.4,295.9 1258.7,296.2 1261.0,296.4 1263.3,296.6 1265.6,296.7 1267.9,296.8 1270.3,296.8 1272.6,296.9 1274.9,296.9 1277.2,296.9 1279.5,296.8 1281.8,296.7 1284.1,296.5 1286.5,296.3 1288.8,296.0 1291.1,295.6 1293.4,295.3 1295.7,294.8 1298.0,294.4 1300.3,293.8 1302.6,293.3 1305.0,292.6 1307.3,292.0 1309.6,291.3 1311.9,290.5 1312.9,290.5 1315.9,301.5 1315.9,301.5 1320.3,297.7 1324.8,295.6 1329.2,294.4 1333.6,293.7 1338.1,293.4 1342.5,293.2 1346.9,293.0 1351.4,293.0 1355.8,293.1 1360.2,293.1 1364.7,293.2 1369.1,293.3 1373.5,293.4 1378.0,293.5 1382.4,293.7 1386.8,293.8 1391.3,293.9 1395.7,294.0 1400.1,294.1 1404.6,294.3 1409.0,294.4 1413.4,294.6 1417.8,294.7 1422.3,294.9 1426.7,295.0 1431.1,295.2 1435.6,295.3 1440.0,295.5 1444.4,295.6 1448.9,295.8 1453.3,295.9 1457.7,296.1 1462.2,296.3 1466.6,296.4 1471.0,296.6 1475.5,296.8 1479.9,297.0 1484.3,297.1 1488.8,297.3 1493.2,297.5" fill="none" stroke="#1ee6ee" stroke-width="2.0" stroke-linejoin="round"/><polyline points="1095.5,302.7 1131.2,301.8 1166.8,300.9 1202.4,299.9 1238.1,299.0 1240.1,299.0 1242.5,290.2 1242.5,290.2 1244.8,291.9 1247.1,293.1 1249.4,294.1 1251.8,294.7 1254.1,295.2 1256.4,295.6 1258.7,295.9 1261.0,296.1 1263.3,296.3 1265.6,296.4 1267.9,296.5 1270.3,296.5 1272.6,296.6 1274.9,296.6 1277.2,296.6 1279.5,296.5 1281.8,296.4 1284.1,296.2 1286.5,296.0 1288.8,295.7 1291.1,295.3 1293.4,295.0 1295.7,294.5 1298.0,294.1 1300.3,293.5 1302.6,293.0 1305.0,292.3 1307.3,291.7 1309.6,291.0 1311.9,290.2 1312.9,290.2 1315.9,301.2 1315.9,301.2 1320.3,297.4 1324.8,295.3 1329.2,294.1 1333.6,293.4 1338.1,293.1 1342.5,292.9 1346.9,292.7 1351.4,292.7 1355.8,292.8 1360.2,292.8 1364.7,292.9 1369.1,293.0 1373.5,293.1 1378.0,293.2 1382.4,293.4 1386.8,293.5 1391.3,293.6 1395.7,293.7 1400.1,293.8 1404.6,294.0 1409.0,294.1 1413.4,294.3 1417.8,294.4 1422.3,294.6 1426.7,294.7 1431.1,294.9 1435.6,295.0 1440.0,295.2 1444.4,295.3 1448.9,295.5 1453.3,295.6 1457.7,295.8 1462.2,296.0 1466.6,296.1 1471.0,296.3 1475.5,296.5 1479.9,296.7 1484.3,296.8 1488.8,297.0 1493.2,297.2" fill="none" stroke="#e3100f" stroke-width="2.0" stroke-linejoin="round"/><polyline points="1095.5,302.3 1131.2,301.4 1166.8,300.5 1202.4,299.5 1238.1,298.6 1240.1,298.6 1242.5,289.8 1242.5,289.8 1244.8,291.5 1247.1,292.7 1249.4,293.7 1251.8,294.3 1254.1,294.8 1256.4,295.2 1258.7,295.5 1261.0,295.7 1263.3,295.9 1265.6,296.0 1267.9,296.1 1270.3,296.1 1272.6,296.2 1274.9,296.2 1277.2,296.2 1279.5,296.1 1281.8,296.0 1284.1,295.8 1286.5,295.6 1288.8,295.3 1291.1,294.9 1293.4,294.6 1295.7,294.1 1298.0,293.7 1300.3,293.1 1302.6,292.6 1305.0,291.9 1307.3,291.3 1309.6,290.6 1311.9,289.8 1312.9,289.8 1315.9,300.8 1315.9,300.8 1320.3,297.0 1324.8,294.9 1329.2,293.7 1333.6,293.0 1338.1,292.7 1342.5,292.5 1346.9,292.3 1351.4,292.3 1355.8,292.4 1360.2,292.4 1364.7,292.5 1369.1,292.6 1373.5,292.7 1378.0,292.8 1382.4,293.0 1386.8,293.1 1391.3,293.2 1395.7,293.3 1400.1,293.4 1404.6,293.6 1409.0,293.7 1413.4,293.9 1417.8,294.0 1422.3,294.2 1426.7,294.3 1431.1,294.5 1435.6,294.6 1440.0,294.8 1444.4,294.9 1448.9,295.1 1453.3,295.2 1457.7,295.4 1462.2,295.6 1466.6,295.7 1471.0,295.9 1475.5,296.1 1479.9,296.3 1484.3,296.4 1488.8,296.6 1493.2,296.8" fill="none" stroke="#a00e0e" stroke-width="2.0" stroke-linejoin="round"/><polyline points="1095.5,301.0 1131.2,300.1 1166.8,299.1 1202.4,298.2 1238.1,297.3 1240.1,297.3 1242.5,288.5 1242.5,288.5 1244.8,290.2 1247.1,291.4 1249.4,292.4 1251.8,293.0 1254.1,293.5 1256.4,293.9 1258.7,294.2 1261.0,294.4 1263.3,294.6 1265.6,294.7 1267.9,294.8 1270.3,294.8 1272.6,294.9 1274.9,294.9 1277.2,294.9 1279.5,294.8 1281.8,294.7 1284.1,294.5 1286.5,294.3 1288.8,294.0 1291.1,293.6 1293.4,293.3 1295.7,292.8 1298.0,292.4 1300.3,291.8 1302.6,291.3 1305.0,290.6 1307.3,290.0 1309.6,289.3 1311.9,288.5 1312.9,288.5 1315.9,299.5 1315.9,299.5 1320.3,295.7 1324.8,293.6 1329.2,292.4 1333.6,291.7 1338.1,291.4 1342.5,291.2 1346.9,291.0 1351.4,291.0 1355.8,291.1 1360.2,291.1 1364.7,291.2 1369.1,291.3 1373.5,291.4 1378.0,291.5 1382.4,291.7 1386.8,291.8 1391.3,291.9 1395.7,292.0 1400.1,292.1 1404.6,292.3 1409.0,292.4 1413.4,292.6 1417.8,292.7 1422.3,292.9 1426.7,293.0 1431.1,293.2 1435.6,293.3 1440.0,293.5 1444.4,293.6 1448.9,293.8 1453.3,293.9 1457.7,294.1 1462.2,294.3 1466.6,294.4 1471.0,294.6 1475.5,294.8 1479.9,295.0 1484.3,295.1 1488.8,295.3 1493.2,295.5" fill="none" stroke="#1ee61e" stroke-width="2.0" stroke-linejoin="round"/><polyline points="1095.5,300.5 1131.2,299.6 1166.8,298.6 1202.4,297.7 1238.1,296.8 1240.1,296.8 1242.5,288.0 1242.5,288.0 1244.8,289.7 1247.1,290.9 1249.4,291.9 1251.8,292.5 1254.1,293.0 1256.4,293.4 1258.7,293.7 1261.0,293.9 1263.3,294.1 1265.6,294.2 1267.9,294.3 1270.3,294.3 1272.6,294.4 1274.9,294.4 1277.2,294.4 1279.5,294.3 1281.8,294.2 1284.1,294.0 1286.5,293.8 1288.8,293.5 1291.1,293.1 1293.4,292.8 1295.7,292.3 1298.0,291.9 1300.3,291.3 1302.6,290.8 1305.0,290.1 1307.3,289.5 1309.6,288.8 1311.9,288.0 1312.9,288.0 1315.9,299.0 1315.9,299.0 1320.3,295.2 1324.8,293.1 1329.2,291.9 1333.6,291.2 1338.1,290.9 1342.5,290.7 1346.9,290.5 1351.4,290.5 1355.8,290.6 1360.2,290.6 1364.7,290.7 1369.1,290.8 1373.5,290.9 1378.0,291.0 1382.4,291.2 1386.8,291.3 1391.3,291.4 1395.7,291.5 1400.1,291.6 1404.6,291.8 1409.0,291.9 1413.4,292.1 1417.8,292.2 1422.3,292.4 1426.7,292.5 1431.1,292.7 1435.6,292.8 1440.0,293.0 1444.4,293.1 1448.9,293.3 1453.3,293.4 1457.7,293.6 1462.2,293.8 1466.6,293.9 1471.0,294.1 1475.5,294.3 1479.9,294.5 1484.3,294.6 1488.8,294.8 1493.2,295.0" fill="none" stroke="#16b016" stroke-width="2.0" stroke-linejoin="round"/><polyline points="1095.5,302.0 1131.2,301.2 1166.8,300.4 1202.4,299.6 1238.1,298.8 1240.1,298.8 1242.5,207.5 1242.5,207.5 1244.8,217.9 1247.1,225.5 1249.4,231.2 1251.8,235.5 1254.1,238.6 1256.4,240.9 1258.7,242.6 1261.0,243.9 1263.3,244.8 1265.6,245.5 1267.9,246.0 1270.3,246.4 1272.6,246.7 1274.9,246.9 1277.2,247.0 1279.5,247.1 1281.8,247.0 1284.1,246.9 1286.5,246.8 1288.8,246.6 1291.1,246.4 1293.4,246.1 1295.7,245.8 1298.0,245.4 1300.3,245.0 1302.6,244.6 1305.0,244.1 1307.3,243.6 1309.6,243.1 1311.9,242.5 1312.9,242.5 1315.9,302.0 1315.9,302.0 1320.3,283.7 1324.8,271.8 1329.2,264.1 1333.6,259.1 1338.1,255.9 1342.5,253.8 1346.9,252.4 1351.4,251.6 1355.8,251.0 1360.2,250.6 1364.7,250.7 1369.1,251.4 1373.5,252.1 1378.0,253.0 1382.4,253.9 1386.8,254.9 1391.3,255.9 1395.7,257.0 1400.1,258.2 1404.6,259.4 1409.0,260.6 1413.4,261.8 1417.8,263.1 1422.3,264.4 1426.7,265.8 1431.1,267.2 1435.6,268.6 1440.0,270.0 1444.4,271.4 1448.9,272.9 1453.3,274.4 1457.7,275.9 1462.2,277.5 1466.6,279.0 1471.0,280.6 1475.5,282.2 1479.9,283.8 1484.3,285.5 1488.8,287.1 1493.2,288.8" fill="none" stroke="#7a0000" stroke-width="2.0" stroke-linejoin="round"/><polyline points="1095.5,301.0 1131.2,300.1 1166.8,299.2 1202.4,298.4 1238.1,297.5 1240.1,297.5 1242.5,169.5 1242.5,169.5 1244.8,187.1 1247.1,200.2 1249.4,209.9 1251.8,217.0 1254.1,222.3 1256.4,226.3 1258.7,229.2 1261.0,231.3 1263.3,232.9 1265.6,234.1 1267.9,235.0 1270.3,235.6 1272.6,236.1 1274.9,236.5 1277.2,236.7 1279.5,236.8 1281.8,236.7 1284.1,236.6 1286.5,236.4 1288.8,236.1 1291.1,235.7 1293.4,235.3 1295.7,234.8 1298.0,234.2 1300.3,233.6 1302.6,232.9 1305.0,232.1 1307.3,231.3 1309.6,230.4 1311.9,229.5 1312.9,229.5 1315.9,304.0 1315.9,304.0 1320.3,271.2 1324.8,254.3 1329.2,245.5 1333.6,241.0 1338.1,238.7 1342.5,237.5 1346.9,237.1 1351.4,237.8 1355.8,238.9 1360.2,240.0 1364.7,241.3 1369.1,242.7 1373.5,244.1 1378.0,245.6 1382.4,247.2 1386.8,248.9 1391.3,250.6 1395.7,252.4 1400.1,254.2 1404.6,256.0 1409.0,257.9 1413.4,259.8 1417.8,261.8 1422.3,263.8 1426.7,265.8 1431.1,267.9 1435.6,270.0 1440.0,272.2 1444.4,274.3 1448.9,276.5 1453.3,278.8 1457.7,281.0 1462.2,283.3 1466.6,285.6 1471.0,288.0 1475.5,290.3 1479.9,292.7 1484.3,295.1 1488.8,297.5 1493.2,300.0" fill="none" stroke="#0e720e" stroke-width="2.0" stroke-linejoin="round"/><path d="M1094.3 334.4h48.4" stroke="#e3100f" stroke-width="2.7" stroke-linecap="round"/><text x="1149.5" y="337.2" font-size="8" letter-spacing="-0.17" text-anchor="start" fill="#0a0a0a" stroke="#333" stroke-width="0.18">CAMPO ARMIÑO 220/CAMPO ARMIÑO 220A: Frecuencia Eléctrica</text><path d="M1094.3 346.1h48.4" stroke="#1ee61e" stroke-width="2.7" stroke-linecap="round"/><text x="1149.5" y="348.9" font-size="8" letter-spacing="-0.17" text-anchor="start" fill="#0a0a0a" stroke="#333" stroke-width="0.18">CARABAYLLO 220/CARABAYLLO 220A: Frecuencia Eléctrica</text><path d="M1094.3 357.8h48.4" stroke="#0c10c4" stroke-width="2.7" stroke-linecap="round"/><text x="1149.5" y="360.59999999999997" font-size="8" letter-spacing="-0.17" text-anchor="start" fill="#0a0a0a" stroke="#333" stroke-width="0.18">HUANCAYO ESTE60: Frecuencia Eléctrica</text><path d="M1094.3 369.5h48.4" stroke="#7c7c12" stroke-width="2.7" stroke-linecap="round"/><text x="1149.5" y="372.3" font-size="8" letter-spacing="-0.17" text-anchor="start" fill="#0a0a0a" stroke="#333" stroke-width="0.18">HUANZA 220/HUANZA 220B: Frecuencia Eléctrica</text><path d="M1094.3 381.2h48.4" stroke="#1ee6ee" stroke-width="2.7" stroke-linecap="round"/><text x="1149.5" y="384.0" font-size="8" letter-spacing="-0.17" text-anchor="start" fill="#0a0a0a" stroke="#333" stroke-width="0.18">HUAYUCACHI 220: Frecuencia Eléctrica</text><path d="M1094.3 392.9h48.4" stroke="#e81ee8" stroke-width="2.7" stroke-linecap="round"/><text x="1149.5" y="395.7" font-size="8" letter-spacing="-0.17" text-anchor="start" fill="#0a0a0a" stroke="#333" stroke-width="0.18">ORCOTUNA 220/ORCOTUNA 220B: Frecuencia Eléctrica</text><path d="M1094.3 404.6h48.4" stroke="#7e7e7e" stroke-width="2.7" stroke-linecap="round"/><text x="1149.5" y="407.4" font-size="8" letter-spacing="-0.17" text-anchor="start" fill="#0a0a0a" stroke="#333" stroke-width="0.18">ORCOTUNA 60/ORCOTUNA 60A: Frecuencia Eléctrica</text><path d="M1094.3 416.3h48.4" stroke="#c0c0c0" stroke-width="2.7" stroke-linecap="round"/><text x="1149.5" y="419.09999999999997" font-size="8" letter-spacing="-0.17" text-anchor="start" fill="#0a0a0a" stroke="#333" stroke-width="0.18">PARQUE INDUSTRIAL ELC 60: Frecuencia Eléctrica</text><path d="M1094.3 428.0h48.4" stroke="#7a0000" stroke-width="2.7" stroke-linecap="round"/><text x="1149.5" y="430.8" font-size="8" letter-spacing="-0.17" text-anchor="start" fill="#0a0a0a" stroke="#333" stroke-width="0.18">RUNATULLO III 60: Frecuencia Eléctrica</text><path d="M1094.3 439.7h48.4" stroke="#a00e0e" stroke-width="2.7" stroke-linecap="round"/><text x="1149.5" y="442.5" font-size="8" letter-spacing="-0.17" text-anchor="start" fill="#0a0a0a" stroke="#333" stroke-width="0.18">SALESIANOS 60: Frecuencia Eléctrica</text><path d="M1094.3 451.4h48.4" stroke="#0e720e" stroke-width="2.7" stroke-linecap="round"/><text x="1149.5" y="454.2" font-size="8" letter-spacing="-0.17" text-anchor="start" fill="#0a0a0a" stroke="#333" stroke-width="0.18">SATIPO 138: Frecuencia Eléctrica</text><path d="M1094.3 463.1h48.4" stroke="#16b016" stroke-width="2.7" stroke-linecap="round"/><text x="1149.5" y="465.9" font-size="8" letter-spacing="-0.17" text-anchor="start" fill="#0a0a0a" stroke="#333" stroke-width="0.18">220 kV: Frecuencia Eléctrica</text><path d="M616.5 492.5H1014.5" stroke="#000" stroke-width="1" stroke-dasharray="5 5.5"/><path d="M616.5 514.5H1014.5" stroke="#000" stroke-width="1" stroke-dasharray="5 5.5"/><path d="M616.5 536.5H1014.5" stroke="#000" stroke-width="1" stroke-dasharray="5 5.5"/><path d="M616.5 558.5H1014.5" stroke="#000" stroke-width="1" stroke-dasharray="5 5.5"/><path d="M616.5 580.5H1014.5" stroke="#000" stroke-width="1" stroke-dasharray="5 5.5"/><path d="M696.5 602.5V492.5" stroke="#000" stroke-width="1" stroke-dasharray="5 5.5"/><path d="M775.5 602.5V492.5" stroke="#000" stroke-width="1" stroke-dasharray="5 5.5"/><path d="M855.5 602.5V492.5" stroke="#000" stroke-width="1" stroke-dasharray="5 5.5"/><path d="M935.5 602.5V492.5" stroke="#000" stroke-width="1" stroke-dasharray="5 5.5"/><path d="M1014.5 602.5V492.5" stroke="#000" stroke-width="1" stroke-dasharray="5 5.5"/><path d="M616.5 490.5V602.5H1015.5" fill="none" stroke="#000" stroke-width="1"/><path d="M616.5 503.5h3.5" stroke="#000" stroke-width="1"/><path d="M616.5 525.5h3.5" stroke="#000" stroke-width="1"/><path d="M616.5 547.5h3.5" stroke="#000" stroke-width="1"/><path d="M616.5 569.5h3.5" stroke="#000" stroke-width="1"/><path d="M616.5 591.5h3.5" stroke="#000" stroke-width="1"/><path d="M656.5 602.5v-3.5" stroke="#000" stroke-width="1"/><path d="M736.5 602.5v-3.5" stroke="#000" stroke-width="1"/><path d="M815.5 602.5v-3.5" stroke="#000" stroke-width="1"/><path d="M895.5 602.5v-3.5" stroke="#000" stroke-width="1"/><path d="M974.5 602.5v-3.5" stroke="#000" stroke-width="1"/><text x="609.0" y="495.1" font-size="8" letter-spacing="-0.35" text-anchor="end" fill="#0a0a0a" stroke="#333" stroke-width="0.18">60.00</text><text x="609.0" y="517.08" font-size="8" letter-spacing="-0.35" text-anchor="end" fill="#0a0a0a" stroke="#333" stroke-width="0.18">40.00</text><text x="609.0" y="539.0600000000001" font-size="8" letter-spacing="-0.35" text-anchor="end" fill="#0a0a0a" stroke="#333" stroke-width="0.18">20.00</text><text x="609.0" y="561.04" font-size="8" letter-spacing="-0.35" text-anchor="end" fill="#0a0a0a" stroke="#333" stroke-width="0.18">0.00</text><text x="609.0" y="583.02" font-size="8" letter-spacing="-0.35" text-anchor="end" fill="#0a0a0a" stroke="#333" stroke-width="0.18">-20.00</text><text x="609.0" y="605.0" font-size="8" letter-spacing="-0.35" text-anchor="end" fill="#0a0a0a" stroke="#333" stroke-width="0.18">-40.00</text><text x="616.5" y="613.5" font-size="8" letter-spacing="-0.35" text-anchor="middle" fill="#0a0a0a" stroke="#333" stroke-width="0.18">-0.1000</text><text x="696.1" y="613.5" font-size="8" letter-spacing="-0.35" text-anchor="middle" fill="#0a0a0a" stroke="#333" stroke-width="0.18">0.0095</text><text x="775.7" y="613.5" font-size="8" letter-spacing="-0.35" text-anchor="middle" fill="#0a0a0a" stroke="#333" stroke-width="0.18">0.1191</text><text x="855.3" y="613.5" font-size="8" letter-spacing="-0.35" text-anchor="middle" fill="#0a0a0a" stroke="#333" stroke-width="0.18">0.2286</text><text x="934.9" y="613.5" font-size="8" letter-spacing="-0.35" text-anchor="middle" fill="#0a0a0a" stroke="#333" stroke-width="0.18">0.3382</text><text x="1014.5" y="613.5" font-size="8" letter-spacing="-0.35" text-anchor="middle" fill="#0a0a0a" stroke="#333" stroke-width="0.18">0.4477</text><text x="974.7" y="613.5" font-size="8" letter-spacing="-0.35" text-anchor="middle" fill="#0a0a0a" stroke="#333" stroke-width="0.18">[s]</text><polyline points="617.5,581.6 1014.5,581.6" fill="none" stroke="#e3100f" stroke-width="2.4" stroke-linejoin="round"/><polyline points="617.5,573.0 975.0,573.0 978.0,571.5 1014.5,571.5" fill="none" stroke="#1ee61e" stroke-width="2.2" stroke-linejoin="round"/><polyline points="617.5,552.0 1014.5,552.0" fill="none" stroke="#1ee6ee" stroke-width="3.0" stroke-linejoin="round"/><polyline points="617.5,533.8 740.0,533.8 740.0,532.8 768.3,532.8 774.3,532.8 774.3,531.9 802.6,531.9 808.6,531.9 808.6,531.0 836.9,531.0 842.9,531.0 842.9,530.0 871.2,530.0 877.2,530.0 877.2,529.0 905.6,529.0 911.6,529.0 911.6,528.1 939.9,528.1 945.9,528.1 945.9,527.2 974.2,527.2 980.2,527.2 980.2,526.2 1008.5,526.2 1014.5,526.2" fill="none" stroke="#7c7c12" stroke-width="2.4" stroke-linejoin="round"/><polyline points="617.5,531.8 755.0,531.8 755.0,530.9 781.4,530.9 787.4,530.9 787.4,530.0 813.9,530.0 819.9,530.0 819.9,529.1 846.3,529.1 852.3,529.1 852.3,528.2 878.8,528.2 884.8,528.2 884.8,527.3 911.2,527.3 917.2,527.3 917.2,526.4 943.6,526.4 949.6,526.4 949.6,525.5 976.1,525.5 982.1,525.5 982.1,524.6 1008.5,524.6 1014.5,524.6" fill="none" stroke="#0c10c4" stroke-width="2.4" stroke-linejoin="round"/><path d="M616.9 625.3h47.4" stroke="#e3100f" stroke-width="2.7" stroke-linecap="round"/><text x="671.1" y="628.0999999999999" font-size="8" letter-spacing="-0.17" text-anchor="start" fill="#0a0a0a" stroke="#333" stroke-width="0.18">Huanza G1: Ángulo de rotor referido al ángulo del rotor de la máquina de referencia en deg</text><path d="M616.9 637.0h47.4" stroke="#1ee61e" stroke-width="2.7" stroke-linecap="round"/><text x="671.1" y="639.8" font-size="8" letter-spacing="-0.17" text-anchor="start" fill="#0a0a0a" stroke="#333" stroke-width="0.18">Rest G1: Ángulo de rotor referido al ángulo del rotor de la máquina de referencia en deg</text><path d="M616.9 648.7h47.4" stroke="#0c10c4" stroke-width="2.7" stroke-linecap="round"/><text x="671.1" y="651.4999999999999" font-size="8" letter-spacing="-0.17" text-anchor="start" fill="#0a0a0a" stroke="#333" stroke-width="0.18">Runall G1: Ángulo de rotor referido al ángulo del rotor de la máquina de referencia en deg</text><path d="M616.9 660.4h47.4" stroke="#7c7c12" stroke-width="2.7" stroke-linecap="round"/><text x="671.1" y="663.1999999999999" font-size="8" letter-spacing="-0.17" text-anchor="start" fill="#0a0a0a" stroke="#333" stroke-width="0.18">Runalll G1: Ángulo de rotor referido al ángulo del rotor de la máquina de referencia en deg</text><path d="M616.9 672.1h47.4" stroke="#1ee6ee" stroke-width="2.7" stroke-linecap="round"/><text x="671.1" y="674.8999999999999" font-size="8" letter-spacing="-0.17" text-anchor="start" fill="#0a0a0a" stroke="#333" stroke-width="0.18">Sam G3: Ángulo de rotor referido al ángulo del rotor de la máquina de referencia en deg</text><path d="M1094.5 492.5H1493.5" stroke="#000" stroke-width="1" stroke-dasharray="5 5.5"/><path d="M1094.5 514.5H1493.5" stroke="#000" stroke-width="1" stroke-dasharray="5 5.5"/><path d="M1094.5 536.5H1493.5" stroke="#000" stroke-width="1" stroke-dasharray="5 5.5"/><path d="M1094.5 558.5H1493.5" stroke="#000" stroke-width="1" stroke-dasharray="5 5.5"/><path d="M1094.5 580.5H1493.5" stroke="#000" stroke-width="1" stroke-dasharray="5 5.5"/><path d="M1174.5 602.5V492.5" stroke="#000" stroke-width="1" stroke-dasharray="5 5.5"/><path d="M1254.5 602.5V492.5" stroke="#000" stroke-width="1" stroke-dasharray="5 5.5"/><path d="M1333.5 602.5V492.5" stroke="#000" stroke-width="1" stroke-dasharray="5 5.5"/><path d="M1413.5 602.5V492.5" stroke="#000" stroke-width="1" stroke-dasharray="5 5.5"/><path d="M1493.5 602.5V492.5" stroke="#000" stroke-width="1" stroke-dasharray="5 5.5"/><path d="M1094.5 490.5V602.5H1494.5" fill="none" stroke="#000" stroke-width="1"/><path d="M1094.5 503.5h3.5" stroke="#000" stroke-width="1"/><path d="M1094.5 525.5h3.5" stroke="#000" stroke-width="1"/><path d="M1094.5 547.5h3.5" stroke="#000" stroke-width="1"/><path d="M1094.5 569.5h3.5" stroke="#000" stroke-width="1"/><path d="M1094.5 591.5h3.5" stroke="#000" stroke-width="1"/><path d="M1134.5 602.5v-3.5" stroke="#000" stroke-width="1"/><path d="M1214.5 602.5v-3.5" stroke="#000" stroke-width="1"/><path d="M1294.5 602.5v-3.5" stroke="#000" stroke-width="1"/><path d="M1373.5 602.5v-3.5" stroke="#000" stroke-width="1"/><path d="M1453.5 602.5v-3.5" stroke="#000" stroke-width="1"/><text x="1087.0" y="495.0" font-size="8" letter-spacing="-0.35" text-anchor="end" fill="#0a0a0a" stroke="#333" stroke-width="0.18">100.00</text><text x="1087.0" y="517.0" font-size="8" letter-spacing="-0.35" text-anchor="end" fill="#0a0a0a" stroke="#333" stroke-width="0.18">80.00</text><text x="1087.0" y="539.0" font-size="8" letter-spacing="-0.35" text-anchor="end" fill="#0a0a0a" stroke="#333" stroke-width="0.18">60.00</text><text x="1087.0" y="561.0" font-size="8" letter-spacing="-0.35" text-anchor="end" fill="#0a0a0a" stroke="#333" stroke-width="0.18">40.00</text><text x="1087.0" y="583.0" font-size="8" letter-spacing="-0.35" text-anchor="end" fill="#0a0a0a" stroke="#333" stroke-width="0.18">20.00</text><text x="1087.0" y="605.0" font-size="8" letter-spacing="-0.35" text-anchor="end" fill="#0a0a0a" stroke="#333" stroke-width="0.18">0.00</text><text x="1094.5" y="613.5" font-size="8" letter-spacing="-0.35" text-anchor="middle" fill="#0a0a0a" stroke="#333" stroke-width="0.18">-0.1000</text><text x="1174.24" y="613.5" font-size="8" letter-spacing="-0.35" text-anchor="middle" fill="#0a0a0a" stroke="#333" stroke-width="0.18">0.0095</text><text x="1253.98" y="613.5" font-size="8" letter-spacing="-0.35" text-anchor="middle" fill="#0a0a0a" stroke="#333" stroke-width="0.18">0.1191</text><text x="1333.72" y="613.5" font-size="8" letter-spacing="-0.35" text-anchor="middle" fill="#0a0a0a" stroke="#333" stroke-width="0.18">0.2286</text><text x="1413.46" y="613.5" font-size="8" letter-spacing="-0.35" text-anchor="middle" fill="#0a0a0a" stroke="#333" stroke-width="0.18">0.3382</text><text x="1493.2" y="613.5" font-size="8" letter-spacing="-0.35" text-anchor="middle" fill="#0a0a0a" stroke="#333" stroke-width="0.18">0.4477</text><text x="1453.33" y="613.5" font-size="8" letter-spacing="-0.35" text-anchor="middle" fill="#0a0a0a" stroke="#333" stroke-width="0.18">[s]</text><polyline points="1095.5,596.3 1493.2,596.3" fill="none" stroke="#e81ee8" stroke-width="2.2" stroke-linejoin="round"/><polyline points="1095.5,592.0 1230.0,592.0 1300.0,593.0 1400.0,595.0 1493.2,595.0" fill="none" stroke="#7c7c12" stroke-width="2.0" stroke-linejoin="round"/><polyline points="1095.5,587.5 1493.2,587.5" fill="none" stroke="#1ee6ee" stroke-width="2.4" stroke-linejoin="round"/><polyline points="1095.5,583.8 1240.1,583.8 1240.1,573.8 1312.9,573.8 1314.9,586.2 1493.2,586.2" fill="none" stroke="#16b016" stroke-width="2.2" stroke-linejoin="round"/><polyline points="1095.5,569.0 1330.0,569.0 1330.0,567.5 1493.2,567.0" fill="none" stroke="#7a0000" stroke-width="2.0" stroke-linejoin="round"/><polyline points="1312.9,572.0 1380.0,573.8 1493.2,574.5" fill="none" stroke="#c0c0c0" stroke-width="2.0" stroke-linejoin="round"/><polyline points="1095.5,562.5 1493.2,562.5" fill="none" stroke="#0e720e" stroke-width="2.2" stroke-linejoin="round"/><polyline points="1095.5,558.7 1240.1,558.7 1243.1,560.0 1312.9,560.0 1493.2,560.0" fill="none" stroke="#0c10c4" stroke-width="3.0" stroke-linejoin="round"/><polyline points="1095.5,555.5 1493.2,555.5" fill="none" stroke="#c0c0c0" stroke-width="1.6" stroke-linejoin="round"/><polyline points="1312.9,557.5 1390.0,557.5 1390.0,556.0 1493.2,556.0" fill="none" stroke="#1ee61e" stroke-width="2.2" stroke-linejoin="round"/><polyline points="1272.0,552.5 1493.2,543.8" fill="none" stroke="#000080" stroke-width="2.0" stroke-linejoin="round"/><polyline points="1095.5,546.3 1493.2,544.5" fill="none" stroke="#e3100f" stroke-width="2.0" stroke-linejoin="round"/><polyline points="1095.5,525.0 1493.2,525.0" fill="none" stroke="#000080" stroke-width="2.0" stroke-linejoin="round"/><polyline points="1095.5,537.0 1230.1,537.0 1240.1,535.0 1243.1,528.8 1493.2,514.5" fill="none" stroke="#a00e0e" stroke-width="2.0" stroke-linejoin="round"/><polyline points="1095.5,500.0 1240.1,500.0 1250.1,502.0 1312.9,502.0 1315.9,500.0 1493.2,501.0" fill="none" stroke="#c0c0c0" stroke-width="2.0" stroke-linejoin="round"/><polyline points="1241.1,551.0 1241.1,567.0" fill="none" stroke="#fafafa" stroke-width="1.6" stroke-linejoin="round"/><polyline points="1313.9,549.0 1313.9,568.0" fill="none" stroke="#f6f6f6" stroke-width="1.6" stroke-linejoin="round"/><polyline points="1242.1,550.0 1312.0,550.0" fill="none" stroke="#ececec" stroke-width="1.5" stroke-linejoin="round"/><path d="M1094.3 625.6h48.4" stroke="#e3100f" stroke-width="2.7" stroke-linecap="round"/><text x="1149.5" y="628.4" font-size="8" letter-spacing="-0.17" text-anchor="start" fill="#0a0a0a" stroke="#333" stroke-width="0.18">L-2110: Máx. Nivel de Carga en %</text><path d="M1094.3 637.3h48.4" stroke="#1ee61e" stroke-width="2.7" stroke-linecap="round"/><text x="1149.5" y="640.0799999999999" font-size="8" letter-spacing="-0.17" text-anchor="start" fill="#0a0a0a" stroke="#333" stroke-width="0.18">L-2116_A: Máx. Nivel de Carga en %</text><path d="M1094.3 649.0h48.4" stroke="#0c10c4" stroke-width="2.7" stroke-linecap="round"/><text x="1149.5" y="651.76" font-size="8" letter-spacing="-0.17" text-anchor="start" fill="#0a0a0a" stroke="#333" stroke-width="0.18">L-2220: Máx. Nivel de Carga en %</text><path d="M1094.3 660.6h48.4" stroke="#7c7c12" stroke-width="2.7" stroke-linecap="round"/><text x="1149.5" y="663.4399999999999" font-size="8" letter-spacing="-0.17" text-anchor="start" fill="#0a0a0a" stroke="#333" stroke-width="0.18">L-2221_A: Máx. Nivel de Carga en %</text><path d="M1094.3 672.3h48.4" stroke="#1ee6ee" stroke-width="2.7" stroke-linecap="round"/><text x="1149.5" y="675.12" font-size="8" letter-spacing="-0.17" text-anchor="start" fill="#0a0a0a" stroke="#333" stroke-width="0.18">L-6070(1): Máx. Nivel de Carga en %</text><path d="M1094.3 684.0h48.4" stroke="#e81ee8" stroke-width="2.7" stroke-linecap="round"/><text x="1149.5" y="686.8" font-size="8" letter-spacing="-0.17" text-anchor="start" fill="#0a0a0a" stroke="#333" stroke-width="0.18">L-6081: Máx. Nivel de Carga en %</text><path d="M1094.3 695.7h48.4" stroke="#7e7e7e" stroke-width="2.7" stroke-linecap="round"/><text x="1149.5" y="698.48" font-size="8" letter-spacing="-0.17" text-anchor="start" fill="#0a0a0a" stroke="#333" stroke-width="0.18">L-6631(1): Máx. Nivel de Carga en %</text><path d="M1094.3 707.4h48.4" stroke="#c0c0c0" stroke-width="2.7" stroke-linecap="round"/><text x="1149.5" y="710.16" font-size="8" letter-spacing="-0.17" text-anchor="start" fill="#0a0a0a" stroke="#333" stroke-width="0.18">L-6632a: Máx. Nivel de Carga en %</text><path d="M1094.3 719.0h48.4" stroke="#7a0000" stroke-width="2.7" stroke-linecap="round"/><text x="1149.5" y="721.8399999999999" font-size="8" letter-spacing="-0.17" text-anchor="start" fill="#0a0a0a" stroke="#333" stroke-width="0.18">LT Tramo 2: Máx. Nivel de Carga en %</text><path d="M1094.3 730.7h48.4" stroke="#a00e0e" stroke-width="2.7" stroke-linecap="round"/><text x="1149.5" y="733.52" font-size="8" letter-spacing="-0.17" text-anchor="start" fill="#0a0a0a" stroke="#333" stroke-width="0.18">LT UNCP: Máx. Nivel de Carga en %</text><path d="M1094.3 742.4h48.4" stroke="#0e720e" stroke-width="2.7" stroke-linecap="round"/><text x="1149.5" y="745.1999999999999" font-size="8" letter-spacing="-0.17" text-anchor="start" fill="#0a0a0a" stroke="#333" stroke-width="0.18">Lne Orcotuna-Plnd: Máx. Nivel de Carga en %</text><path d="M1094.3 754.1h48.4" stroke="#16b016" stroke-width="2.7" stroke-linecap="round"/><text x="1149.5" y="756.88" font-size="8" letter-spacing="-0.17" text-anchor="start" fill="#0a0a0a" stroke="#333" stroke-width="0.18">Lne138_Runatullo-Satipo: Máx. Nivel de Carga en %</text><path d="M1094.3 765.8h48.4" stroke="#000080" stroke-width="2.7" stroke-linecap="round"/><text x="1149.5" y="768.56" font-size="8" letter-spacing="-0.17" text-anchor="start" fill="#0a0a0a" stroke="#333" stroke-width="0.18">TR2(4): Cargabilidad en %</text><path d="M1094.3 777.4h48.4" stroke="#0c10c4" stroke-width="2.7" stroke-linecap="round"/><text x="1149.5" y="780.24" font-size="8" letter-spacing="-0.17" text-anchor="start" fill="#0a0a0a" stroke="#333" stroke-width="0.18">T108-261: Máxima nivel de carga en %</text><path d="M1094.3 789.1h48.4" stroke="#c0c0c0" stroke-width="2.7" stroke-linecap="round"/><text x="1149.5" y="791.92" font-size="8" letter-spacing="-0.17" text-anchor="start" fill="#0a0a0a" stroke="#333" stroke-width="0.18">T8-261: Máxima nivel de carga en %</text><path d="M1094.3 800.8h48.4" stroke="#e6e6e6" stroke-width="2.7" stroke-linecap="round"/><text x="1149.5" y="803.5999999999999" font-size="8" letter-spacing="-0.17" text-anchor="start" fill="#0a0a0a" stroke="#333" stroke-width="0.18">TR-1 Runatullo: Máxima nivel de carga en %</text></svg>
<div class="a" style="left:329px;top:823px;width:1416px;height:5px;background:#f0f0f0;"></div>
<div class="a" style="left:329px;top:828px;width:1416px;height:20px;background:#d9d9d9;border:1px solid #bdbdbd"></div>
<div class="t" style="left:334px;top:833.04px;font-size:12px;transform:scaleX(0.9756);transform-origin:0 0;">Ventana de Salida</div>
<svg class="a" style="left:1709px;top:835px" width="9" height="9" viewBox="0 0 9 9"><rect x="0.6" y="3.1" width="5.3" height="5.3" fill="none" stroke="#333" stroke-width="1.2"/><path d="M3.1 3.1V0.6h5.3v5.3H5.9" fill="none" stroke="#333" stroke-width="1.2"/></svg>
<svg class="a" style="left:1729px;top:835px" width="8" height="8" viewBox="0 0 8 8"><path d="M0.8 0.8L7.2 7.2M7.2 0.8L0.8 7.2" stroke="#333" stroke-width="1.7"/></svg>
<div class="a" style="left:332px;top:853px;width:90px;height:22px;background:#eaf1f7;border:1px solid #a9cbe8"></div>
<div class="a" style="left:430px;top:853px;width:140px;height:22px;background:#eaf1f7;border:1px solid #a9cbe8"></div>
<div class="a" style="left:578px;top:853px;width:136px;height:22px;background:#eaf1f7;border:1px solid #a9cbe8"></div>
<div class="a" style="left:723px;top:853px;width:107px;height:22px;background:#eaf1f7;border:1px solid #a9cbe8"></div>
<div class="a" style="left:426px;top:856px;width:1px;height:16px;background:#d4d4d4;"></div>
<div class="a" style="left:574px;top:856px;width:1px;height:16px;background:#d4d4d4;"></div>
<div class="a" style="left:719px;top:856px;width:1px;height:16px;background:#d4d4d4;"></div>
<div class="a" style="left:834px;top:856px;width:1px;height:16px;background:#d4d4d4;"></div>
<div class="a" style="left:924px;top:856px;width:1px;height:16px;background:#d4d4d4;"></div>
<div class="a" style="left:1131px;top:856px;width:1px;height:16px;background:#d4d4d4;"></div>
<svg class="a" style="left:338px;top:856px" width="16" height="16" viewBox="0 0 16 16"><circle cx="8" cy="8" r="7.8" fill="#e5283a"/><path d="M4.8 4.8l6.4 6.4M11.2 4.8l-6.4 6.4" stroke="#fff" stroke-width="2"/></svg>
<div class="t" style="left:358px;top:858.44px;font-size:12px;transform:scaleX(0.9484);transform-origin:0 0;">Errores (0)</div>
<svg class="a" style="left:436px;top:856px" width="17" height="16" viewBox="0 0 17 16"><path d="M8.5 0.5L16.5 15.5H0.5z" fill="#f6b40e"/><path d="M8.5 5v6" stroke="#fff" stroke-width="1.8"/><circle cx="8.5" cy="13.2" r="1" fill="#fff"/></svg>
<div class="t" style="left:456px;top:858.44px;font-size:12px;transform:scaleX(0.9724);transform-origin:0 0;">Advertencias (5120)</div>
<svg class="a" style="left:584px;top:856px" width="16" height="16" viewBox="0 0 16 16"><circle cx="8" cy="8" r="7.8" fill="#3d464c"/><path d="M8 7v5.5" stroke="#fff" stroke-width="2.2"/><circle cx="8" cy="4.3" r="1.3" fill="#fff"/></svg>
<div class="t" style="left:604px;top:858.44px;font-size:12px;transform:scaleX(0.9759);transform-origin:0 0;">Información (1968)</div>
<svg class="a" style="left:729px;top:856px" width="16" height="16" viewBox="0 0 16 16"><circle cx="8" cy="8" r="7.8" fill="#2f5fd6"/><path d="M3 12h2l1.5-7c1 4 2 6 5 7h2" fill="none" stroke="#fff" stroke-width="1.1"/></svg>
<div class="t" style="left:749.5px;top:858.44px;font-size:12px;transform:scaleX(0.9604);transform-origin:0 0;">Eventos (143)</div>
<svg class="a" style="left:844px;top:856px" width="16" height="16" viewBox="0 0 16 16"><circle cx="8" cy="8" r="7.8" fill="#3d464c"/><path d="M5 3.8h4l2.5 2.5v6H5z" fill="#fff"/></svg>
<div class="t" style="left:864.5px;top:858.44px;font-size:12px;transform:scaleX(0.9343);transform-origin:0 0;">Otros (0)</div>
<div class="a" style="left:929px;top:853px;width:197px;height:22px;background:#fff;border-bottom:1px solid #bdbdbd"></div>
<div class="t" style="left:932px;top:858.44px;font-size:12px;color:#6d6d6d;transform:scaleX(0.9987);transform-origin:0 0;">Texto contenido</div>
<svg class="a" style="left:1137px;top:855px" width="18" height="18" viewBox="0 0 18 18"><path d="M0.5 1h12L8 7v8l-3-2V7z" fill="#4b555c"/><circle cx="12.5" cy="13" r="4.2" fill="#fff" stroke="#e5283a" stroke-width="1.6"/><path d="M9.8 15.5l5.4-5" stroke="#e5283a" stroke-width="1.6"/></svg>
<div class="t" style="left:1156px;top:858.44px;font-size:12px;transform:scaleX(0.9785);transform-origin:0 0;">Eliminar todos los filtros</div>
<svg class="a" style="left:1584px;top:855px" width="18" height="18" viewBox="0 0 18 18"><circle cx="9" cy="9" r="5.5" fill="none" stroke="#4b555c" stroke-width="3.2"/><circle cx="9" cy="9" r="7.5" fill="none" stroke="#4b555c" stroke-width="2.5" stroke-dasharray="2.2 1.7"/><circle cx="9" cy="9" r="2" fill="#f0f0f0"/></svg>
<svg class="a" style="left:1607px;top:855px" width="18" height="18" viewBox="0 0 18 18"><path d="M1 1h13l3 3v13H1z" fill="#4b555c"/><rect x="4" y="1" width="8" height="5" fill="#f0f0f0"/><rect x="4" y="10" width="10" height="6" fill="#f0f0f0"/><path d="M5 12h8M5 14h8" stroke="#4b555c"/></svg>
<svg class="a" style="left:1630px;top:855px" width="18" height="18" viewBox="0 0 18 18"><path d="M2 1h5v14H2z M9 5h6l3 3v9H9z" fill="#4b555c"/><path d="M7 4h3" stroke="#4b555c" stroke-width="2"/></svg>
<svg class="a" style="left:1653px;top:855px" width="18" height="18" viewBox="0 0 18 18"><path d="M1 7h8l2 2v8H1z" fill="#4b555c"/><path d="M3 11h6M3 14h6" stroke="#f0f0f0"/><path d="M11 7l6-6M12 2h5v5" fill="none" stroke="#4b555c" stroke-width="1.5"/></svg>
<svg class="a" style="left:1676px;top:855px" width="18" height="18" viewBox="0 0 18 18"><rect x="4" y="1" width="10" height="4" fill="#4b555c"/><rect x="1" y="6" width="16" height="7" rx="1" fill="#4b555c"/><rect x="4" y="10" width="10" height="6" fill="#f0f0f0" stroke="#4b555c" stroke-width="1.6"/></svg>
<svg class="a" style="left:1699px;top:855px" width="18" height="18" viewBox="0 0 18 18"><path d="M2 8l2-6h3v4h4V2h3l2 6v8h-6v-6H8v6H2z" fill="#4b555c"/><rect x="3" y="12" width="4" height="3" fill="#f0f0f0"/><rect x="11" y="12" width="4" height="3" fill="#f0f0f0"/></svg>
<svg class="a" style="left:1722px;top:855px" width="18" height="18" viewBox="0 0 18 18"><circle cx="9" cy="9" r="7.5" fill="none" stroke="#4b555c" stroke-width="2"/><path d="M3.8 14.2L14.2 3.8" stroke="#4b555c" stroke-width="2"/></svg>
<div class="a" style="left:329px;top:878px;width:1416px;height:128px;background:#fff;border:1px solid #a6a6a6"></div>
<div class="a" style="left:1728px;top:879px;width:16px;height:126px;background:#f0f0f0;"></div>
<div class="a" style="left:1735px;top:895px;width:2px;height:19px;background:#7a7a7a;"></div>
<div class="a" style="left:1745px;top:78px;width:4px;height:928px;background:#f0f0f0;"></div>
<svg class="a" style="left:0;top:0" width="1919" height="1034" font-family="Liberation Mono" font-size="12.6" letter-spacing="-0.56"><g transform="translate(338,886.4)"><path d="M6.5 0.8L12.8 12.5H0.2z" fill="#f6b40e"/><path d="M6.5 4v4.8" stroke="#fff" stroke-width="1.6"/><circle cx="6.5" cy="10.4" r="0.9" fill="#fff"/></g><text x="355" y="897.4" fill="#8f8530" xml:space="preserve">No se encontró el objeto destino para modificar el objeto</text><g transform="translate(761.0,884.4)"><path d="M7 0v8" stroke="#5a9a3a" stroke-width="1.3"/><path d="M3 6.5h8L7 14z" fill="none" stroke="#5a9a3a" stroke-width="1.3" stroke-linejoin="round"/></g><text x="782.0" y="897.4" fill="#2525a8" xml:space="preserve">lod SJacinto13.8</text><text x="894.0" y="897.4" fill="#8f8530" xml:space="preserve"> o no es válido.</text><g transform="translate(338,903.3)"><path d="M6.5 0.8L12.8 12.5H0.2z" fill="#f6b40e"/><path d="M6.5 4v4.8" stroke="#fff" stroke-width="1.6"/><circle cx="6.5" cy="10.4" r="0.9" fill="#fff"/></g><text x="355" y="914.3" fill="#8f8530" xml:space="preserve">Se ignora la modificación del objeto para el objeto eliminado</text><g transform="translate(789.0,901.3)"><path d="M7 0v8" stroke="#5a9a3a" stroke-width="1.3"/><path d="M3 6.5h8L7 14z" fill="none" stroke="#5a9a3a" stroke-width="1.3" stroke-linejoin="round"/></g><text x="810.0" y="914.3" fill="#2525a8" xml:space="preserve">lod Malabrigo</text><text x="901.0" y="914.3" fill="#8f8530" xml:space="preserve">.</text><g transform="translate(338,920.3)"><path d="M6.5 0.8L12.8 12.5H0.2z" fill="#f6b40e"/><path d="M6.5 4v4.8" stroke="#fff" stroke-width="1.6"/><circle cx="6.5" cy="10.4" r="0.9" fill="#fff"/></g><text x="355" y="931.3" fill="#8f8530" xml:space="preserve">Se ignora la modificación del objeto para el objeto eliminado</text><g transform="translate(789.0,918.3)"><path d="M7 0v8" stroke="#5a9a3a" stroke-width="1.3"/><path d="M3 6.5h8L7 14z" fill="none" stroke="#5a9a3a" stroke-width="1.3" stroke-linejoin="round"/></g><text x="810.0" y="931.3" fill="#2525a8" xml:space="preserve">lod Malabrigo22.9</text><text x="929.0" y="931.3" fill="#8f8530" xml:space="preserve">.</text><g transform="translate(338,954.3)"><path d="M6.5 0.8L12.8 12.5H0.2z" fill="#f6b40e"/><path d="M6.5 4v4.8" stroke="#fff" stroke-width="1.6"/><circle cx="6.5" cy="10.4" r="0.9" fill="#fff"/></g><text x="355" y="965.3" fill="#8f8530" xml:space="preserve">Se ignora la modificación del objeto para el objeto eliminado</text><g transform="translate(789.0,952.3)"><path d="M7 0v8" stroke="#5a9a3a" stroke-width="1.3"/><path d="M3 6.5h8L7 14z" fill="none" stroke="#5a9a3a" stroke-width="1.3" stroke-linejoin="round"/></g><text x="810.0" y="965.3" fill="#2525a8" xml:space="preserve">lod MOQCiudad</text><text x="901.0" y="965.3" fill="#8f8530" xml:space="preserve">.</text><g transform="translate(338,971.2)"><path d="M6.5 0.8L12.8 12.5H0.2z" fill="#f6b40e"/><path d="M6.5 4v4.8" stroke="#fff" stroke-width="1.6"/><circle cx="6.5" cy="10.4" r="0.9" fill="#fff"/></g><text x="355" y="982.2" fill="#8f8530" xml:space="preserve">Se ignora la modificación del objeto para el objeto eliminado</text><g transform="translate(789.0,969.2)"><path d="M7 0v8" stroke="#5a9a3a" stroke-width="1.3"/><path d="M3 6.5h8L7 14z" fill="none" stroke="#5a9a3a" stroke-width="1.3" stroke-linejoin="round"/></g><text x="810.0" y="982.2" fill="#2525a8" xml:space="preserve">lod SanLuis33</text><text x="901.0" y="982.2" fill="#8f8530" xml:space="preserve">.</text><g transform="translate(338,988.2)"><path d="M6.5 0.8L12.8 12.5H0.2z" fill="#f6b40e"/><path d="M6.5 4v4.8" stroke="#fff" stroke-width="1.6"/><circle cx="6.5" cy="10.4" r="0.9" fill="#fff"/></g><text x="355" y="999.2" fill="#8f8530" xml:space="preserve">Se ignora la modificación del objeto para el objeto eliminado</text><g transform="translate(789.0,986.2)"><path d="M7 0v8" stroke="#5a9a3a" stroke-width="1.3"/><path d="M3 6.5h8L7 14z" fill="none" stroke="#5a9a3a" stroke-width="1.3" stroke-linejoin="round"/></g><text x="810.0" y="999.2" fill="#2525a8" xml:space="preserve">Lod Iberial0</text><text x="894.0" y="999.2" fill="#8f8530" xml:space="preserve">.</text><g transform="translate(338,937.3)"><circle cx="6.5" cy="6.5" r="6.3" fill="#2e3438"/><path d="M6.5 5.5v4.5" stroke="#fff" stroke-width="1.8"/><circle cx="6.5" cy="3.5" r="1.1" fill="#fff"/></g><text x="355" y="948.3" fill="#111" xml:space="preserve">Se detectaron los siguientes conflictos durante la activación de la etapa de expansión</text><g transform="translate(964.0,939.3)"><rect x="0.5" y="0.5" width="8" height="8" fill="none" stroke="#333"/><path d="M8.5 4.5h3" stroke="#333"/><rect x="11.5" y="2.5" width="3" height="4" fill="none" stroke="#333"/></g><text x="985.0" y="948.3" fill="#2525a8" xml:space="preserve">Ave 20</text><text x="1027.0" y="948.3" fill="#111" xml:space="preserve">:</text></svg>
<div class="a" style="left:1749px;top:79px;width:170px;height:20px;background:#d9d9d9;border:1px solid #cbcbcb"></div>
<div class="t" style="left:1755px;top:84.14px;font-size:12px;transform:scaleX(0.9747);transform-origin:0 0;">Herramientas de Dibujo</div>
<svg class="a" style="left:1884px;top:86px" width="9" height="9" viewBox="0 0 9 9"><rect x="0.6" y="3.1" width="5.3" height="5.3" fill="none" stroke="#333" stroke-width="1.2"/><path d="M3.1 3.1V0.6h5.3v5.3H5.9" fill="none" stroke="#333" stroke-width="1.2"/></svg>
<svg class="a" style="left:1904px;top:86px" width="8" height="8" viewBox="0 0 8 8"><path d="M0.8 0.8L7.2 7.2M7.2 0.8L0.8 7.2" stroke="#333" stroke-width="1.7"/></svg>
<div class="a" style="left:1753px;top:106px;width:23px;height:22px;background:#cce4f7;border:1px solid #99c9ef;border-radius:2px"></div>
<svg class="a" style="left:1757px;top:109px" width="16" height="16" viewBox="0 0 16 16"><rect x="0" y="0" width="15" height="15" rx="2" fill="#4b555c"/><path d="M2 4h11M2 10h11" stroke="#f0f0f0" stroke-width="1.6"/><path d="M9 7h1.5M11.5 7h1.5M9 12.5h1.5M11.5 12.5h1.5" stroke="#f0f0f0" stroke-width="1.2"/></svg>
<svg class="a" style="left:1780px;top:109px" width="16" height="16" viewBox="0 0 16 16"><rect x="0" y="0" width="15" height="15" rx="2" fill="#4b555c"/><path d="M2.5 4h1.5M2.5 7.5h1.5M2.5 11h1.5M5.5 4h7M5.5 7.5h7M5.5 11h7" stroke="#f0f0f0" stroke-width="1.4"/></svg>
<svg class="a" style="left:1804px;top:108px" width="18" height="18" viewBox="0 0 18 18"><path d="M0.5 1h14L9.5 7.5V16l-3-2V7.5z" fill="#4b555c"/><path d="M11 12.5h6M11 14.5h6M11 16.5h6" stroke="#3050d0" stroke-width="0.9"/></svg>
<div class="a" style="left:1832px;top:107px;width:87px;height:21px;background:#fff;border-bottom:1px solid #bdbdbd"></div>
<div class="t" style="left:1835px;top:111.84px;font-size:12px;color:#6d6d6d;transform:scaleX(0.9611);transform-origin:0 0;">Filtrar elemen...</div>
<div class="a" style="left:1750px;top:130px;width:169px;height:876px;background:#f0f0f0;border-left:1px solid #a0a0a0;border-top:1px solid #a0a0a0"></div>
<div class="a" style="left:1902px;top:131px;width:1px;height:875px;background:#fafafa;"></div>
<div class="a" style="left:1910px;top:148px;width:2px;height:550px;background:#7c7c7c;"></div>
<svg class="a" style="left:1755px;top:136px" width="10" height="10" viewBox="0 0 10 10"><rect x="0.5" y="0.5" width="9" height="9" fill="#fff" stroke="#555"/><path d="M2.5 5h5" stroke="#111" stroke-width="1.2"/></svg>
<div class="t" style="left:1770px;top:134.74px;font-size:12px;font-weight:bold;transform:scaleX(0.9450);transform-origin:0 0;max-width:135.4px;overflow:hidden">Busbars and Terminals</div>
<svg class="a" style="left:1755px;top:224px" width="10" height="10" viewBox="0 0 10 10"><rect x="0.5" y="0.5" width="9" height="9" fill="#fff" stroke="#555"/><path d="M2.5 5h5" stroke="#111" stroke-width="1.2"/></svg>
<div class="t" style="left:1770px;top:222.74px;font-size:12px;font-weight:bold;transform:scaleX(0.9450);transform-origin:0 0;max-width:135.4px;overflow:hidden">Sistemas de Barras</div>
<div class="a" style="left:1883px;top:228px;width:18px;height:1px;background:#a9a9a9;"></div>
<svg class="a" style="left:1755px;top:376px" width="10" height="10" viewBox="0 0 10 10"><rect x="0.5" y="0.5" width="9" height="9" fill="#fff" stroke="#555"/><path d="M2.5 5h5" stroke="#111" stroke-width="1.2"/></svg>
<div class="t" style="left:1770px;top:374.74px;font-size:12px;font-weight:bold;transform:scaleX(0.9450);transform-origin:0 0;max-width:135.4px;overflow:hidden">Interruptores</div>
<div class="a" style="left:1848px;top:380px;width:53px;height:1px;background:#a9a9a9;"></div>
<svg class="a" style="left:1755px;top:464px" width="10" height="10" viewBox="0 0 10 10"><rect x="0.5" y="0.5" width="9" height="9" fill="#fff" stroke="#555"/><path d="M2.5 5h5" stroke="#111" stroke-width="1.2"/></svg>
<div class="t" style="left:1770px;top:462.74px;font-size:12px;font-weight:bold;transform:scaleX(0.9450);transform-origin:0 0;max-width:135.4px;overflow:hidden">Lines, Cables, and Serie</div>
<svg class="a" style="left:1755px;top:552px" width="10" height="10" viewBox="0 0 10 10"><rect x="0.5" y="0.5" width="9" height="9" fill="#fff" stroke="#555"/><path d="M2.5 5h5" stroke="#111" stroke-width="1.2"/></svg>
<div class="t" style="left:1770px;top:550.74px;font-size:12px;font-weight:bold;transform:scaleX(0.9450);transform-origin:0 0;max-width:135.4px;overflow:hidden">Transformadores</div>
<div class="a" style="left:1870px;top:556px;width:31px;height:1px;background:#a9a9a9;"></div>
<svg class="a" style="left:1755px;top:640px" width="10" height="10" viewBox="0 0 10 10"><rect x="0.5" y="0.5" width="9" height="9" fill="#fff" stroke="#555"/><path d="M2.5 5h5" stroke="#111" stroke-width="1.2"/></svg>
<div class="t" style="left:1770px;top:638.74px;font-size:12px;font-weight:bold;transform:scaleX(0.9450);transform-origin:0 0;max-width:135.4px;overflow:hidden">Generadores y Cargas</div>
<div class="a" style="left:1899px;top:644px;width:2px;height:1px;background:#a9a9a9;"></div>
<svg class="a" style="left:1755px;top:792px" width="10" height="10" viewBox="0 0 10 10"><rect x="0.5" y="0.5" width="9" height="9" fill="#fff" stroke="#555"/><path d="M2.5 5h5" stroke="#111" stroke-width="1.2"/></svg>
<div class="t" style="left:1770px;top:790.74px;font-size:12px;font-weight:bold;transform:scaleX(0.9450);transform-origin:0 0;max-width:135.4px;overflow:hidden">Fuentes</div>
<div class="a" style="left:1821px;top:796px;width:80px;height:1px;background:#a9a9a9;"></div>
<svg class="a" style="left:1755px;top:912px" width="10" height="10" viewBox="0 0 10 10"><rect x="0.5" y="0.5" width="9" height="9" fill="#fff" stroke="#555"/><path d="M2.5 5h5" stroke="#111" stroke-width="1.2"/></svg>
<div class="t" style="left:1770px;top:910.74px;font-size:12px;font-weight:bold;transform:scaleX(0.9450);transform-origin:0 0;max-width:135.4px;overflow:hidden">Shunts y Filtros</div>
<div class="a" style="left:1863px;top:916px;width:38px;height:1px;background:#a9a9a9;"></div>
<svg class="a" style="left:1755px;top:999px" width="10" height="10" viewBox="0 0 10 10"><rect x="0.5" y="0.5" width="9" height="9" fill="#fff" stroke="#555"/><path d="M2.5 5h5" stroke="#111" stroke-width="1.2"/></svg>
<div class="t" style="left:1770px;top:998.04px;font-size:12px;font-weight:bold;transform:scaleX(0.9450);transform-origin:0 0;max-width:135.4px;overflow:hidden">Dispositivos de Electró</div>
<svg class="a" style="left:1755px;top:155px" width="24" height="24" viewBox="0 0 24 24"><path d="M2 12h20" stroke="#4b555c" stroke-width="1.8"/></svg>
<svg class="a" style="left:1791.5px;top:155px" width="24" height="24" viewBox="0 0 24 24"><path d="M5 12h14" stroke="#4b555c" stroke-width="1.8"/></svg>
<svg class="a" style="left:1827px;top:155px" width="24" height="24" viewBox="0 0 24 24"><circle cx="12" cy="12" r="1.8" fill="#4b555c"/></svg>
<svg class="a" style="left:1863.3px;top:155px" width="24" height="24" viewBox="0 0 24 24"><rect x="3" y="3" width="18" height="18" rx="2" fill="#fafafa" stroke="#4b555c" stroke-width="1.5"/></svg>
<svg class="a" style="left:1755px;top:187px" width="24" height="24" viewBox="0 0 24 24"><circle cx="12" cy="12" r="6.5" fill="#fafafa" fill="none" stroke="#4b555c" stroke-width="1.5"/></svg>
<svg class="a" style="left:1791.5px;top:187px" width="24" height="24" viewBox="0 0 24 24"><path d="M4 7h12v10H4" fill="none" stroke="#4b555c" stroke-width="1.5"/></svg>
<svg class="a" style="left:1755px;top:243px" width="24" height="24" viewBox="0 0 24 24"><path d="M3 12h18" stroke="#4b555c" stroke-width="3" stroke-linecap="round"/></svg>
<svg class="a" style="left:1791.5px;top:243px" width="24" height="24" viewBox="0 0 24 24"><path d="M4 12h16" stroke="#4b555c" stroke-width="3" stroke-linecap="round"/><rect x="8.5" y="9.5" width="7" height="5" rx="1.5" fill="#f4f4f4" stroke="#4b555c" stroke-width="1.4"/></svg>
<svg class="a" style="left:1827px;top:243px" width="24" height="24" viewBox="0 0 24 24"><path d="M3 9h18" stroke="#4b555c" stroke-width="3" stroke-linecap="round"/><path d="M3 15h18" stroke="#4b555c" stroke-width="3" stroke-linecap="round"/></svg>
<svg class="a" style="left:1863.3px;top:243px" width="24" height="24" viewBox="0 0 24 24"><path d="M3 8.5h18" stroke="#4b555c" stroke-width="3" stroke-linecap="round"/><rect x="8.5" y="6.0" width="7" height="5" rx="1.5" fill="#f4f4f4" stroke="#4b555c" stroke-width="1.4"/><path d="M3 15.5h18" stroke="#4b555c" stroke-width="3" stroke-linecap="round"/><rect x="8.5" y="13.0" width="7" height="5" rx="1.5" fill="#f4f4f4" stroke="#4b555c" stroke-width="1.4"/></svg>
<svg class="a" style="left:1755px;top:275px" width="24" height="24" viewBox="0 0 24 24"><path d="M3 3h18M3 21h18" stroke="#4b555c" stroke-width="1.8"/><path d="M12 3v18" stroke="#4b555c"/><rect x="9.5" y="6.0" width="5" height="4" rx="1.5" fill="#f4f4f4" stroke="#4b555c" stroke-width="1.4"/><rect x="9.5" y="10.0" width="5" height="4" rx="1.5" fill="#f4f4f4" stroke="#4b555c" stroke-width="1.4"/><rect x="9.5" y="14.0" width="5" height="4" rx="1.5" fill="#f4f4f4" stroke="#4b555c" stroke-width="1.4"/></svg>
<svg class="a" style="left:1791.5px;top:275px" width="24" height="24" viewBox="0 0 24 24"><path d="M3 10h18" stroke="#4b555c" stroke-width="3" stroke-linecap="round"/><rect x="8.5" y="7.5" width="7" height="5" rx="1.5" fill="#f4f4f4" stroke="#4b555c" stroke-width="1.4"/><path d="M3 15h18" stroke="#4b555c" stroke-width="1.4"/></svg>
<svg class="a" style="left:1827px;top:275px" width="24" height="24" viewBox="0 0 24 24"><path d="M3 7h18" stroke="#4b555c" stroke-width="3" stroke-linecap="round"/><path d="M3 12h18" stroke="#4b555c" stroke-width="3" stroke-linecap="round"/><path d="M3 17h18" stroke="#4b555c" stroke-width="3" stroke-linecap="round"/></svg>
<svg class="a" style="left:1863.3px;top:275px" width="24" height="24" viewBox="0 0 24 24"><path d="M3 7h18" stroke="#4b555c" stroke-width="3" stroke-linecap="round"/><rect x="9.0" y="5.0" width="6" height="4" rx="1.5" fill="#f4f4f4" stroke="#4b555c" stroke-width="1.4"/><path d="M3 12h18" stroke="#4b555c" stroke-width="3" stroke-linecap="round"/><rect x="9.0" y="10.0" width="6" height="4" rx="1.5" fill="#f4f4f4" stroke="#4b555c" stroke-width="1.4"/><path d="M3 17h18" stroke="#4b555c" stroke-width="1.4"/></svg>
<svg class="a" style="left:1755px;top:307px" width="24" height="24" viewBox="0 0 24 24"><g stroke="#aaa" stroke-width="1" fill="none" stroke-dasharray="1 1"><path d="M3 8h18M3 13h18M3 18h18"/><rect x="8" y="6" width="4" height="4"/><rect x="8" y="11" width="4" height="4"/></g></svg>
<svg class="a" style="left:1791.5px;top:307px" width="24" height="24" viewBox="0 0 24 24"><circle cx="12" cy="12" r="9" fill="none" stroke="#4b555c" stroke-width="1.5"/><circle cx="12" cy="12" r="6" fill="none" stroke="#4b555c" stroke-width="1.5"/></svg>
<svg class="a" style="left:1827px;top:307px" width="24" height="24" viewBox="0 0 24 24"><rect x="3" y="3" width="18" height="18" rx="2" fill="none" stroke="#4b555c" stroke-width="1.5"/><rect x="6.5" y="6.5" width="11" height="11" rx="1.5" fill="none" stroke="#4b555c" stroke-width="1.5"/></svg>
<svg class="a" style="left:1863.3px;top:307px" width="24" height="24" viewBox="0 0 24 24"><rect x="3" y="3" width="18" height="18" rx="3" fill="none" stroke="#4b555c" stroke-width="1.5" stroke-dasharray="2 1.5"/><rect x="6" y="6" width="12" height="12" fill="none" stroke="#bbb" stroke-dasharray="1 1"/></svg>
<svg class="a" style="left:1755px;top:339px" width="24" height="24" viewBox="0 0 24 24"><circle cx="12" cy="12" r="9.5" fill="#fafafa" stroke="#4b555c" stroke-width="2"/></svg>
<svg class="a" style="left:1791.5px;top:339px" width="24" height="24" viewBox="0 0 24 24"><rect x="2.5" y="2.5" width="19" height="19" fill="#fafafa" stroke="#4b555c" stroke-width="2"/></svg>
<svg class="a" style="left:1827px;top:339px" width="24" height="24" viewBox="0 0 24 24"><circle cx="12" cy="12" r="9.5" fill="#fafafa" stroke="#4b555c" stroke-width="1.3"/></svg>
<svg class="a" style="left:1755px;top:395px" width="24" height="24" viewBox="0 0 24 24"><rect x="3.5" y="2.5" width="16" height="19" rx="1" fill="none" stroke="#9a9a9a" stroke-dasharray="1 1.2"/><path d="M8 5.5v13M8 12h5.5M13.5 5.5v6.5" fill="none" stroke="#a8a8a8" stroke-width="1.1"/></svg>
<svg class="a" style="left:1791.5px;top:395px" width="24" height="24" viewBox="0 0 24 24"><path d="M2 15h5l11-6" fill="none" stroke="#4b555c" stroke-width="1.5"/><path d="M14 13l4 4M18 13l-4 4M18 15h4" stroke="#4b555c" stroke-width="1.2"/></svg>
<svg class="a" style="left:1827px;top:395px" width="24" height="24" viewBox="0 0 24 24"><path d="M2 13h5l11-6" fill="none" stroke="#4b555c" stroke-width="1.5"/><path d="M16 12v6M16 15h5" stroke="#4b555c" stroke-width="1.3"/></svg>
<svg class="a" style="left:1863.3px;top:395px" width="24" height="24" viewBox="0 0 24 24"><path d="M2 15h6M9 15l11-5M20 10h2" fill="none" stroke="#4b555c" stroke-width="1.5"/><path d="M8 12l4 6M12 12l-4 6M6 15h8" stroke="#4b555c" stroke-width="1.2"/></svg>
<svg class="a" style="left:1755px;top:427px" width="24" height="24" viewBox="0 0 24 24"><path d="M2 15h5l11-6" fill="none" stroke="#4b555c" stroke-width="1.5"/><path d="M16 13v6M13 16h6M18 16h4" stroke="#4b555c" stroke-width="1.2"/></svg>
<svg class="a" style="left:1791.5px;top:427px" width="24" height="24" viewBox="0 0 24 24"><path d="M2 15h5l11-6" fill="none" stroke="#4b555c" stroke-width="1.5"/><circle cx="17" cy="16" r="1.8" fill="none" stroke="#4b555c"/><path d="M19 16h3" stroke="#4b555c"/></svg>
<svg class="a" style="left:1827px;top:427px" width="24" height="24" viewBox="0 0 24 24"><path d="M2 12h20" stroke="#4b555c" stroke-width="1.5"/><rect x="6" y="8" width="12" height="8" rx="2" fill="none" stroke="#4b555c" stroke-width="1.5"/></svg>
<svg class="a" style="left:1863.3px;top:427px" width="24" height="24" viewBox="0 0 24 24"><path d="M2 12h20" stroke="#8a8a8a" stroke-width="1.5"/><rect x="7" y="8" width="10" height="8" rx="2" fill="#8a8a8a"/></svg>
<svg class="a" style="left:1755px;top:483px" width="24" height="24" viewBox="0 0 24 24"><path d="M4 3v2M2 4h7v9H17v8M13 21h8" fill="none" stroke="#4b555c" stroke-width="1.5"/></svg>
<svg class="a" style="left:1791.5px;top:483px" width="24" height="24" viewBox="0 0 24 24"><path d="M12 2v20M8 9a4 4 0 1 1 4 4" fill="none" stroke="#4b555c" stroke-width="1.5"/></svg>
<svg class="a" style="left:1827px;top:483px" width="24" height="24" viewBox="0 0 24 24"><path d="M12 2v20" fill="none" stroke="#4b555c" stroke-width="1.5"/><rect x="9" y="7" width="6" height="10" rx="1" fill="#fafafa" stroke="#4b555c" stroke-width="1.5"/></svg>
<svg class="a" style="left:1863.3px;top:483px" width="24" height="24" viewBox="0 0 24 24"><path d="M12 2v7M12 15v7M4 9h16M4 15h16" stroke="#4b555c" stroke-width="1.8"/></svg>
<svg class="a" style="left:1755px;top:515px" width="24" height="24" viewBox="0 0 24 24"><path d="M1 12h2M21 12h2" stroke="#4b555c" stroke-width="1.5"/><rect x="3" y="5" width="18" height="14" rx="1.5" fill="#fafafa" stroke="#4b555c" stroke-width="1.5"/><text x="4.2" y="15" font-size="9" font-family="Liberation Sans" fill="#b0203f" letter-spacing="-1" textLength="15" lengthAdjust="spacingAndGlyphs">RLC</text></svg>
<svg class="a" style="left:1791.5px;top:515px" width="24" height="24" viewBox="0 0 24 24"><path d="M1 12h2M21 12h2" stroke="#4b555c" stroke-width="1.5"/><rect x="3" y="5" width="18" height="14" rx="1.5" fill="#fafafa" stroke="#4b555c" stroke-width="1.5"/><text x="8.2" y="16" font-size="11" font-weight="bold" font-family="Liberation Sans" fill="#b0203f" letter-spacing="-0.5">Z</text></svg>
<svg class="a" style="left:1755px;top:571px" width="24" height="24" viewBox="0 0 24 24"><path d="M12 1v3M12 20v3" fill="none" stroke="#4b555c" stroke-width="1.5"/><circle cx="12" cy="9.5" r="5.5" fill="none" stroke="#4b555c" stroke-width="1.5"/><circle cx="12" cy="14.5" r="5.5" fill="none" stroke="#4b555c" stroke-width="1.5"/></svg>
<svg class="a" style="left:1791.5px;top:571px" width="24" height="24" viewBox="0 0 24 24"><path d="M12 2v20" fill="none" stroke="#4b555c" stroke-width="1.5"/><path d="M3 10c2-2 3 2 5 0s3 2 4 0M12 10c2-2 3 2 5 0s3 2 4 0M3 14c2-2 3 2 5 0s3 2 4 0M12 14c2-2 3 2 5 0s3 2 4 0" fill="none" stroke="#4b555c" stroke-width="1"/></svg>
<svg class="a" style="left:1827px;top:571px" width="24" height="24" viewBox="0 0 24 24"><path d="M12 1v4a7 7 0 1 1-5 3M12 22v-4" fill="none" stroke="#4b555c" stroke-width="1.5"/><circle cx="11" cy="14" r="3" fill="none" stroke="#4b555c" stroke-width="1.5"/></svg>
<svg class="a" style="left:1863.3px;top:571px" width="24" height="24" viewBox="0 0 24 24"><circle cx="11" cy="13" r="7" fill="none" stroke="#4b555c" stroke-width="1.5"/><path d="M3 21L20 4M15 4h5v5" fill="none" stroke="#4b555c" stroke-width="1.6"/></svg>
<svg class="a" style="left:1755px;top:603px" width="24" height="24" viewBox="0 0 24 24"><circle cx="12" cy="9" r="5" fill="none" stroke="#4b555c" stroke-width="1.5"/><circle cx="8" cy="15" r="5" fill="none" stroke="#4b555c" stroke-width="1.5"/><circle cx="16" cy="15" r="5" fill="none" stroke="#4b555c" stroke-width="1.5"/><path d="M12 1v3M3 21h18" fill="none" stroke="#4b555c" stroke-width="1.5"/></svg>
<svg class="a" style="left:1791.5px;top:603px" width="24" height="24" viewBox="0 0 24 24"><circle cx="12" cy="9" r="5" fill="#fafafa" stroke="#4b555c" stroke-width="1.5"/><circle cx="7" cy="16" r="4.5" fill="none" stroke="#4b555c" stroke-width="1.5"/><circle cx="17" cy="16" r="4.5" fill="none" stroke="#4b555c" stroke-width="1.5"/><circle cx="12" cy="16" r="4.5" fill="none" stroke="#4b555c" stroke-width="1.5"/><path d="M12 1v3" fill="none" stroke="#4b555c" stroke-width="1.5"/></svg>
<svg class="a" style="left:1827px;top:603px" width="24" height="24" viewBox="0 0 24 24"><path d="M2 6h20M12 1v5M12 19v4" fill="none" stroke="#4b555c" stroke-width="1.5"/><circle cx="12" cy="10.5" r="4.5" fill="none" stroke="#4b555c" stroke-width="1.5"/><circle cx="12" cy="14.5" r="4.5" fill="none" stroke="#4b555c" stroke-width="1.5"/></svg>
<svg class="a" style="left:1863.3px;top:603px" width="24" height="24" viewBox="0 0 24 24"><path d="M3 3h18M3 21h18M5 3l3 4h8l3-4M5 21l3-4h8l3 4" fill="none" stroke="#4b555c" stroke-width="1.6"/><path d="M8 9h8M8 12h8M8 15h8" stroke="#4b555c" stroke-width="1.8"/></svg>
<svg class="a" style="left:1755px;top:659px" width="24" height="24" viewBox="0 0 24 24"><circle cx="12" cy="12.5" r="7.6" fill="#fafafa" stroke="#4b555c" stroke-width="1.5"/><path d="M12 2.5v2.5" fill="none" stroke="#4b555c" stroke-width="1.5"/><text x="8.6" y="16.8" font-size="10" font-family="Liberation Sans" fill="#b0203f">S</text></svg>
<svg class="a" style="left:1791.5px;top:659px" width="24" height="24" viewBox="0 0 24 24"><circle cx="12" cy="12.5" r="7.6" fill="#fafafa" stroke="#4b555c" stroke-width="1.5"/><path d="M12 2.5v2.5" fill="none" stroke="#4b555c" stroke-width="1.5"/><text x="8.4" y="16.8" font-size="10" font-family="Liberation Sans" fill="#b0203f">A</text></svg>
<svg class="a" style="left:1827px;top:659px" width="24" height="24" viewBox="0 0 24 24"><circle cx="10" cy="12.5" r="7.6" fill="#fafafa" stroke="#4b555c" stroke-width="1.5"/><path d="M12 2.5v2.5" fill="none" stroke="#4b555c" stroke-width="1.5"/><text x="6.4" y="16.8" font-size="10" font-family="Liberation Sans" fill="#b0203f">A</text><rect x="18" y="9" width="4" height="8" fill="#fafafa" stroke="#4b555c" stroke-width="1.3"/></svg>
<svg class="a" style="left:1863.3px;top:659px" width="24" height="24" viewBox="0 0 24 24"><circle cx="12" cy="12.5" r="7.6" fill="#fafafa" stroke="#4b555c" stroke-width="1.5"/><path d="M12 2.5v2.5" fill="none" stroke="#4b555c" stroke-width="1.5"/><path d="M6 12h12" stroke="#b0203f" stroke-width="1.2"/><path d="M7 13l2 3 2-3M13 16l2-3 2 3" fill="none" stroke="#b0203f" stroke-width="1.1"/></svg>
<svg class="a" style="left:1755px;top:691px" width="24" height="24" viewBox="0 0 24 24"><circle cx="12" cy="12.5" r="7.6" fill="#fafafa" stroke="#4b555c" stroke-width="1.5"/><path d="M12 2.5v2.5" fill="none" stroke="#4b555c" stroke-width="1.5"/><path d="M12 12.5L7 15M12 12.5l5 3M12 12.5V7" stroke="#4b555c" stroke-width="1.5"/></svg>
<svg class="a" style="left:1791.5px;top:691px" width="24" height="24" viewBox="0 0 24 24"><circle cx="12" cy="12.5" r="7.6" fill="#fafafa" stroke="#4b555c" stroke-width="1.5"/><path d="M12 2.5v2.5" fill="none" stroke="#4b555c" stroke-width="1.5"/><path d="M6 13h12M12 8v3M12 15v3M14 9h3M14 17h3M15.5 7.5v3" stroke="#4b555c" stroke-width="1.2"/></svg>
<svg class="a" style="left:1827px;top:691px" width="24" height="24" viewBox="0 0 24 24"><circle cx="12" cy="12.5" r="7.6" fill="#fafafa" stroke="#4b555c" stroke-width="1.5"/><path d="M12 2.5v2.5" fill="none" stroke="#4b555c" stroke-width="1.5"/><text x="6" y="15.3" font-size="7" font-family="Liberation Sans" fill="#4b555c" letter-spacing="-0.3">H:0</text></svg>
<svg class="a" style="left:1863.3px;top:691px" width="24" height="24" viewBox="0 0 24 24"><path d="M12 1v3" fill="none" stroke="#4b555c" stroke-width="1.5"/><path d="M5 5h14v14H5zM5 5l7 6 7-6" fill="#fafafa" stroke="#4b555c" stroke-width="1.5"/></svg>
<svg class="a" style="left:1755px;top:723px" width="24" height="24" viewBox="0 0 24 24"><circle cx="12" cy="12.5" r="7.6" fill="#fafafa" stroke="#4b555c" stroke-width="1.5"/><path d="M12 2.5v2.5" fill="none" stroke="#4b555c" stroke-width="1.5"/><text x="7.2" y="15.5" font-size="9" font-family="Liberation Sans" fill="#b0203f">M</text><path d="M8 17.5h8" stroke="#b0203f"/></svg>
<svg class="a" style="left:1791.5px;top:723px" width="24" height="24" viewBox="0 0 24 24"><circle cx="12" cy="12.5" r="7.6" fill="#fafafa" stroke="#4b555c" stroke-width="1.5"/><path d="M12 2.5v2.5" fill="none" stroke="#4b555c" stroke-width="1.5"/><path d="M12 20v3" fill="none" stroke="#4b555c" stroke-width="1.5"/><text x="7.2" y="15.5" font-size="9" font-family="Liberation Sans" fill="#b0203f">M</text><path d="M8 17.5h8" stroke="#b0203f"/></svg>
<svg class="a" style="left:1827px;top:723px" width="24" height="24" viewBox="0 0 24 24"><path d="M12 1v4M5 6h14L12 21z" fill="#fafafa" stroke="#4b555c" stroke-width="1.5"/></svg>
<svg class="a" style="left:1863.3px;top:723px" width="24" height="24" viewBox="0 0 24 24"><text x="0" y="15" font-size="9" font-family="Liberation Sans" fill="#b0203f">M</text><text x="16" y="15" font-size="9" font-family="Liberation Sans" fill="#b0203f">V</text><path d="M12 1v22" stroke="#4b555c"/><circle cx="12" cy="8" r="2.5" fill="none" stroke="#4b555c" stroke-width="1.5"/><circle cx="12" cy="13" r="2.5" fill="none" stroke="#4b555c" stroke-width="1.5"/><path d="M9 18h6l-3 4z" fill="none" stroke="#4b555c" stroke-width="1.5"/></svg>
<svg class="a" style="left:1755px;top:755px" width="24" height="24" viewBox="0 0 24 24"><text x="3" y="15" font-size="9" font-family="Liberation Sans" fill="#b0203f">L</text><text x="14" y="15" font-size="9" font-family="Liberation Sans" fill="#b0203f">V</text><path d="M12 1v16M8 17h8l-4 5z" fill="none" stroke="#4b555c" stroke-width="1.4"/></svg>
<svg class="a" style="left:1791.5px;top:755px" width="24" height="24" viewBox="0 0 24 24"><path d="M12 1v3" fill="none" stroke="#4b555c" stroke-width="1.5"/><rect x="3" y="5" width="18" height="15" rx="1" fill="#fafafa" stroke="#4b555c" stroke-width="1.5"/><path d="M6 10h4v4H6zM7 9v-2M9 9v-2M8 14v3" fill="#4b555c" stroke="#4b555c"/><text x="12" y="17" font-size="10" font-family="Liberation Sans" fill="#4b555c">?</text></svg>
<svg class="a" style="left:1827px;top:755px" width="24" height="24" viewBox="0 0 24 24"><text x="2" y="15" font-size="9" font-family="Liberation Sans" fill="#b0203f">D</text><text x="15" y="15" font-size="9" font-family="Liberation Sans" fill="#b0203f">C</text><path d="M12 1v16M8 17h8l-4 5z" fill="none" stroke="#4b555c" stroke-width="1.4"/></svg>
<svg class="a" style="left:1863.3px;top:755px" width="24" height="24" viewBox="0 0 24 24"><text x="2" y="15" font-size="9" font-family="Liberation Sans" fill="#b0203f">D</text><text x="15" y="15" font-size="9" font-family="Liberation Sans" fill="#b0203f">C</text><path d="M10.5 1v16M13.5 1v16M8 17h8l-4 5z" fill="none" stroke="#4b555c" stroke-width="1.2"/></svg>
<svg class="a" style="left:1755px;top:811px" width="24" height="24" viewBox="0 0 24 24"><path d="M12 1v4" fill="none" stroke="#4b555c" stroke-width="1.5"/><rect x="2" y="5" width="20" height="15" fill="#fafafa" stroke="#4b555c" stroke-width="1.5"/><path d="M2 5l20 15M22 5L2 20M12 5l10 7.5-10 7.5-10-7.5z" fill="none" stroke="#4b555c" stroke-width="1"/></svg>
<svg class="a" style="left:1791.5px;top:811px" width="24" height="24" viewBox="0 0 24 24"><circle cx="12" cy="12.5" r="7.6" fill="#fafafa" stroke="#4b555c" stroke-width="1.5"/><path d="M12 2.5v2.5" fill="none" stroke="#4b555c" stroke-width="1.5"/><text x="8" y="16.5" font-size="10" font-family="Liberation Sans" fill="#b0203f">V</text><path d="M8 18h8" stroke="#b0203f"/></svg>
<svg class="a" style="left:1827px;top:811px" width="24" height="24" viewBox="0 0 24 24"><circle cx="12" cy="12.5" r="7.6" fill="#fafafa" stroke="#4b555c" stroke-width="1.5" stroke-dasharray="22 3"/><path d="M12 2.5v2.5" fill="none" stroke="#4b555c" stroke-width="1.5"/><path d="M6 13c2-4 4-4 6 0s4 4 6 0" fill="none" stroke="#b0203f" stroke-width="1.3"/></svg>
<svg class="a" style="left:1863.3px;top:811px" width="24" height="24" viewBox="0 0 24 24"><circle cx="12" cy="12.5" r="7.6" fill="#fafafa" stroke="#4b555c" stroke-width="1.5"/><path d="M12 2.5v2.5" fill="none" stroke="#4b555c" stroke-width="1.5"/><text x="8" y="16.5" font-size="10" font-family="Liberation Sans" fill="#b0203f">V</text><path d="M8 18h8" stroke="#b0203f"/></svg>
<svg class="a" style="left:1755px;top:843px" width="24" height="24" viewBox="0 0 24 24"><circle cx="12" cy="12.5" r="7.6" fill="#fafafa" stroke="#4b555c" stroke-width="1.5"/><path d="M12 2.5v2.5" fill="none" stroke="#4b555c" stroke-width="1.5"/><path d="M12 20v3" fill="none" stroke="#4b555c" stroke-width="1.5"/><path d="M6 13c2-4 4-4 6 0s4 4 6 0" fill="none" stroke="#b0203f" stroke-width="1.3"/></svg>
<svg class="a" style="left:1791.5px;top:843px" width="24" height="24" viewBox="0 0 24 24"><circle cx="12" cy="12.5" r="7.6" fill="#fafafa" stroke="#4b555c" stroke-width="1.5"/><path d="M12 2.5v2.5" fill="none" stroke="#4b555c" stroke-width="1.5"/><text x="8" y="16" font-size="10" font-family="Liberation Sans" fill="#b0203f">V</text><path d="M8 17.5h8M8 19h8" stroke="#b0203f" stroke-width=".8"/></svg>
<svg class="a" style="left:1827px;top:843px" width="24" height="24" viewBox="0 0 24 24"><circle cx="12" cy="12.5" r="7.6" fill="#fafafa" stroke="#4b555c" stroke-width="1.5"/><path d="M12 2.5v2.5" fill="none" stroke="#4b555c" stroke-width="1.5"/><path d="M12 20v3" fill="none" stroke="#4b555c" stroke-width="1.5"/><path d="M10 9v7M8 14l2 3 2-3M14 12h3M14 14h3" stroke="#b0203f" stroke-width="1.3" fill="none"/></svg>
<svg class="a" style="left:1863.3px;top:843px" width="24" height="24" viewBox="0 0 24 24"><circle cx="12" cy="12.5" r="7.6" fill="#fafafa" stroke="#4b555c" stroke-width="1.5"/><path d="M12 2.5v2.5" fill="none" stroke="#4b555c" stroke-width="1.5"/><path d="M12 20v3" fill="none" stroke="#4b555c" stroke-width="1.5"/><path d="M10 9v7M8 14l2 3 2-3M14 12h3M14 14h3" stroke="#b0203f" stroke-width="1.3" fill="none"/></svg>
<svg class="a" style="left:1755px;top:875px" width="24" height="24" viewBox="0 0 24 24"><circle cx="12" cy="12.5" r="7.6" fill="#fafafa" stroke="#4b555c" stroke-width="1.5"/><path d="M12 2.5v2.5" fill="none" stroke="#4b555c" stroke-width="1.5"/><path d="M12 20v3" fill="none" stroke="#4b555c" stroke-width="1.5"/><text x="8" y="16" font-size="10" font-family="Liberation Sans" fill="#b0203f">V</text><path d="M8 17.5h8M8 19h8" stroke="#b0203f" stroke-width=".8"/></svg>
<svg class="a" style="left:1791.5px;top:875px" width="24" height="24" viewBox="0 0 24 24"><circle cx="12" cy="12.5" r="7.6" fill="#fafafa" stroke="#4b555c" stroke-width="1.5"/><path d="M12 2.5v2.5" fill="none" stroke="#4b555c" stroke-width="1.5"/><path d="M12 20v3" fill="none" stroke="#4b555c" stroke-width="1.5"/><path d="M5 16h3l2-7c1 4 3 7 6 7h2" fill="none" stroke="#4b555c" stroke-width="1.3"/></svg>
<svg class="a" style="left:1827px;top:875px" width="24" height="24" viewBox="0 0 24 24"><circle cx="12" cy="12.5" r="7.6" fill="#fafafa" stroke="#4b555c" stroke-width="1.5"/><path d="M12 2.5v2.5" fill="none" stroke="#4b555c" stroke-width="1.5"/><path d="M12 20v3" fill="none" stroke="#4b555c" stroke-width="1.5"/><path d="M6 13h12M12 8v3M12 15v3M14 9h3M15.5 7.5v3M14 17h3" stroke="#4b555c" stroke-width="1.2"/></svg>
<svg class="a" style="left:1863.3px;top:875px" width="24" height="24" viewBox="0 0 24 24"><circle cx="12" cy="12.5" r="7.6" fill="#fafafa" stroke="#4b555c" stroke-width="1.5"/><path d="M12 2.5v2.5" fill="none" stroke="#4b555c" stroke-width="1.5"/><path d="M12 20v3" fill="none" stroke="#4b555c" stroke-width="1.5"/><path d="M6 13h12M12 8v3M12 15v3M14 9h3M15.5 7.5v3M14 17h3" stroke="#4b555c" stroke-width="1.2"/></svg>
<svg class="a" style="left:1755px;top:931px" width="24" height="24" viewBox="0 0 24 24"><path d="M12 1v3M8 9a4 4 0 1 1 4 4v4M6 17h12M6 21h12" fill="none" stroke="#4b555c" stroke-width="1.5"/></svg>
<svg class="a" style="left:1791.5px;top:931px" width="24" height="24" viewBox="0 0 24 24"><path d="M12 1v3M8 9a4 4 0 1 1 4 4v4M8 19h8" fill="none" stroke="#4b555c" stroke-width="1.5"/></svg>
<svg class="a" style="left:1827px;top:931px" width="24" height="24" viewBox="0 0 24 24"><path d="M12 1v9M12 16v6M4 10h16M4 16h16" stroke="#4b555c" stroke-width="1.8"/></svg>
<svg class="a" style="left:1863.3px;top:931px" width="24" height="24" viewBox="0 0 24 24"><path d="M4 6h8v8H4z" fill="none" stroke="#4b555c" stroke-width="1.3"/><path d="M12 3v3M10 10a4 4 0 1 1 4 4v3M8 17h10M8 20h10" fill="none" stroke="#4b555c" stroke-width="1.4"/></svg>
<svg class="a" style="left:1755px;top:963px" width="24" height="24" viewBox="0 0 24 24"><path d="M4 4h8v8H4zM4 14h3" fill="none" stroke="#4b555c" stroke-width="1.3"/><path d="M12 1v3M10 8a4 4 0 1 1 4 4v4M7 16h10M7 19h10M7 22h10" fill="none" stroke="#4b555c" stroke-width="1.4"/></svg>
<svg class="a" style="left:1791.5px;top:963px" width="24" height="24" viewBox="0 0 24 24"><path d="M12 1v4" stroke="#4b555c" stroke-width="1.5"/><rect x="3" y="5" width="18" height="14" rx="1.5" fill="#fafafa" stroke="#4b555c" stroke-width="1.5"/><text x="4.2" y="15" font-size="9" font-family="Liberation Sans" fill="#b0203f" letter-spacing="-1" textLength="15" lengthAdjust="spacingAndGlyphs">RLC</text></svg>
<svg class="a" style="left:1827px;top:963px" width="24" height="24" viewBox="0 0 24 24"><path d="M12 1v4" stroke="#4b555c" stroke-width="1.5"/><rect x="3" y="5" width="18" height="14" rx="1.5" fill="#fafafa" stroke="#4b555c" stroke-width="1.5"/><text x="4.2" y="15" font-size="9" font-family="Liberation Sans" fill="#b0203f" letter-spacing="-1" textLength="15" lengthAdjust="spacingAndGlyphs">SVS</text></svg>
<div class="a" style="left:0px;top:1006px;width:1919px;height:25px;background:#f0f0f0;"></div>
<div class="a" style="left:798px;top:1009px;width:1px;height:20px;background:#d6d6d6;"></div>
<div class="a" style="left:1025px;top:1009px;width:1px;height:20px;background:#d6d6d6;"></div>
<div class="a" style="left:1211px;top:1009px;width:1px;height:20px;background:#d6d6d6;"></div>
<div class="a" style="left:1457px;top:1009px;width:1px;height:20px;background:#d6d6d6;"></div>
<div class="a" style="left:1532px;top:1009px;width:1px;height:20px;background:#d6d6d6;"></div>
<div class="a" style="left:1688px;top:1009px;width:1px;height:20px;background:#d6d6d6;"></div>
<div class="a" style="left:1855px;top:1009px;width:1px;height:20px;background:#d6d6d6;"></div>
<div class="a" style="left:0px;top:1031px;width:1919px;height:3px;background:#1c1c1c;"></div>
<div class="t" style="left:6px;top:1014.34px;font-size:12px;transform:scaleX(0.9770);transform-origin:0 0;">Ejecutar Simulación</div>
<div class="t" style="left:1100px;top:1014.34px;font-size:12px;transform:scaleX(0.9739);transform-origin:0 0;">01:555 s</div>
<div class="t" style="left:1466px;top:1014.34px;font-size:12px;transform:scaleX(0.9623);transform-origin:0 0;">DB 1264300</div>
<div class="t" style="left:1545px;top:1014.34px;font-size:12px;transform:scaleX(0.9676);transform-origin:0 0;">28/02/2029 11:59:10 p. m.</div>
<div class="t" style="left:1741px;top:1014.34px;font-size:12px;transform:scaleX(0.9841);transform-origin:0 0;">Controlador</div>
<svg class="a" style="left:1865px;top:1012px" width="49" height="16" viewBox="0 0 49 16"><rect x="0" y="0" width="49" height="16" rx="8" fill="#3f474d"/><circle cx="10" cy="8" r="6" fill="#46d21e"/><circle cx="24.5" cy="8" r="6" fill="#9a9a9a"/><circle cx="39" cy="8" r="6" fill="#9a9a9a"/></svg>
</body></html>
